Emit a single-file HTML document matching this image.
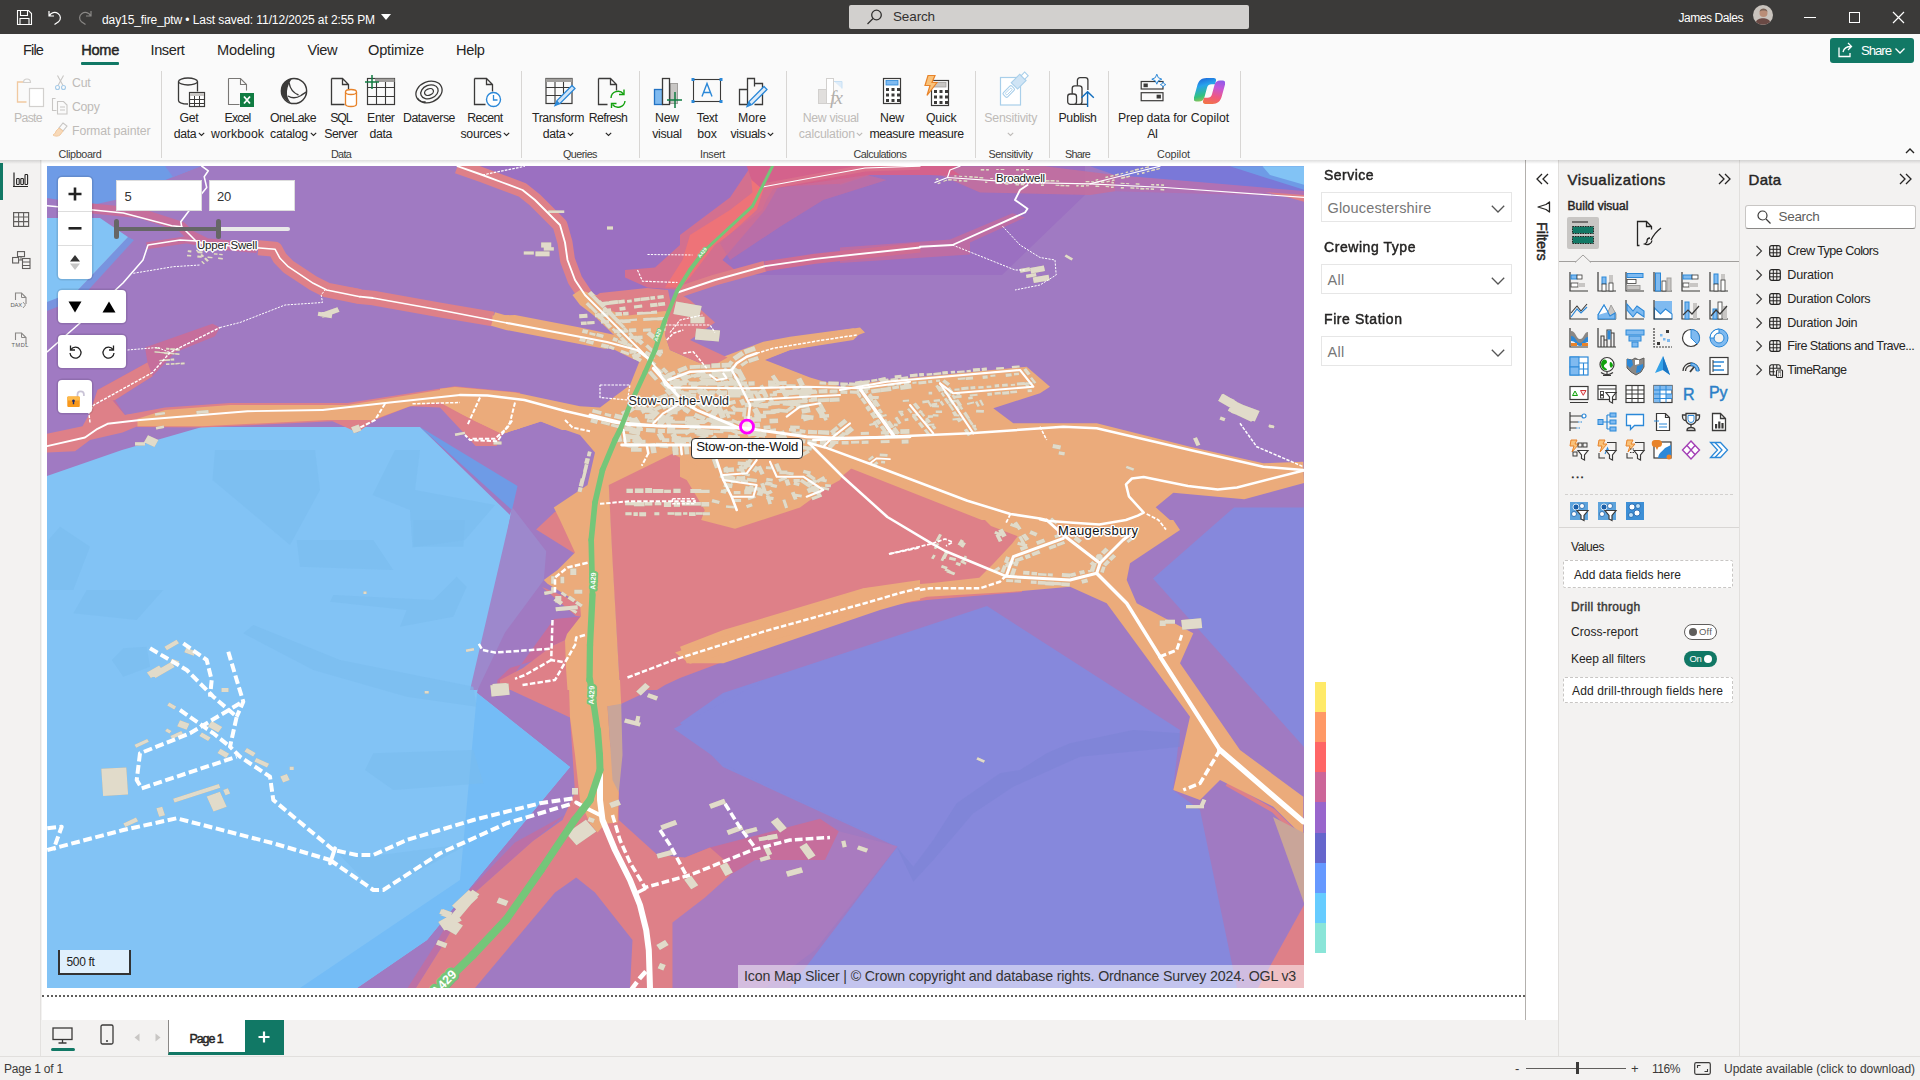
<!DOCTYPE html>
<html lang="en">
<head>
<meta charset="utf-8">
<title>day15_fire_ptw</title>
<style>
*{box-sizing:border-box;margin:0;padding:0}
html,body{width:1920px;height:1080px;overflow:hidden;background:#f3f2f1;font-family:"Liberation Sans",sans-serif;color:#252423}
.abs{position:absolute}
svg{overflow:visible}
.tx{position:absolute;white-space:nowrap}
#titlebar{position:absolute;left:0;top:0;width:1920px;height:34px;background:#3b3a39}
#ribbon{position:absolute;left:0;top:34px;width:1920px;height:126px;background:#fafafa;}
#leftnav{position:absolute;left:0;top:160px;width:41px;height:896px;background:#f3f2f1;border-right:1px solid #e3e1df}
#canvas{position:absolute;left:42px;top:160px;width:1483px;height:860px;background:#fff}
#map{position:absolute;left:47px;top:166px;width:1257px;height:822px;overflow:hidden;background:#a07ac2}
#filters{position:absolute;left:1525px;top:160px;width:33px;height:860px;background:#fff;border-left:1px solid #b3b0ad}
#viz{position:absolute;left:1558px;top:160px;width:182px;height:896px;background:#f3f2f1;border-left:1px solid #e1dfdd;border-right:1px solid #e1dfdd}
#data{position:absolute;left:1740px;top:160px;width:180px;height:896px;background:#f3f2f1}
#pagetabs{position:absolute;left:42px;top:1020px;width:1516px;height:36px;background:#f3f2f1}
#status{position:absolute;left:0;top:1056px;width:1920px;height:24px;background:#f3f2f1;border-top:1px solid #e1dfdd}
</style>
</head>
<body>
<div id="titlebar">
<svg class="abs" style="left:16px;top:9px" width="17" height="17" viewBox="0 0 17 17" ><path d="M1.5 1.5h11l3 3v11h-14z M4.5 1.5v5h7v-5 M4 15.5v-6h9v6" fill="none" stroke="#fff" stroke-width="1.1"/></svg>
<svg class="abs" style="left:47px;top:9px" width="15" height="16" viewBox="0 0 15 16" ><path d="M2 2v5h5 M2.3 7C4 3.5 8 2.5 11 4.5s3.2 6 .5 8.3L7.5 15.5" fill="none" stroke="#fff" stroke-width="1.2"/></svg>
<svg class="abs" style="left:78px;top:9px" width="15" height="16" viewBox="0 0 15 16" ><path d="M13 2v5h-5 M12.7 7C11 3.5 7 2.5 4 4.5s-3.2 6-.5 8.3L7.5 15.5" fill="none" stroke="#8a8886" stroke-width="1.2"/></svg>
<span class="tx" style="left:102px;top:12.3px;font-size:12px;line-height:16px;letter-spacing:-0.09px;color:#fff;">day15_fire_ptw • Last saved: 11/12/2025 at 2:55 PM</span>
<svg class="abs" style="left:381px;top:14px" width="10" height="6" viewBox="0 0 10 6" ><path d="M0 0h10l-5 6z" fill="#fff"/></svg>
<div class="abs" style="left:849px;top:5px;width:400px;height:24px;background:#d2d0ce;border-radius:2px"></div>
<svg class="abs" style="left:866px;top:9px" width="17" height="16" viewBox="0 0 17 16" ><circle cx="10.5" cy="6" r="4.8" fill="none" stroke="#323130" stroke-width="1.3"/><path d="M7 9.5L1.5 15" stroke="#323130" stroke-width="1.3"/></svg>
<span class="tx" style="left:893px;top:8px;font-size:13.5px;line-height:18px;letter-spacing:-0.13px;color:#323130;">Search</span>
<span class="tx" style="left:1678.5px;top:10px;font-size:12px;line-height:16px;letter-spacing:-0.44px;color:#fff;">James Dales</span>
<svg class="abs" style="left:1753px;top:5px" width="20" height="20" viewBox="0 0 20 20" ><circle cx="10" cy="10" r="10" fill="#c9c3bd"/><circle cx="10.5" cy="8" r="4" fill="#b98d77"/><path d="M3 17c1-5 13-5 14 0a10 10 0 0 1-14 0z" fill="#6a4a45"/><path d="M6.5 6.5c1-4 7-4 8 0-2-1.5-6-1.5-8 0z" fill="#7b6458"/></svg>
<div class="abs" style="left:1804px;top:17px;width:12px;height:1px;background:#fff"></div>
<div class="abs" style="left:1849px;top:12px;width:11px;height:11px;border:1px solid #fff"></div>
<svg class="abs" style="left:1892px;top:11px" width="13" height="13" viewBox="0 0 13 13" ><path d="M1 1l11 11M12 1L1 12" stroke="#fff" stroke-width="1.2"/></svg>
</div>
<div id="ribbon"></div>
<span class="tx" style="left:23px;top:40.5px;font-size:14.6px;line-height:19px;letter-spacing:-0.88px;">File</span>
<span class="tx" style="left:81.2px;top:40.5px;font-size:14.6px;line-height:19px;letter-spacing:-0.29px;-webkit-text-stroke:0.45px #252423;">Home</span>
<span class="tx" style="left:150.5px;top:40.5px;font-size:14.6px;line-height:19px;letter-spacing:-0.42px;">Insert</span>
<span class="tx" style="left:217px;top:40.5px;font-size:14.6px;line-height:19px;letter-spacing:-0.16px;">Modeling</span>
<span class="tx" style="left:307.5px;top:40.5px;font-size:14.6px;line-height:19px;letter-spacing:-0.47px;">View</span>
<span class="tx" style="left:368px;top:40.5px;font-size:14.6px;line-height:19px;letter-spacing:-0.2px;">Optimize</span>
<span class="tx" style="left:456px;top:40.5px;font-size:14.6px;line-height:19px;letter-spacing:-0.38px;">Help</span>
<div class="abs" style="left:81px;top:62px;width:38px;height:3px;background:#117865;border-radius:1px"></div>
<div class="abs" style="left:1830px;top:38px;width:84px;height:25px;background:#117865;border-radius:3px"></div>
<svg class="abs" style="left:1837px;top:42px" width="18" height="16" viewBox="0 0 18 16" ><path d="M2 5.5v9h11v-3.5 M6 10c1-4 4-5.5 8-5.5 M11 1l3.5 3.5L11 8" fill="none" stroke="#fff" stroke-width="1.3"/></svg>
<span class="tx" style="left:1861px;top:42px;font-size:13.2px;line-height:17px;letter-spacing:-1.04px;color:#fff;">Share</span>
<svg class="abs" style="left:1895px;top:48px" width="10" height="6" viewBox="0 0 10 6" ><path d="M0.5 0.5l4.5 4.5 4.5-4.5" fill="none" stroke="#fff" stroke-width="1.3"/></svg>
<svg class="abs" style="left:1905px;top:147px" width="10" height="7" viewBox="0 0 10 7" ><path d="M1 6l4-4 4 4" fill="none" stroke="#252423" stroke-width="1.4"/></svg>
<div class="abs" style="left:160.5px;top:71px;width:1px;height:87px;background:#d8d6d4"></div>
<div class="abs" style="left:521px;top:71px;width:1px;height:87px;background:#d8d6d4"></div>
<div class="abs" style="left:638.5px;top:71px;width:1px;height:87px;background:#d8d6d4"></div>
<div class="abs" style="left:786px;top:71px;width:1px;height:87px;background:#d8d6d4"></div>
<div class="abs" style="left:974.5px;top:71px;width:1px;height:87px;background:#d8d6d4"></div>
<div class="abs" style="left:1048.5px;top:71px;width:1px;height:87px;background:#d8d6d4"></div>
<div class="abs" style="left:1107.5px;top:71px;width:1px;height:87px;background:#d8d6d4"></div>
<div class="abs" style="left:1239.5px;top:71px;width:1px;height:87px;background:#d8d6d4"></div>
<span class="tx" style="left:58.5px;top:146.5px;font-size:10.8px;line-height:14px;letter-spacing:-0.36px;color:#3b3a39;">Clipboard</span>
<span class="tx" style="left:331px;top:146.5px;font-size:10.8px;line-height:14px;letter-spacing:-0.7px;color:#3b3a39;">Data</span>
<span class="tx" style="left:563px;top:146.5px;font-size:10.8px;line-height:14px;letter-spacing:-0.55px;color:#3b3a39;">Queries</span>
<span class="tx" style="left:700px;top:146.5px;font-size:10.8px;line-height:14px;letter-spacing:-0.34px;color:#3b3a39;">Insert</span>
<span class="tx" style="left:853.5px;top:146.5px;font-size:10.8px;line-height:14px;letter-spacing:-0.49px;color:#3b3a39;">Calculations</span>
<span class="tx" style="left:988.5px;top:146.5px;font-size:10.8px;line-height:14px;letter-spacing:-0.42px;color:#3b3a39;">Sensitivity</span>
<span class="tx" style="left:1065px;top:146.5px;font-size:10.8px;line-height:14px;letter-spacing:-0.76px;color:#3b3a39;">Share</span>
<span class="tx" style="left:1157px;top:146.5px;font-size:10.8px;line-height:14px;letter-spacing:-0.09px;color:#3b3a39;">Copilot</span>
<span class="tx" style="left:14px;top:109.5px;font-size:12.3px;line-height:16px;letter-spacing:-0.69px;color:#bebbb8;">Paste</span>
<span class="tx" style="left:72px;top:74.5px;font-size:12.3px;line-height:16px;letter-spacing:-0.21px;color:#bebbb8;">Cut</span>
<span class="tx" style="left:72px;top:99px;font-size:12.3px;line-height:16px;letter-spacing:-0.3px;color:#bebbb8;">Copy</span>
<span class="tx" style="left:72px;top:122.8px;font-size:12.3px;line-height:16px;letter-spacing:-0.11px;color:#bebbb8;">Format painter</span>
<span class="tx" style="left:179.5px;top:109.5px;font-size:12.3px;line-height:16px;letter-spacing:-0.27px;">Get</span>
<span class="tx" style="left:173.8px;top:125.8px;font-size:12.3px;line-height:16px;letter-spacing:-0.36px;">data</span>
<svg class="abs" style="left:197.8px;top:132px" width="7" height="5" viewBox="0 0 7 5" ><path d="M0.8 0.8l2.7 2.7 2.7-2.7" fill="none" stroke="#252423" stroke-width="1.1"/></svg>
<span class="tx" style="left:224.5px;top:109.5px;font-size:12.3px;line-height:16px;letter-spacing:-0.82px;">Excel</span>
<span class="tx" style="left:211px;top:125.8px;font-size:12.3px;line-height:16px;letter-spacing:0.05px;">workbook</span>
<span class="tx" style="left:270px;top:109.5px;font-size:12.3px;line-height:16px;letter-spacing:-0.56px;">OneLake</span>
<span class="tx" style="left:270px;top:125.8px;font-size:12.3px;line-height:16px;letter-spacing:-0.24px;">catalog</span>
<svg class="abs" style="left:309.5px;top:132px" width="7" height="5" viewBox="0 0 7 5" ><path d="M0.8 0.8l2.7 2.7 2.7-2.7" fill="none" stroke="#252423" stroke-width="1.1"/></svg>
<span class="tx" style="left:330.3px;top:109.5px;font-size:12.3px;line-height:16px;letter-spacing:-1.2px;">SQL</span>
<span class="tx" style="left:324.3px;top:125.8px;font-size:12.3px;line-height:16px;letter-spacing:-0.54px;">Server</span>
<span class="tx" style="left:367.1px;top:109.5px;font-size:12.3px;line-height:16px;letter-spacing:-0.38px;">Enter</span>
<span class="tx" style="left:369.6px;top:125.8px;font-size:12.3px;line-height:16px;letter-spacing:-0.36px;">data</span>
<span class="tx" style="left:403px;top:109.5px;font-size:12.3px;line-height:16px;letter-spacing:-0.45px;">Dataverse</span>
<span class="tx" style="left:467.2px;top:109.5px;font-size:12.3px;line-height:16px;letter-spacing:-0.58px;">Recent</span>
<span class="tx" style="left:460.5px;top:125.8px;font-size:12.3px;line-height:16px;letter-spacing:-0.3px;">sources</span>
<svg class="abs" style="left:503px;top:132px" width="7" height="5" viewBox="0 0 7 5" ><path d="M0.8 0.8l2.7 2.7 2.7-2.7" fill="none" stroke="#252423" stroke-width="1.1"/></svg>
<span class="tx" style="left:532px;top:109.5px;font-size:12.3px;line-height:16px;letter-spacing:-0.4px;">Transform</span>
<span class="tx" style="left:542.8px;top:125.8px;font-size:12.3px;line-height:16px;letter-spacing:-0.36px;">data</span>
<svg class="abs" style="left:566.8px;top:132px" width="7" height="5" viewBox="0 0 7 5" ><path d="M0.8 0.8l2.7 2.7 2.7-2.7" fill="none" stroke="#252423" stroke-width="1.1"/></svg>
<span class="tx" style="left:588.8px;top:109.5px;font-size:12.3px;line-height:16px;letter-spacing:-0.65px;">Refresh</span>
<svg class="abs" style="left:604.5px;top:132px" width="7" height="5" viewBox="0 0 7 5" ><path d="M0.8 0.8l2.7 2.7 2.7-2.7" fill="none" stroke="#252423" stroke-width="1.1"/></svg>
<span class="tx" style="left:655px;top:109.5px;font-size:12.3px;line-height:16px;letter-spacing:-0.2px;">New</span>
<span class="tx" style="left:652.2px;top:125.8px;font-size:12.3px;line-height:16px;letter-spacing:-0.32px;">visual</span>
<span class="tx" style="left:696.8px;top:109.5px;font-size:12.3px;line-height:16px;letter-spacing:-0.51px;">Text</span>
<span class="tx" style="left:697.2px;top:125.8px;font-size:12.3px;line-height:16px;letter-spacing:-0.11px;">box</span>
<span class="tx" style="left:738px;top:109.5px;font-size:12.3px;line-height:16px;letter-spacing:-0.01px;">More</span>
<span class="tx" style="left:730.5px;top:125.8px;font-size:12.3px;line-height:16px;letter-spacing:-0.37px;">visuals</span>
<svg class="abs" style="left:767px;top:132px" width="7" height="5" viewBox="0 0 7 5" ><path d="M0.8 0.8l2.7 2.7 2.7-2.7" fill="none" stroke="#252423" stroke-width="1.1"/></svg>
<span class="tx" style="left:802.8px;top:109.5px;font-size:12.3px;line-height:16px;letter-spacing:-0.35px;color:#bebbb8;">New visual</span>
<span class="tx" style="left:798.8px;top:125.8px;font-size:12.3px;line-height:16px;letter-spacing:-0.19px;color:#bebbb8;">calculation</span>
<svg class="abs" style="left:856.3px;top:132px" width="7" height="5" viewBox="0 0 7 5" ><path d="M0.8 0.8l2.7 2.7 2.7-2.7" fill="none" stroke="#bebbb8" stroke-width="1.1"/></svg>
<span class="tx" style="left:880px;top:109.5px;font-size:12.3px;line-height:16px;letter-spacing:-0.2px;">New</span>
<span class="tx" style="left:869.5px;top:125.8px;font-size:12.3px;line-height:16px;letter-spacing:-0.41px;">measure</span>
<span class="tx" style="left:926px;top:109.5px;font-size:12.3px;line-height:16px;letter-spacing:-0.19px;">Quick</span>
<span class="tx" style="left:918.7px;top:125.8px;font-size:12.3px;line-height:16px;letter-spacing:-0.41px;">measure</span>
<span class="tx" style="left:984.3px;top:109.5px;font-size:12.3px;line-height:16px;letter-spacing:-0.22px;color:#bebbb8;">Sensitivity</span>
<svg class="abs" style="left:1007.3px;top:132px" width="7" height="5" viewBox="0 0 7 5" ><path d="M0.8 0.8l2.7 2.7 2.7-2.7" fill="none" stroke="#bebbb8" stroke-width="1.1"/></svg>
<span class="tx" style="left:1058.5px;top:109.5px;font-size:12.3px;line-height:16px;letter-spacing:-0.33px;">Publish</span>
<span class="tx" style="left:1118px;top:109.5px;font-size:12.3px;line-height:16px;letter-spacing:-0.16px;">Prep data for</span>
<span class="tx" style="left:1147.2px;top:125.8px;font-size:12.3px;line-height:16px;letter-spacing:-0.56px;">AI</span>
<span class="tx" style="left:1190.8px;top:109.5px;font-size:12.3px;line-height:16px;letter-spacing:0.03px;">Copilot</span>
<svg class="abs" style="left:16px;top:77px" width="29" height="31" viewBox="0 0 29 31" ><path d="M7 5h-5.5v20h9" fill="none" stroke="#f1c9a0" stroke-width="1.3"/><path d="M7.5 5.5c0-2 1-3.5 3.5-3.5s3.5 1.5 3.5 3.5z" fill="none" stroke="#d2d0ce" stroke-width="1.2"/><rect x="13.5" y="11.5" width="14" height="18" fill="#fff" stroke="#d2d0ce" stroke-width="1.2"/></svg>
<svg class="abs" style="left:55px;top:75px" width="11" height="16" viewBox="0 0 11 16" ><path d="M2.5 0.5l5.5 10M8.5 0.5l-5.5 10" stroke="#c8c6c4" stroke-width="1.1"/><circle cx="2.5" cy="12.5" r="2" fill="none" stroke="#a6cbe8" stroke-width="1.1"/><circle cx="8.5" cy="12.5" r="2" fill="none" stroke="#a6cbe8" stroke-width="1.1"/></svg>
<svg class="abs" style="left:52px;top:98px" width="17" height="17" viewBox="0 0 17 17" ><path d="M3.5 0.5h-3v12h4M5.5 3.5h6l3.5 3.5v9h-9.5z M8 9h5M8 12h5" fill="none" stroke="#c8c6c4" stroke-width="1.1"/></svg>
<svg class="abs" style="left:52px;top:122px" width="17" height="15" viewBox="0 0 17 15" ><path d="M11 1l4 3-4 5-4-3z" fill="none" stroke="#c8c6c4" stroke-width="1.1"/><path d="M7 6l4 3-3 4c-2 1.5-5 1.5-7 0 2-1 3-3 3-4z" fill="#f8d9b8" stroke="#f1c9a0" stroke-width="1"/></svg>
<svg class="abs" style="left:177px;top:77px" width="29" height="31" viewBox="0 0 29 31" ><path d="M1.5 4.5v19c0 2 4 3.5 9.5 3.5M20.5 4.5v10" fill="none" stroke="#3b3a39" stroke-width="1.3"/><ellipse cx="11" cy="4.5" rx="9.5" ry="3.5" fill="none" stroke="#3b3a39" stroke-width="1.3"/><rect x="12.5" y="15.5" width="15" height="14" fill="#fff" stroke="#3b3a39" stroke-width="1.2"/><rect x="13" y="16" width="14" height="3" fill="#c8c6c4"/><path d="M17.5 19v10.5M22.5 19v10.5M12.5 22.5h15M12.5 26.5h15" stroke="#3b3a39" stroke-width="1"/></svg>
<svg class="abs" style="left:227px;top:77px" width="28" height="31" viewBox="0 0 28 31" ><path d="M1.5 1.5h12l6 6v6M19.5 7.5h-6v-6M1.5 1.5v26h11" fill="none" stroke="#797775" stroke-width="1.1"/><rect x="13" y="16" width="14" height="14" fill="#107c41"/><path d="M17 19.5l6 7M23 19.5l-6 7" stroke="#fff" stroke-width="1.8"/></svg>
<svg class="abs" style="left:280px;top:77px" width="28" height="28" viewBox="0 0 28 28" ><circle cx="14" cy="14" r="12.6" fill="none" stroke="#3b3a39" stroke-width="1.5"/><path d="M12 1.6c-6.5 1-11 6.5-10.5 13 .500 5.5 4 9.5 9 11-2.5-3-4-7-3.5-11.5.400-4.5 2.5-9 5-12.5z" fill="#3b3a39"/><path d="M10.5 1.8c3-1.5 7-1 9.5 1-3.5-.800-6.5-.500-9.5-1z" fill="#3b3a39"/><path d="M9 5.5c1 6 4.5 10.5 9.5 12.5M8 19c4 2.5 9 2 13-.500 2.5-1.7 4.3-3 5.5-3.5" fill="none" stroke="#3b3a39" stroke-width="1.4"/></svg>
<svg class="abs" style="left:330px;top:77px" width="28" height="31" viewBox="0 0 28 31" ><path d="M1.5 1.5h11l6 6v5M18.5 7.5h-6v-6M1.5 1.5v26h13" fill="none" stroke="#3b3a39" stroke-width="1.3"/><path d="M15.5 15v12c0 1.5 2.5 2.5 5.5 2.5s5.5-1 5.5-2.5v-12" fill="#fff" stroke="#e8832a" stroke-width="1.3"/><ellipse cx="21" cy="15" rx="5.5" ry="2.5" fill="#fff" stroke="#e8832a" stroke-width="1.3"/></svg>
<svg class="abs" style="left:365px;top:75px" width="31" height="31" viewBox="0 0 31 31" ><rect x="2.5" y="3.5" width="27" height="26" fill="none" stroke="#3b3a39" stroke-width="1.2"/><rect x="10" y="3.5" width="19.5" height="3.5" fill="#a19f9d"/><path d="M2.5 12.5h27M2.5 21.5h27M11.5 7v22.5M20.5 7v22.5" stroke="#3b3a39" stroke-width="1.1"/><path d="M7 0v14M0 7h14" stroke="#107c41" stroke-width="1.5"/></svg>
<svg class="abs" style="left:414px;top:79px" width="30" height="26" viewBox="0 0 30 26" ><g fill="none" stroke="#3b3a39" stroke-width="1.3" transform="rotate(-22 15 13)"><ellipse cx="15" cy="13" rx="13.5" ry="10.3"/><ellipse cx="15.5" cy="13" rx="9" ry="6.6"/><ellipse cx="15" cy="13" rx="4.6" ry="3.2"/></g><path d="M3.5 19c1.5 3 5 4.5 8 3.5" fill="none" stroke="#3b3a39" stroke-width="1.3"/></svg>
<svg class="abs" style="left:473px;top:77px" width="29" height="31" viewBox="0 0 29 31" ><path d="M1.5 1.5h12l6 6v7M19.5 7.5h-6v-6M1.5 1.5v26h11" fill="none" stroke="#3b3a39" stroke-width="1.3"/><circle cx="20.5" cy="22.5" r="7" fill="#fff" stroke="#2b88d8" stroke-width="1.4"/><path d="M20.5 18v5h4" fill="none" stroke="#2b88d8" stroke-width="1.3"/></svg>
<svg class="abs" style="left:545px;top:77px" width="31" height="31" viewBox="0 0 31 31" ><rect x="1" y="1.5" width="26" height="25" fill="none" stroke="#3b3a39" stroke-width="1.2"/><rect x="1" y="1.5" width="26" height="3.5" fill="#a19f9d"/><path d="M1 10.5h26M1 18.5h18M10 5v21.5M18.5 5v15" stroke="#3b3a39" stroke-width="1.1"/><path d="M27 8.5l3 3-15 15-5 2 2-5z" fill="#cfe4f7" stroke="#2b88d8" stroke-width="1.3"/><path d="M10 28.5l2-5 3 3z" fill="#2b88d8"/></svg>
<svg class="abs" style="left:597px;top:77px" width="30" height="31" viewBox="0 0 30 31" ><path d="M1.5 1.5h12l6 6v6M19.5 7.5h-6v-6M1.5 1.5v26h9" fill="none" stroke="#3b3a39" stroke-width="1.3"/><path d="M14 21a7 7 0 0 1 12.5-4M28 24a7 7 0 0 1-12.5 3.5" fill="none" stroke="#13a10e" stroke-width="1.4"/><path d="M27 12.5v5h-5M14.5 31v-4.5h5" fill="none" stroke="#13a10e" stroke-width="1.4"/></svg>
<svg class="abs" style="left:653px;top:77px" width="30" height="31" viewBox="0 0 30 31" ><rect x="17.5" y="6.5" width="7" height="20" fill="#c8c6c4" stroke="#a19f9d" stroke-width="1"/><rect x="1.5" y="12.5" width="8" height="15" fill="#7fbaf0" stroke="#2272c3" stroke-width="1.3"/><rect x="9.5" y="1.5" width="7" height="26" fill="#fafafa" stroke="#3b3a39" stroke-width="1.3"/><path d="M22 15v16M14 23h15" stroke="#107c41" stroke-width="1.5"/></svg>
<svg class="abs" style="left:691px;top:77px" width="32" height="28" viewBox="0 0 32 28" ><rect x="2.5" y="2.5" width="27" height="22" fill="none" stroke="#3b3a39" stroke-width="1.1"/><rect x="0.5" y="1" width="3" height="3" fill="#2b88d8"/><rect x="28.5" y="1" width="3" height="3" fill="#2b88d8"/><rect x="0.5" y="23" width="3" height="3" fill="#2b88d8"/><rect x="28.5" y="23" width="3" height="3" fill="#2b88d8"/><path d="M11 19.5l5-13 5 13M12.5 15.5h7" fill="none" stroke="#2b88d8" stroke-width="1.4"/></svg>
<svg class="abs" style="left:738px;top:77px" width="31" height="31" viewBox="0 0 31 31" ><path d="M1.5 27.5v-15h8v15zM9.5 12.5v-11h7v8M16.5 6.5h8v21h-8" fill="none" stroke="#3b3a39" stroke-width="1.3"/><path d="M26 9.5l3 3-15 15-5 2 2-5z" fill="#deecf9" stroke="#2b88d8" stroke-width="1.3"/><path d="M9 29.5l2-5 3 3z" fill="#2b88d8"/></svg>
<svg class="abs" style="left:817px;top:77px" width="30" height="30" viewBox="0 0 30 30" ><rect x="1.5" y="12.5" width="8" height="14" fill="#e1dfdd" stroke="#d2d0ce" stroke-width="1"/><rect x="9.5" y="1.5" width="7" height="25" fill="#fff" stroke="#d2d0ce" stroke-width="1"/><path d="M17 4.5h8v7" fill="#deecf9" stroke="#c7e0f4" stroke-width="1"/></svg>
<span class="tx" style="left:830px;top:84.5px;font-size:19.5px;line-height:25px;letter-spacing:-1.08px;color:#b3b0ad;font-family:'Liberation Serif',serif;font-style:italic;">fx</span>
<svg class="abs" style="left:882px;top:77px" width="20" height="28" viewBox="0 0 20 28" ><rect x="1.5" y="1.5" width="17" height="25" fill="#fff" stroke="#3b3a39" stroke-width="1.2"/><rect x="4" y="3.5" width="12" height="4.5" fill="#7fbaf0" stroke="#2b88d8" stroke-width="0.8"/><rect x="4" y="11" width="3" height="3" fill="#3b3a39"/><rect x="4" y="16.5" width="3" height="3" fill="#3b3a39"/><rect x="4" y="22" width="3" height="3" fill="#3b3a39"/><rect x="9.5" y="11" width="3" height="3" fill="#3b3a39"/><rect x="9.5" y="16.5" width="3" height="3" fill="#3b3a39"/><rect x="9.5" y="22" width="3" height="3" fill="#3b3a39"/><rect x="15" y="11" width="3" height="3" fill="#3b3a39"/><rect x="15" y="16.5" width="3" height="3" fill="#3b3a39"/><rect x="15" y="22" width="3" height="3" fill="#3b3a39"/></svg>
<svg class="abs" style="left:930px;top:79px" width="20" height="28" viewBox="0 0 20 28" ><rect x="1.5" y="1.5" width="17" height="25" fill="#fff" stroke="#3b3a39" stroke-width="1.2"/><rect x="4" y="3.5" width="12" height="4.5" fill="#c8c6c4" stroke="#a19f9d" stroke-width="0.8"/><rect x="4" y="11" width="3" height="3" fill="#3b3a39"/><rect x="4" y="16.5" width="3" height="3" fill="#3b3a39"/><rect x="4" y="22" width="3" height="3" fill="#3b3a39"/><rect x="9.5" y="11" width="3" height="3" fill="#3b3a39"/><rect x="9.5" y="16.5" width="3" height="3" fill="#3b3a39"/><rect x="9.5" y="22" width="3" height="3" fill="#3b3a39"/><rect x="15" y="11" width="3" height="3" fill="#3b3a39"/><rect x="15" y="16.5" width="3" height="3" fill="#3b3a39"/><rect x="15" y="22" width="3" height="3" fill="#3b3a39"/></svg>
<svg class="abs" style="left:924px;top:75px" width="14" height="21" viewBox="0 0 14 21" ><path d="M4 0.5h7l-3 7h5l-10 13 3-10h-5z" fill="#f9c27a" stroke="#e8832a" stroke-width="1.2"/></svg>
<svg class="abs" style="left:999px;top:75px" width="30" height="32" viewBox="0 0 30 32" ><rect x="1.5" y="2.5" width="20" height="27.5" fill="#fff" stroke="#a9cfea" stroke-width="1.2"/><g transform="rotate(45 14 13)"><rect x="9" y="-1.5" width="9" height="12" fill="#cfe4f5" stroke="#a9cfea" stroke-width="1.1"/><rect x="11" y="-6.5" width="5" height="5" fill="#fff" stroke="#a9cfea" stroke-width="1.1"/><rect x="10.5" y="12.5" width="6" height="12" rx="1.5" fill="#fff" stroke="#a9cfea" stroke-width="1.1"/><rect x="12.3" y="14.5" width="2.4" height="8" rx="1" fill="none" stroke="#a9cfea" stroke-width="0.9"/></g></svg>
<svg class="abs" style="left:1067px;top:77px" width="28" height="31" viewBox="0 0 28 31" ><rect x="10.4" y="0.7" width="10.5" height="26.6" rx="2.6" fill="#fafafa" stroke="#3b3a39" stroke-width="1.3"/><rect x="5.2" y="8.8" width="9.8" height="18.5" rx="2.6" fill="#fafafa" stroke="#3b3a39" stroke-width="1.3"/><rect x="0.7" y="17" width="8.8" height="10.3" rx="2.6" fill="#fafafa" stroke="#3b3a39" stroke-width="1.3"/><rect x="16" y="13" width="9" height="16" fill="#fafafa"/><path d="M16 27.3h4" stroke="#3b3a39" stroke-width="1.3"/><path d="M20.6 30v-15.5M14.4 20.8l6.2-6 6.2 6" fill="none" stroke="#0f6cbd" stroke-width="1.4"/></svg>
<svg class="abs" style="left:1140px;top:77px" width="28" height="26" viewBox="0 0 28 26" ><rect x="1.2" y="4.5" width="21.8" height="7.5" fill="none" stroke="#3b3a39" stroke-width="1.2"/><rect x="1.2" y="15.7" width="21.8" height="8" fill="none" stroke="#3b3a39" stroke-width="1.2"/><rect x="3.5" y="6.5" width="4.3" height="3.7" fill="#3b3a39"/><rect x="16.6" y="17.7" width="4.3" height="3.8" fill="#3b3a39"/><path d="M16.8 -2.8l1.5 3.5 3.5 1.5-3.5 1.5-1.5 3.5-1.5-3.5-3.5-1.5 3.5-1.5z" fill="#fafafa" stroke="#2b88d8" stroke-width="1" transform="translate(0 0)"/><path d="M23.1 4.8l.900 1.9 1.9.900-1.9.900-.900 1.9-.900-1.9-1.9-.900 1.9-.900z" fill="#fafafa" stroke="#2b88d8" stroke-width="0.9"/></svg>
<div class="abs" style="left:1194px;top:77px;width:31px;height:28px;background:linear-gradient(165deg,#1c5fd8 5%,#27a3ec 30%,#34c27c 58%,#f2c22f 88%);clip-path:path('M12.5 1h7c2 0 3 1.2 2.4 3.2l-.900 3h-3.5c-2.3 0-3.7 1-4.4 3.3l-2.6 9.5c-.800 3-2.7 4.5-5.6 4.5h-2.4c-2.2 0-3.2-1.5-2.6-3.8l3.3-12c1.3-5 4.3-7.7 9.3-7.7z')"></div>
<div class="abs" style="left:1194px;top:77px;width:31px;height:28px;background:linear-gradient(195deg,#7b5cf0 5%,#c556d6 35%,#f0587f 62%,#f27a3a 92%);clip-path:path('M18.5 27h-7c-2 0-3-1.2-2.4-3.2l.900-3h3.5c2.3 0 3.7-1 4.4-3.3l2.6-9.5c.800-3 2.7-4.5 5.6-4.5h2.4c2.2 0 3.2 1.5 2.6 3.8l-3.3 12c-1.3 5-4.3 7.7-9.3 7.7z')"></div>
<div id="leftnav"></div>
<div class="abs" style="left:0;top:163px;width:3px;height:37px;background:#117865"></div>
<svg class="abs" style="left:13px;top:172px" width="16" height="16" viewBox="0 0 16 16" ><path d="M1 0.5v13.5M0 14.5h15" fill="none" stroke="#252423" stroke-width="1.2"/><rect x="3.6" y="6.5" width="2.6" height="6" rx="0.8" fill="none" stroke="#252423" stroke-width="1.1"/><rect x="7.8" y="6.5" width="2.6" height="6" rx="0.8" fill="none" stroke="#252423" stroke-width="1.1"/><rect x="12" y="2.5" width="2.6" height="10" rx="0.8" fill="none" stroke="#252423" stroke-width="1.1"/></svg>
<svg class="abs" style="left:12px;top:212px" width="18" height="16" viewBox="0 0 18 16" ><rect x="1.6" y="0.6" width="15" height="13.8" fill="none" stroke="#605e5c" stroke-width="1.2"/><path d="M1.6 5h15M1.6 9.6h15M6.6 0.6v13.8M11.6 0.6v13.8" stroke="#605e5c" stroke-width="1.1"/></svg>
<svg class="abs" style="left:12px;top:251px" width="19" height="19" viewBox="0 0 19 19" ><rect x="5.5" y="0.6" width="7" height="5" fill="none" stroke="#605e5c" stroke-width="1.1"/><rect x="0.6" y="6.5" width="6" height="5.5" fill="#f3f2f1" stroke="#605e5c" stroke-width="1.1"/><rect x="10.5" y="7.5" width="7.5" height="10" fill="#f3f2f1" stroke="#605e5c" stroke-width="1.1"/><path d="M10.5 11h7.5M10.5 14.5h7.5M6.6 9h3.9M9 5.6v3.4" stroke="#605e5c" stroke-width="1"/></svg>
<svg class="abs" style="left:14px;top:292px" width="14" height="17" viewBox="0 0 14 17" ><path d="M1.5 8v-7h6l4.5 4.5v6.5" fill="none" stroke="#8a8886" stroke-width="1.1"/><path d="M7.5 1v4.5h4.5" fill="none" stroke="#8a8886" stroke-width="1"/></svg>
<span class="tx" style="left:10.5px;top:301px;font-size:5.8px;line-height:8px;letter-spacing:-0.14px;color:#605e5c;">DAX</span>
<svg class="abs" style="left:22px;top:301px" width="5" height="8" viewBox="0 0 5 8" ><path d="M1 1l2.5 3-2.5 3" fill="none" stroke="#8a8886" stroke-width="0.9"/></svg>
<svg class="abs" style="left:14px;top:332px" width="14" height="17" viewBox="0 0 14 17" ><path d="M1.5 8v-7h6l4.5 4.5v6.5" fill="none" stroke="#8a8886" stroke-width="1.1"/><path d="M7.5 1v4.5h4.5" fill="none" stroke="#8a8886" stroke-width="1"/></svg>
<span class="tx" style="left:11.5px;top:342px;font-size:5.6px;line-height:7px;letter-spacing:0.56px;color:#605e5c;">TMDL</span>
<div id="canvas"></div>
<div class="abs" style="left:42px;top:995px;width:1483px;height:0;border-top:2px dotted #605e5c"></div>
<div id="map"><svg width="1257" height="822" viewBox="47 166 1257 822" style="position:absolute;left:0;top:0">
<polygon fill="#6e9be6" points="47,166 201,166 173,177 115,200 92,205 47,198" />
<polygon fill="#8688dc" points="165,166 201,166 173,177" />
<polygon fill="#6e9be6" points="128,237 134,240 82,297 47,311 47,298 78,290" opacity="0.8"/>
<polygon fill="#82c3f5" points="47,218 100,218 128,237 78,290 47,302" />
<polygon fill="#82c3f5" points="47,476 122,450 202,427 420,427 510,515 512,508 477,693 570,767 487,867 427,940 357,988 47,988" />
<polygon fill="#6e9be6" points="420,427 517.5,486 512,510" />
<polygon fill="#9d88cc" points="512.5,507.5 546.2,551.2 543.8,580 505,632.5 477.5,690 470,690" />
<polygon fill="#74bcf6" points="477,693 570,767 487,867 427,940 357,988 300,988 460,880" />
<polygon fill="#79bcee" points="60,526.7 90,546.7 73.3,590 48.3,590 48.3,540" opacity="0.6"/>
<polygon fill="#79bcee" points="86.7,590 163.3,590 136.7,620 73.3,613.3" opacity="0.6"/>
<polygon fill="#79bcee" points="123.3,648.3 146.7,646.7 150,666.7 123.3,676.7 111.7,660" opacity="0.6"/>
<polygon fill="#79bcee" points="253.3,625 340,660 423.3,676.7 473.3,686.7 476.7,706.7 406.7,696.7 313.3,670 243.3,633.3" opacity="0.6"/>
<polygon fill="#79bcee" points="333.3,595 433.3,600 456.7,576.7 466.7,586.7 453.3,616.7 400,626.7 406.7,610 330,601.7" opacity="0.6"/>
<polygon fill="#79bcee" points="296.7,540 373.3,540 393.3,570 300,566.7" opacity="0.6"/>
<polygon fill="#79bcee" points="413.3,520 465,520 463.3,546.7 413.3,546.7" opacity="0.6"/>
<polygon fill="#79bcee" points="373.3,753.3 473.3,750 483.3,783.3 393.3,790 365,770" opacity="0.6"/>
<polygon fill="#79bcee" points="335,850 373.3,856 470,843.3 383.3,890 373.3,890" opacity="0.6"/>
<polygon fill="#79bcee" points="395,450 420,450 415,490 495,505 465,540 412.5,547.5 410,510 372.5,495" opacity="0.6"/>
<polygon fill="#79bcee" points="215,450 315,450 320,490 290,545 212.5,480" opacity="0.6"/>
<polygon fill="#8688dc" points="680,723 723,693 987,606 1180,730 1173,790 1200,810 1237,988 790,988 897,847 723,767" />
<polygon fill="#8688dc" points="765,680 673.8,728.8 727.5,766.2 897.5,846.2 920,870 920,680" />
<polygon fill="#8688dc" points="1234,507.4 1304,507.4 1304,747 1153,578.5" />
<polygon fill="#7e85d6" points="896.7,846.7 913.3,881.7 933.3,860 973.3,813.3 1013.3,786.7 1080,756.7 1180,746.7 1180,733.3 1133.3,730 1070,743.3 1046.7,753.3 1020,770 1000,773.3 956.7,803.3 933.3,840 913.3,866.7" opacity="0.7"/>
<polyline fill="none" stroke="#de8088" stroke-width="4" points="1226.7,784 1273.3,810.7 1303.3,840.7" stroke-linejoin="round" stroke-linecap="butt" />
<polygon fill="#9b70c1" points="460,166 1085,166 1085,195 1002,275 700,275 640,300 585,300 565,240 540,200" />
<polygon fill="#c66e9c" points="840,166.2 1045,166.2 1115,175 1115,191.2 1090,195 980,192.5 940,175 877.5,172.5 840,185" opacity="0.85"/>
<polygon fill="#b071b4" points="1115,175 1305,190 1305,201.2 1285,196.2 1115,191.2" />
<polygon fill="#de8088" points="1265,192 1305,195 1305,202 1285,196.5" />
<polygon fill="#d5628c" points="785,166.2 947.5,166.2 960,175 940,175.5 877.5,172.5 840,183.8 815,185 760,187.5" />
<polygon fill="#7a78d8" points="1090,166.2 1305,166.2 1305,191.2 1190,181.2 1115,175" />
<polygon fill="#6e9be6" points="1230,166.2 1305,166.2 1305,190 1265,177.5" />
<polygon fill="#82c3f5" points="1262.5,166.2 1305,166.2 1305,185 1270,175" />
<polygon fill="#bd6da4" points="840,247.5 950,239.5 1012.5,213.2 1025,217.5 970,242.5 970,254.5 840,263" />
<polygon fill="#d3708f" points="751,166.2 790,166.2 765,210 722.5,260 735,270 680,290 647.5,287.5 625,277.5 625,270 655,267.5 680,245 680,235 730,197.5" />
<polygon fill="#ee7378" points="750,166.2 787.5,166.2 766.2,200 762.5,210 715,245 690,277.5 680,287.5 665,287.5 682.5,260 690,235 730,210 752.5,192.5" />
<polygon fill="#d4628c" points="746.7,166 956.7,166 946.7,175 866.7,175 763.3,190 751.7,180" />
<polygon fill="#c66e9c" points="763.3,190 866.7,175 886.7,180 823.3,200 780,226.7 730,260 720,243.3 756.7,210" opacity="0.7"/>
<polyline fill="none" stroke="#d96f8c" stroke-width="7" points="762.5,187 865,168 920,166.2" stroke-linejoin="round" stroke-linecap="butt" />
<polyline fill="none" stroke="#de8088" stroke-width="11" points="677.5,292.5 715,280 765,266.2" stroke-linejoin="round" stroke-linecap="butt" />
<polyline fill="none" stroke="#cf6d92" stroke-width="10" points="765,266.2 815,258.8 920,247.5" stroke-linejoin="round" stroke-linecap="butt" />
<polyline fill="none" stroke="#de8088" stroke-width="15" points="457.5,166.2 482.5,175 502.5,182.5 522.5,190 535,200 547.5,212.5 560,225 565,242.5 567.5,260 575,280 585,295" stroke-linejoin="round" stroke-linecap="butt" />
<polyline fill="none" stroke="#c66e9c" stroke-width="10" points="90,208.3 140,213.3 181.7,226.7 190,235 206.7,243.3 256.7,248" stroke-linejoin="round" stroke-linecap="butt" />
<polyline fill="none" stroke="#c66e9c" stroke-width="7" points="146.7,245.8 186.7,239.7 196.7,241.7" stroke-linejoin="round" stroke-linecap="butt" />
<polyline fill="none" stroke="#de8088" stroke-width="15" points="258.3,247.8 275,249.2 280,258.3 288.3,266.7 313.3,283.3 326.7,290 360,296.7" stroke-linejoin="round" stroke-linecap="butt" />
<polyline fill="none" stroke="#de8088" stroke-width="14.5" points="350,294.5 360,296.7 373,298 440,310 493,319" stroke-linejoin="round" stroke-linecap="butt" />
<polyline fill="none" stroke="#ebab7b" stroke-width="14" points="493,319 507,323 560,333 607,342" stroke-linejoin="round" stroke-linecap="butt" />
<polygon fill="#ebab7b" points="492.5,315.5 515,315 580,327.5 615,335 635,350 650,360 635,360 615,350 590,340 522.5,330 492.5,322.5" />
<polygon fill="#ebab7b" points="572.5,295 580,290 602.5,297 620,320 650,350 640,357.5 600,320 580,305" />
<polygon fill="#de8088" points="47,433.8 82.5,426.2 88.8,415 92.5,405 112.5,400 125,415 165,410 137.5,418.8 137.5,426.2 122.5,432.5 90,440 75,451.2 47,452.5" />
<polygon fill="#c66e9c" points="92.5,405 97.5,390 147.5,362.5 145,347.5 212.5,323.8 220,327.5 215,336.2 175,352.5 152.5,376.2 115,400 125,415 112.5,400" />
<polygon fill="#de8088" points="97.5,390 147.5,362.5 152.5,376.2 115,400 92.5,405" />
<polygon fill="#de8088" points="125,415 165,407.5 230,403 347.5,403 455,386.2 520,392.5 520,428.2 502.2,434 496.2,446 475,445 440,407.5 410,406.2 375,420 357.5,432.5 332.5,421.2 202.5,427.5 137.5,427" />
<polygon fill="#ebab7b" points="137.5,418.8 165,410 230,405 347.5,405 455,387.5 520,395 520,428.2 502.2,434 468,417.8 440,402.5 410,406.2 372.5,420 337.5,420 327.5,420 202.5,426.2 137.5,426.2" />
<polygon fill="#de8088" points="608,470 700,440 1022,470 1022,592 927,600 880,607 720,663 680,678 665,685 657,690 620,690 612,560" />
<polygon fill="#de8088" points="555,511.8 536.2,529.5 574.2,553.2 590,545 590,510" />
<polygon fill="#de8088" points="542,587 580,603 590,605 590,617.5 576,616" />
<polygon fill="#c66e9c" points="554,619 576,617 590,617.5 590,640 567,635 565,640 552,646 536,660 510,668 497.5,680 496.2,690 502.5,690" />
<polygon fill="#de8088" points="565,640 590,637.5 590,690 500,690 500,680 523,668 552,646" />
<polygon fill="#de8088" points="440,404.4 475.6,446 496.3,446 502.2,434.1 468.1,417.8" />
<polygon fill="#a97bbf" points="730,855 838.8,831.2 897.5,846.2 815,950 765,988 672.5,988 672.5,922.5" />
<polygon fill="#c66e9c" points="685,857.5 710,847.5 820,818.8 838.8,831.2 825,860 755,860 730,875 730,865" />
<polygon fill="#c66e9c" points="533,841 565,815 515,842.5 462.5,897 435,945 407.5,988 416,988 443,945 470,897" opacity="0.75"/>
<polygon fill="#de8088" points="500,685 570,680 620,680 657.5,680 640,695 618.8,705 618.8,820 657.5,855 685,857.5 710,847.5 730,865 730,875 705,897.5 672.5,922.5 672.5,988 630,988 632.5,940 595,892.5 576.2,877.5 555,892.5 475,988 416,988 443,945 470,897 533,841 562.5,820 575,792.5 570,717.5" />
<polygon fill="#ebab7b" points="680,366.7 723.3,356.7 763.3,341.7 790,336.7 853.3,328.3 861.7,331.7 853.3,340 790,350 763.3,360 823.3,383.3 840,386.7 886.7,380 1026.7,366.7 1050,386.7 1040,393.3 993.3,408.3 1013.3,423.3 1096.7,423.3 1190,446.7 1263.3,463.3 1303.3,461.7 1304,483 1244.3,499.3 1173.3,492.7 1155.7,507.3 1170,520 981.7,520 846.7,466.7 840,480 780,513.3 706.7,513.3 686.7,480 680,476.7" />
<polygon fill="#ebab7b" points="572.5,295 590,300 605,297.5 647.5,290 665,292.5 670,310 665,335 670,350 710,367.5 740,357.5 777.5,340 860,327.5 865,332.5 845,340 790,350 765,360 810,377.5 840,386.2 920,377.5 920,430 562,430 540.8,421.5 514.8,430 505,430 447.5,402.5 440,401.2 440,388.8 455,387 515,392.5 580,406.2 600,407.5 630,385 640,360" />
<polygon fill="#ebab7b" points="440,420 920,420 920,491 852.5,467.5 837.5,480 800,507.5 735,528.8 701.2,520 711.2,492.5 686.2,478.8 697.5,466.2 672.5,453.8 608.8,485 612.5,560 620,690 567.5,690 566,668 565,640 567,634 581,616 580,603.8 547.5,583.8 543.8,580 557.5,570 575,552.5 560,520 553.8,507.5 580,490 587.5,485 595,452.5 580,435 540.8,421.5 502.2,434 472.8,420" />
<polygon fill="#de8088" points="594,297 600,293 647,288 668,290 673,314 665,311 628,315.6 606,309.6 597,300" />
<polygon fill="#de8088" points="677.5,292.5 690,300 715,322.5 690,340 727.5,357.5 710,367.5 670,350 665,335 670,310" />
<polygon fill="#ebab7b" points="568.8,680 620,680 621.2,705 607.5,706.2 610,742.5 618.8,792.5 617.5,822.5 605,823.8 597.5,832.5 590,823.8 580,800 575,755 570,717.5" />
<polygon fill="#c9a599" points="607.5,706.2 621.2,703.8 622.5,755 618.8,792.5 612.5,780 610,742.5" />
<polygon fill="#ebab7b" points="985,520 1173.3,520 1180,530 1130,563.3 1126.7,580 1136.7,603.3 1193.3,633.3 1180,663.3 1240,750 1303.3,796.7 1303.3,836.7 1273.3,806.7 1220,780 1200,800 1173.3,790 1190,716.7 1106.7,603.3 1070,586.7 1013.3,591.7 926.7,596.7 880,610 723.3,663.3 686.7,663.3 680,646.7 723.3,630 863.3,588.3 930,583.3 979.3,577.7 994,563 1012,543.7 1017.7,536.3 991,526" />
<polygon fill="#ebab7b" points="675,652.5 765,622.5 865,588 920,580 920,600 877.5,606.2 790,635 690,663.8" />
<polygon fill="#de8088" points="1304,905 1304,988 1258,988" />
<polygon fill="#c9a599" points="1273,817 1304,833 1304,903" />
<path fill="#e1dbca" style="filter:drop-shadow(0.7px 0.9px 0 #b4ac96)" d="M591.4 418.4 598.1 420 596.9 424 590.2 422.3ZM592.9 409.1 601.9 411.3 600.8 414.7 591.9 412.5ZM601.5 420.8 610.3 423 609.4 425.8 600.6 423.6ZM605.2 412.7 611.5 414.3 610.6 417.2 604.3 415.6ZM611.6 423.4 622.3 426 621.4 429 610.7 426.3ZM615.2 413.4 624.7 415.7 623.3 420.3 613.8 417.9ZM624.4 426.3 632.8 426.9 632.4 431.7 624 431ZM623.9 417.1 635 417.9 634.7 421.3 623.5 420.4ZM636.4 427.2 643.1 427.7 642.8 431.1 636.1 430.6ZM646.2 427.9 655.6 428.6 655.2 432.7 645.8 432ZM647 419.3 656.3 420 656 422.9 646.7 422.2ZM657.8 428.7 665 428.9 664.9 433.1 657.6 432.9ZM657.7 419 665.6 419.2 665.5 423.1 657.6 422.9ZM667 429 674.8 429.2 674.6 433.5 666.9 433.4ZM667.4 419.2 674.9 419.4 674.8 423.4 667.3 423.2ZM674.8 429.2 686 429.4 685.9 433.7 674.6 433.4ZM674.7 420.4 686.6 420.7 686.5 423.7 674.6 423.4ZM684.6 429.4 695.2 429.6 695.1 432.7 684.5 432.5ZM687.1 419.5 693.3 419.7 693.2 423.8 687 423.7ZM694.7 429.7 704.1 429.9 704 434.5 694.6 434.2ZM694.6 419.9 704.8 420.1 704.7 424.1 694.5 423.9ZM704.6 429.9 713.3 430.1 713.2 434.6 704.4 434.4ZM713.5 430.1 723.5 430.4 723.4 433.3 713.4 433ZM713.8 419.6 723.7 419.8 723.6 424.6 713.7 424.3ZM725.3 420.5 733.6 420.8 733.4 425 725.1 424.7ZM736.4 430.8 745.1 431.1 745 434.2 736.2 433.9ZM738 420.8 744.3 421 744.1 425.3 737.8 425.1ZM747.5 431.3 755 432.4 754.3 435.9 746.9 434.9ZM756.9 432.7 765.6 433.9 764.9 437.7 756.3 436.5ZM777 435.5 785.5 436.6 784.8 440.1 776.4 438.9ZM789.2 428 796.2 429 795.6 432.3 788.7 431.3ZM796.8 438.2 805.7 439.5 805 443.4 796.1 442.2ZM799.8 429.1 805.8 430 805.1 433.6 799.2 432.7ZM807.4 439.6 816.8 440.1 816.5 444.8 807.1 444.3ZM808.1 429.8 817.2 430.3 816.9 434.3 807.9 433.9ZM820 440.3 826.4 440.6 826.1 445.1 819.8 444.8ZM818.2 429.9 829.4 430.5 829.1 434.9 817.9 434.3ZM830.1 440.7 838.5 441.1 838.3 444.1 829.9 443.7ZM831.6 432.1 838 432.4 837.8 435.3 831.4 435ZM841.6 441.1 848.6 441 848.7 444.5 841.7 444.6ZM841.8 432.3 847.8 432.2 847.9 435.3 841.9 435.4ZM851 440.9 859.2 440.7 859.2 443.6 851.1 443.8ZM861.6 440.7 868.5 440.5 868.6 443.8 861.7 444ZM860.7 431.9 868.9 431.7 869 434.8 860.8 435ZM880.6 440.2 889.5 440 889.6 443 880.7 443.2ZM880.8 431.2 888.9 431 889 434.3 880.9 434.5ZM891.7 429.5 897.9 429.4 898 434.1 891.9 434.2ZM901.6 439.8 908.5 439.6 908.6 443.5 901.7 443.7ZM900.2 429.3 909.4 429 909.5 433.8 900.3 434ZM622.8 438.6 630.4 438.6 630.4 442.1 622.8 442.1ZM631 447.9 641.7 447.9 641.7 451.7 631 451.7ZM632.3 438.9 640.3 438.9 640.3 442.1 632.3 442.1ZM661.9 438.3 669.3 438.3 669.3 442.1 661.9 442.1ZM672.3 447.9 678.5 447.9 678.5 450.7 672.3 450.7ZM671.6 437.9 679.1 437.9 679.1 442.1 671.6 442.1ZM679.3 437.3 690.9 437.3 690.9 442.1 679.3 442.1ZM688 438.9 695.3 438.9 695.3 442.1 688 442.1ZM621 434.4 622.2 441.5 617.2 442.2 616 435ZM654.9 442.9 656.8 452.7 651.4 453.5 649.5 443.8ZM677.8 444.9 678.7 454.8 673 455.3 672 445.4ZM688.4 443.7 689.4 454.2 684.7 454.6 683.7 444.1ZM651 370.4 658.2 378.4 655 380.7 647.8 372.7ZM668.5 372.6 674.1 378.9 669.8 382 664.2 375.8ZM667.3 388.5 672 393.7 669.1 395.7 664.4 390.5ZM674.8 380 682.4 388.5 678.3 391.5 670.6 383ZM673.5 395.4 680.8 403.5 676.4 406.7 669 398.6ZM682.9 390 688.3 396 684.7 398.6 679.3 392.6ZM685.7 406.7 690.9 409.9 687.8 414 682.6 410.8ZM690.9 397 698.7 401.8 695.6 405.8 687.8 401ZM695.5 412.7 705.9 417.1 703.7 421.2 693.4 416.8ZM701.4 405 708.3 407.9 706.7 411 699.8 408.1ZM706.9 417.4 715.6 421.1 714 424.2 705.2 420.5ZM712.9 408.4 719.1 411 716.9 415.3 710.6 412.7ZM717.7 422 725.8 425.4 723.9 429.1 715.8 425.7ZM727.6 426.2 738.2 430.7 736.3 434.2 725.7 429.7ZM732.6 418.8 741 422.4 739.6 425 731.2 421.4ZM671.5 381.7 678.1 379.1 679.4 381.7 672.7 384.3ZM667.7 373.2 674.3 370.7 675.9 374.2 669.4 376.7ZM681.3 377.9 690 374.6 691.5 377.8 682.8 381.1ZM677.2 368.9 685.9 365.5 687.9 369.6 679.1 372.9ZM690.7 374.3 700 373.9 700.2 377.2 690.8 377.6ZM689.6 365.2 700.2 364.8 700.4 368.6 689.8 369ZM700.5 374 711 373.5 711.3 378.2 700.7 378.6ZM700.5 364.8 710.2 364.4 710.3 368.2 700.7 368.6ZM711.1 373.5 721.3 373.1 721.4 376.8 711.3 377.2ZM711.3 363.4 720.1 363.1 720.4 367.8 711.5 368.1ZM721 373.1 732.2 372.7 732.5 377.4 721.2 377.8ZM721.5 363 730.8 362.6 731 367.3 721.7 367.7ZM726.1 365.5 730.1 360.2 733.8 362.4 729.8 367.8ZM740.2 364.3 746.5 360.2 748.5 362.6 742.3 366.7ZM732.4 356.9 741.4 351 744.5 354.8 735.6 360.7ZM747.8 359.2 757.5 355.9 759.2 359.8 749.4 363.1ZM743.5 349.8 754.2 346.1 756.1 350.6 745.4 354.3ZM730.4 373.7 736.1 383.9 732.1 385.7 726.5 375.4ZM740.5 368.8 746.2 379.3 741.4 381.4 735.6 371ZM737.9 387.4 741.7 395 737.5 396.7 733.6 389.1ZM747.4 384.1 750.6 390.5 746.8 392 743.6 385.6ZM743.4 398.5 746.2 403.9 741.8 405.7 739.1 400.2ZM752.7 394.5 755.4 400 751.5 401.5 748.8 396.1ZM746.7 407.7 745.7 416.7 742 416.4 743 407.4ZM745.9 390.8 757.7 390.4 757.8 393.4 746 393.8ZM748.4 381.4 754.6 381.3 754.7 385.6 748.5 385.8ZM758.4 390.4 765.2 390.3 765.3 393.9 758.5 394.1ZM768 380.6 774.9 380.4 775.1 385.1 768.2 385.2ZM776.7 389.9 786.9 389.7 787 392.6 776.8 392.9ZM776.4 381.4 786.6 381.1 786.7 384.8 776.6 385.1ZM786 389.7 797.6 389.4 797.7 393.5 786.1 393.8ZM796.2 389.4 807.3 389.1 807.4 392 796.3 392.3ZM807.9 389.2 816 389.4 815.8 393.3 807.8 393.1ZM819.2 389.5 826 389.7 825.8 393.6 819.1 393.4ZM819.6 381.5 826.2 381.7 826.1 384.8 819.4 384.6ZM829.7 389.8 836.9 390.1 836.7 393.5 829.5 393.3ZM828.3 381.5 838.8 381.8 838.7 385.2 828.2 384.9ZM840.4 390.2 847.5 390.4 847.3 393.9 840.3 393.7ZM840.4 382.5 847.9 382.7 847.8 385.5 840.3 385.3ZM849.9 390.4 859.2 390.7 859.1 393.9 849.8 393.6ZM849.1 382.5 860.7 382.9 860.6 385.9 849 385.5ZM859.5 381.3 868.4 380.2 869.1 384.6 860.2 385.8ZM870.9 389.4 879.8 388.2 880.5 392.3 871.6 393.5ZM879.9 388.2 890.8 386.7 891.5 390.9 880.6 392.3ZM879.9 379.7 888.2 378.6 888.8 382 880.5 383.1ZM892 386.5 898.7 385.6 899.2 388.6 892.5 389.4ZM890.4 378.7 897.9 377.7 898.4 380.8 890.9 381.8ZM899.9 385.5 910.8 384.1 911.6 388.6 900.6 390ZM900.3 377.2 907.9 376.2 908.5 379.4 900.8 380.4ZM668.8 389.9 677.6 390 677.5 393.1 668.8 393.1ZM669.5 380.3 677.1 380.4 677 385.1 669.4 385ZM679.4 380.4 686.8 380.5 686.8 385.2 679.3 385.1ZM688.7 390.1 696.8 390.2 696.8 393 688.7 392.9ZM688.5 381.4 697.3 381.5 697.3 385.3 688.4 385.2ZM698.1 390.2 707.1 390.3 707.1 393.1 698 393ZM699.4 381.8 705.9 381.8 705.9 385.4 699.4 385.4ZM709.3 390.4 715.4 390.4 715.4 393.8 709.3 393.8ZM707.7 381.6 717.2 381.7 717.2 385.5 707.7 385.4ZM717.2 390.5 727.1 390.6 727.1 394.8 717.1 394.7ZM728 390.6 736 390.7 735.9 395.4 727.9 395.4ZM726.9 381.5 737.3 381.7 737.2 385.7 726.9 385.6ZM736.3 390.7 747.3 390.8 747.2 395.4 736.2 395.3ZM736.7 381.3 747.1 381.4 747 385.8 736.6 385.7ZM750.3 402.4 759.4 401.9 759.7 405.7 750.6 406.2ZM768.1 401.4 779.5 400.8 779.8 404.9 768.4 405.6ZM769.6 393.6 776.9 393.1 777.1 396 769.8 396.4ZM779.2 400.7 787.3 400.3 787.5 403.3 779.4 403.7ZM787.8 400.3 797.6 399.7 797.9 403.7 788.1 404.3ZM787.7 392.6 796.6 392 796.8 394.8 787.9 395.4ZM796.9 399.7 807.4 399.1 807.6 402.9 797.2 403.5ZM796.6 391.9 806.6 391.3 806.8 394.3 796.8 394.8ZM808.6 399 816.1 398.7 816.3 401.6 808.8 402ZM806.7 391 817.1 390.5 817.3 393.7 806.9 394.2ZM817.6 398.6 829.4 398 829.7 401.8 817.8 402.4ZM818.5 389.4 827.4 389 827.6 393.2 818.8 393.6ZM829.7 398 839.4 397.5 839.7 401.6 830 402.1ZM830.7 389.7 837.5 389.4 837.7 392.7 830.9 393ZM858.5 391.2 861.6 395.4 858.9 397 855.8 392.8ZM866 387.1 868.5 390.6 866.2 391.9 863.7 388.5ZM863.1 397.5 867.1 403 864.2 404.6 860.2 399.1ZM870.7 393.2 874.3 398.1 871.7 399.6 868.2 394.7ZM868.8 405.3 871.4 408.9 868.3 410.7 865.6 407.1ZM875.8 399 880.4 405.4 877.2 407.2 872.6 400.8ZM873.4 411.7 876.8 416.4 873.8 418.2 870.3 413.4ZM878.6 418.9 881.6 423 879.3 424.3 876.3 420.2ZM883.2 425.3 886.9 430.4 884.7 431.7 881 426.6ZM889.8 420.4 894.4 426.7 892.2 428 887.6 421.6ZM895.6 427 900 433.1 897.1 434.8 892.7 428.6ZM752.9 460.6 746.1 469.7 742.3 467.5 749.2 458.4ZM759.5 468 755.9 472.8 752.1 470.5 755.7 465.7ZM744.5 471 736.8 471.6 736.5 468.5 744.3 467.9ZM745.4 480.4 737.5 481 737.1 476.5 745 475.9ZM734.2 471.7 723.7 472.5 723.3 468 733.8 467.3ZM735.5 480.8 724 481.7 723.6 477.5 735.1 476.6ZM778.3 463 781.6 470.5 777.5 472 774.2 464.4ZM779.3 470.6 787.4 470.6 787.4 474.2 779.3 474.2ZM793.5 479.1 799.8 479.1 799.8 482.1 793.5 482.1ZM801.9 478.8 811.6 485.3 809.3 488 799.7 481.6ZM808.2 472.8 815.8 477.9 813.6 480.5 806 475.5ZM811.9 485.5 821.7 492 818.5 495.8 808.7 489.3ZM819.3 488.9 808.6 493.2 806.5 488.9 817.1 484.6ZM822.2 496.4 812.6 500.2 811.2 497.5 820.8 493.7ZM724.2 482.6 732.8 483.9 732 488.2 723.4 486.9ZM726 475 733.6 476.1 733.1 479 725.5 477.9ZM736.7 476 745.4 477.3 744.8 480.7 736 479.4ZM745.6 485.9 755.9 487.4 755 492.1 744.7 490.6ZM747.3 477.7 757.1 479.1 756.5 482.5 746.6 481ZM753.5 486.2 751.2 494.2 747.4 493.3 749.8 485.3ZM764.2 489.3 762.2 496.3 756.6 495 758.7 488.1ZM751.6 494.2 744.2 494.2 744.2 489.6 751.6 489.6ZM740.5 494.3 733.7 494.3 733.7 491.1 740.5 491.1ZM741.1 502.1 733.1 502.1 733.1 499.1 741.1 499.1ZM827.6 446.1 832.9 440.8 836.4 443.6 831.1 448.9ZM835.9 437.9 842.5 432.6 845.3 435.4 838.7 440.7ZM829.8 431.3 836.3 426.1 839 428.9 832.5 434ZM844.6 431 850.5 426.2 854.2 429.9 848.3 434.7ZM837.4 424.4 844.4 418.7 847.6 421.9 840.6 427.6ZM786.2 409.4 792.3 404.8 794.7 407.5 788.6 412ZM801.2 409 809.7 407.6 810.7 412.2 802.2 413.7ZM810.6 398.1 816.7 397 817.6 401.2 811.5 402.2ZM713.3 370.5 720.9 376.2 718.8 378.4 711.2 372.7ZM716.5 382.6 727.9 380.6 728.8 385 717.4 386.9ZM721.4 381.7 717.6 376.2 720.9 374.4 724.6 379.9ZM656.7 423.6 663.8 416.5 668 419.8 660.8 426.9ZM649 417 656 410 659.9 413.1 652.9 420ZM665.7 414.8 673.7 410.2 675.5 412.7 667.5 417.3ZM660.8 406.1 667.2 402.4 670.1 406.4 663.7 410.1ZM676.3 408.7 683.1 404.7 685 407.4 678.2 411.3ZM670 401.3 678.5 396.4 681.2 400 672.7 404.9ZM873.1 463.8 876.6 461.3 878.5 463.4 875.1 466ZM867.9 458.9 872.4 455.6 874.1 457.4 869.6 460.7ZM881.2 460.8 885.2 461.1 885 463.4 881 463.2ZM879.8 453.5 887.7 454 887.4 456.8 879.6 456.3ZM840.5 385.1 845.3 384.2 845.8 386.5 841 387.4ZM848.2 384 853.3 383.1 853.8 385.1 848.6 386ZM856.6 389.5 863.2 388.3 863.8 390.8 857.2 392ZM855 381.7 861.6 380.5 862.3 383.6 855.7 384.7ZM865.7 387.9 869.8 387.2 870.3 389.5 866.2 390.3ZM863 381.2 869.6 380 870.1 382.2 863.4 383.4ZM871.1 379.7 877 378.7 877.5 380.9 871.6 381.9ZM878.2 378.4 885.4 377.1 885.9 379.4 878.7 380.7ZM887.4 384.1 894.4 383.4 894.6 385.8 887.6 386.4ZM896.3 383.3 901.1 382.9 901.3 385.1 896.6 385.5ZM894.6 375.4 901.2 374.8 901.5 378 894.9 378.5ZM903.8 382.6 909.3 382.1 909.6 384.4 904 384.9ZM912.3 381.9 916.5 381.5 916.7 383.6 912.5 383.9ZM909.8 374.2 917.4 373.5 917.7 376.5 910.1 377.2ZM918.2 381.4 926.2 380.7 926.5 383.8 918.6 384.5ZM919 373.3 923.8 372.9 924.1 376 919.4 376.4ZM928 380.5 932.1 380.1 932.4 382.9 928.3 383.3ZM926.6 373.4 932.1 372.9 932.3 375.3 926.8 375.8ZM935.9 379.8 939.9 379.5 940.2 381.8 936.2 382.1ZM933.3 373 941.1 372.3 941.3 374.5 933.5 375.2ZM942.2 371.4 947.6 370.9 948 373.9 942.6 374.4ZM950.7 371.1 954.9 370.7 955.2 373.3 951 373.6ZM957.6 377.9 965.3 377.2 965.5 379.4 957.9 380.1ZM956.9 371.1 964.5 370.4 964.7 372.4 957.2 373.1ZM965.7 377.2 972.9 376.6 973.2 379.5 966 380.1ZM966.5 370.2 970.6 369.8 970.9 371.9 966.7 372.3ZM972.8 368.6 979.8 368 980.1 371.1 973.2 371.7ZM982.4 375.7 987.5 375.3 987.8 378.4 982.8 378.9ZM981.6 368.1 986.7 367.6 987 370.5 982 370.9ZM990.3 375 995.3 374.6 995.6 376.6 990.5 377ZM996.1 367.6 1003.8 367 1004 369 996.3 369.7ZM1005.5 373.7 1011.4 373.2 1011.8 376.3 1005.9 376.9ZM1013.8 373 1018.8 372.5 1019.1 375 1014.1 375.5ZM1011.8 366.1 1019.4 365.4 1019.7 367.6 1012 368.3ZM1026.1 368 1030.6 373.7 1027.7 375.5 1023.2 369.8ZM1026.2 382 1029.5 386.1 1027.1 387.6 1023.8 383.4ZM1032 376.9 1036.4 382.5 1034.3 383.8 1029.9 378.2ZM1032.6 384.3 1025.6 384.9 1025.3 382.6 1032.3 382.1ZM1031.9 391.9 1027.7 392.3 1027.5 389.6 1031.6 389.3ZM1025 384.9 1017.1 385.6 1016.8 382.5 1024.7 381.9ZM1015.2 385.8 1010.9 386.1 1010.7 384 1015 383.7ZM1017.2 393 1010.4 393.6 1010.1 391 1016.9 390.5ZM1007.9 386.4 1002.2 386.8 1002 384.1 1007.6 383.6ZM1009.3 394.2 1002.4 394.7 1002 391.7 1009 391.1ZM999.3 387.1 994.8 387.4 994.5 384.4 999 384.1ZM1000.9 394.3 994.7 394.8 994.4 392.3 1000.6 391.8ZM991.5 387.7 986.7 388.1 986.4 385.8 991.2 385.4ZM992.1 395.6 987.5 396 987.2 392.9 991.8 392.6ZM983.7 388.4 978.4 388.8 978.2 386.3 983.5 385.9ZM975.5 389 970.6 389.4 970.3 386.5 975.2 386.1ZM977.7 395.8 969.8 396.5 969.6 394.4 977.5 393.7ZM968.7 389.6 961.4 390.2 961.1 387.2 968.4 386.6ZM959.7 390.4 954.5 390.8 954.3 388.7 959.4 388.2ZM961.7 397.7 953.9 398.4 953.6 395.7 961.5 395.1ZM949.4 397 943.4 392.5 945.3 390.5 951.3 395ZM947.8 386 942.1 381.7 944.5 379.2 950.2 383.5ZM942.2 391.8 937.1 388 939.1 385.8 944.2 389.7ZM858.6 392.5 861.7 397 859.5 398.2 856.3 393.8ZM865.9 388.3 868.8 392.4 866.1 394 863.2 389.9ZM863.5 399.4 866.3 403.4 864.2 404.5 861.4 400.6ZM869.7 394.6 873.6 400.1 871.3 401.3 867.4 395.9ZM868.3 406.1 871.1 410 868 411.8 865.2 407.8ZM875.1 402.3 877.5 405.8 875.4 407 872.9 403.6ZM872.6 412.2 876.2 417.3 873.4 418.9 869.8 413.8ZM880.4 408.4 883.1 412.2 880.2 413.8 877.5 410ZM877.7 419.3 880.7 423.5 878.2 424.9 875.3 420.7ZM882.1 425.5 885.7 430.6 883.3 432.1 879.6 427ZM889.5 420.4 893.8 426.5 890.6 428.3 886.2 422.2ZM887.3 432.8 890.1 436.7 887.1 438.4 884.4 434.5ZM895.1 428.5 897.5 431.8 894.3 433.6 892 430.3ZM937.8 384.7 941.8 390.8 939.2 392.2 935.2 386.1ZM942.7 392.1 945.2 395.9 943.1 397.1 940.6 393.2ZM949.9 386.9 953.6 392.3 950.4 394.1 946.7 388.6ZM946.3 397.6 949.9 403 947.4 404.3 943.8 398.9ZM953.9 394.4 956.4 398.2 954 399.5 951.4 395.7ZM950.1 403.3 954.4 409.7 952.2 410.9 947.9 404.5ZM958.1 399.1 962.1 405.1 958.9 406.8 954.9 400.8ZM955.2 410.9 957.7 414.7 954.4 416.4 951.9 412.6ZM959.4 417.3 961.8 420.8 958.5 422.5 956.2 419ZM965.9 411.6 970.1 418 967.3 419.5 963.1 413.2ZM969.7 418.4 973.7 424.3 971.3 425.6 967.4 419.6ZM966.9 428.4 971 434.6 967.9 436.3 963.8 430.1ZM974.7 425.4 977.4 429.5 974.9 430.9 972.2 426.8ZM909 407.9 912.5 412.2 910.5 413.6 907 409.3ZM915.8 402.4 920.2 407.7 917.2 409.7 912.8 404.3ZM914.6 414.7 918.6 419.6 915.8 421.4 911.8 416.6ZM920.6 409.9 925.3 415.6 923.2 416.9 918.5 411.2ZM920.5 421.8 924.4 426.6 921.8 428.4 917.8 423.6ZM927.5 417.2 931.1 421.6 928.5 423.3 924.9 419ZM926.2 428.7 930.4 433.9 927.9 435.5 923.7 430.3ZM933.9 424.9 936.5 428.1 933.8 429.8 931.2 426.6ZM922.2 400.8 929.1 400 929.4 402.6 922.5 403.4ZM961.2 405.6 963.4 408.7 961.2 410 959 406.9ZM918.9 410.5 922.6 410.8 922.3 413.3 918.6 413ZM904.4 418.7 908.2 418.1 908.6 420.7 904.8 421.3ZM956.3 392.9 960.1 392.7 960.3 395.1 956.5 395.3ZM976.2 409.7 984 410 983.8 412.7 976 412.4ZM950.5 397.5 954.6 403.5 952.1 404.9 948 398.9ZM966.8 403.1 973.8 401.4 974.4 403.3 967.4 405ZM898.4 410.8 903.3 410.7 903.4 412.6 898.5 412.7ZM941.7 400.6 944.5 404.7 942.3 406 939.5 401.9ZM927.8 415.3 932.9 415 933 417.7 927.9 418ZM927.4 423.9 934.2 423.4 934.4 425.5 927.6 426ZM932.1 405.1 939 405.3 938.9 407.5 932 407.3ZM977.2 400.9 979.9 406.1 977.6 407.1 974.9 401.9ZM951.6 400.4 956.3 399.6 956.8 402 952.1 402.8ZM968.1 396.9 972.6 396.4 972.9 398.9 968.4 399.4ZM931.3 403.5 937.1 402.6 937.5 404.9 931.7 405.8ZM933.5 399.8 939.8 399.1 940.1 401.4 933.8 402.1ZM957.5 418.1 963 418.5 962.9 420.3 957.4 419.9ZM957.8 405.4 960.1 409.5 958.2 410.4 955.9 406.3ZM932.8 413.9 938.6 414.4 938.4 416.7 932.6 416.2ZM874.3 411.5 879.6 411.9 879.3 413.9 874 413.5ZM880.1 415.5 886.3 414 886.9 415.9 880.7 417.4ZM935.7 410.5 942.1 410.5 942.1 413.1 935.7 413.1ZM874.8 415.4 882.7 414.4 883.2 417 875.3 418ZM869 423.9 875.7 422.3 876.4 424.5 869.7 426.1ZM981.2 399.4 984.1 405.1 982 406 979.1 400.3ZM901.2 410.5 904.2 415.1 901.4 416.5 898.4 411.9ZM972.1 425 976 424.8 976.1 427.2 972.2 427.4ZM897.2 416.6 901.5 423 898.8 424.4 894.5 418ZM911.9 414.3 917.1 413.4 917.7 416.1 912.5 417ZM928.6 391.8 932.2 391.8 932.2 394.6 928.6 394.6ZM902.7 400.1 909 399.6 909.1 401.5 902.8 402ZM871.2 395.7 878.9 396 878.8 398.1 871.1 397.8ZM872.3 397 878.7 397.4 878.5 399.2 872.1 398.8ZM876.8 413.3 881.9 413.7 881.6 416.3 876.5 415.9ZM952.4 418.5 957.6 418.1 957.8 420.1 952.6 420.5ZM875.3 420.7 878.9 426.9 876.3 428.1 872.7 421.9ZM886.1 419 889.4 424.5 887.1 425.6 883.8 420.1ZM874.7 399.8 876.8 404.1 873.9 405.2 871.8 400.9ZM953.9 414.1 959.5 414.4 959.3 416.5 953.7 416.2ZM873.4 411 877.4 411.1 877.4 413.4 873.4 413.3ZM893.8 423.6 897.7 423.5 897.8 426.2 893.9 426.3ZM928.9 400.3 932.3 406.2 930.3 407.1 926.9 401.2ZM926.5 420 928.3 424 925.7 425 923.9 421ZM755.8 486.8 761.5 487.8 760.8 491.2 755.1 490.2ZM721.3 489.4 726.6 490.5 725.7 493.8 720.4 492.7ZM741.5 478.8 748.4 479.9 747.7 483.4 740.8 482.3ZM766.5 477.8 773 478.7 772.5 481.6 766 480.7ZM786.7 471.5 793.9 472.5 793.3 475.5 786.1 474.5ZM742.1 465.1 745.8 473.6 742.1 474.9 738.4 466.4ZM747.5 497.8 754.9 495.3 755.9 497.8 748.5 500.3ZM771.3 483.5 777.4 484.9 776.5 488.1 770.4 486.7ZM794.1 493.6 802 494.7 801.5 497.4 793.6 496.3ZM726.2 505.2 734.8 506.1 734.4 508.6 725.8 507.7ZM727.3 466.2 729.9 472.1 726.7 473.2 724.1 467.3ZM766 466.2 772 466.6 771.8 469.4 765.8 469ZM788.5 479.1 790.7 484.8 786.5 486.1 784.3 480.4ZM722.2 489.7 728.9 487.6 730.2 490.7 723.5 492.8ZM760.4 489.6 769.4 491.5 768.6 494.6 759.6 492.7ZM766.5 481 772.9 482.7 771.9 485.8 765.5 484.1ZM730.2 481.3 738.3 478.3 739.4 480.7 731.3 483.7ZM712.5 499.1 719.9 501 718.9 504.1 711.5 502.2ZM737.8 461.4 746.9 462.1 746.6 465.6 737.5 464.9ZM760.8 465.4 764.6 473.5 760.6 475 756.8 466.9ZM763.7 482.7 766.6 490.8 763.1 491.9 760.2 483.8ZM745.8 505.2 751.5 503.2 752.8 506.2 747.1 508.2ZM794.5 491.5 797.6 498.9 793.9 500.1 790.8 492.7ZM749 459.8 751.3 466.5 747.8 467.4 745.5 460.7ZM720.6 474 727.4 476 726.2 479.4 719.4 477.4ZM794.3 481.4 799.9 482.8 798.9 486.2 793.3 484.8ZM764.9 482.2 772.6 483.3 772.1 486 764.4 484.9ZM769.4 495 772 503.7 768.4 504.6 765.8 495.9ZM766.5 496 773.8 496.9 773.3 500.2 766 499.3ZM743.2 472.3 750.2 474 749.4 476.5 742.4 474.8ZM778.2 479.3 785.9 476.3 787.2 478.9 779.5 481.9ZM764.8 492.6 770.9 489.7 772.8 492.8 766.7 495.7ZM785.3 499.2 788.1 507.6 785.1 508.4 782.3 500ZM715.6 458.4 718.8 467.6 715 468.6 711.8 459.4ZM813.6 488.4 819.3 489.1 818.8 492 813.1 491.3ZM808.1 479.5 815.4 481.1 814.5 484.3 807.2 482.7ZM821.2 486.5 829.4 488 828.8 490.5 820.6 489ZM816.2 480.3 823.5 475.9 825.4 478.5 818.1 482.9ZM820.1 478.1 827.1 479.6 826.3 482.5 819.3 481ZM803.8 469.8 811 471.6 810 474.8 802.8 473ZM808.7 483.1 815.3 479.2 817.5 482.1 810.9 486ZM825.3 484 831 484.4 830.7 487.2 825 486.8ZM624.1 433.8 637 435 636.5 439.4 623.6 438.2ZM677.7 440.4 684 440.8 683.7 445 677.4 444.6ZM719.5 420.3 728.9 420.7 728.7 424.5 719.3 424.1ZM661.5 415.8 667.8 416.8 667.1 420.2 660.8 419.2ZM667.8 425.2 675.6 426.2 675 430 667.2 429ZM711.5 421.1 719 417.8 720.7 420.9 713.2 424.2ZM635.1 441.7 639.4 449.4 635.1 451.3 630.8 443.6ZM631 416.4 633.9 421.7 630.4 423.2 627.5 417.9ZM694.2 440.4 704.4 433.5 707.2 436.8 697 443.7ZM696.7 432.5 708.7 434 708.3 436.9 696.3 435.4ZM674.5 435.8 681.2 436.3 680.9 439.4 674.2 438.9ZM634 441.3 640 442.2 639.2 446.7 633.2 445.8ZM685.5 416.4 693.6 416.3 693.7 420 685.6 420.1ZM683.7 432.6 693.8 425.4 696.5 428.4 686.4 435.6ZM638.2 434 644 442.2 639.2 444.8 633.4 436.6ZM697 428.5 709.9 429.6 709.4 433.7 696.5 432.6ZM667.4 410 677.9 411.2 677.4 414.4 666.9 413.2ZM668.8 406.2 679.5 406.5 679.4 411.2 668.7 410.9ZM639.4 422 643 429 638.6 430.8 635 423.8ZM641.3 407.4 652.6 409 651.9 413.2 640.6 411.6ZM629.7 429.6 640.5 431.5 639.7 435.2 628.9 433.3ZM626.8 409.6 632.1 405.9 635.4 409.6 630.1 413.3ZM661.6 432.1 665 438.4 660 440.5 656.6 434.2ZM655.9 442.8 667 442.9 666.9 446.6 655.8 446.5ZM716.2 416.7 721.5 425.8 717.2 427.9 711.9 418.8ZM710.7 423.4 718.6 423.7 718.3 428 710.4 427.7ZM627.1 442.6 637.8 444.4 636.9 448.8 626.2 447ZM704 408.8 710.1 405.2 713 409 706.9 412.6ZM722.1 420 732.8 421.6 732.1 425.6 721.4 424ZM653.1 408.4 660.2 405.1 662.1 408.4 655 411.7ZM708.4 439.4 715 434.9 717.2 437.4 710.6 441.9ZM736.9 433.6 742.1 441.9 737.5 444.2 732.3 435.9ZM629.1 427.7 640.7 428.3 640.5 431.5 628.9 430.9ZM625.4 423.9 635.2 418.9 637.8 423.1 628 428.1ZM712.8 423.7 719.4 423.9 719.2 428.3 712.6 428.1ZM690.7 436.5 696.8 447 692.7 448.9 686.6 438.4ZM645 414.1 651.7 414.5 651.4 418.9 644.7 418.5ZM685.5 421.4 695 423.1 694.3 426.2 684.8 424.5ZM677.4 439.6 686 439.7 686 443.4 677.4 443.3ZM688.9 420.1 698.6 420.3 698.5 423.1 688.8 422.9ZM720.2 428 730.3 428.8 730 432 719.9 431.2ZM728.5 434.4 740.1 436.3 739.1 441 727.5 439.1ZM659.9 444.7 668.5 445.5 668.1 448.3 659.5 447.5ZM719.3 422.6 731.8 424.6 730.9 429.2 718.4 427.2ZM693.3 441.7 704.2 442.8 703.9 445.7 693 444.6ZM698.4 439.4 703 449 699 450.6 694.4 441ZM662.6 414.8 673.5 416.7 672.8 419.8 661.9 417.9ZM629.2 426.8 635.3 427.7 634.4 432.2 628.3 431.3ZM700.2 431.3 713.1 432 713 434.9 700.1 434.2ZM625.4 410.1 630.5 420.1 626 421.9 620.9 411.9ZM636.7 416.7 640.8 423.3 637.5 424.9 633.4 418.3ZM675.5 432.7 681.2 443.8 676.1 445.9 670.4 434.8ZM640.9 410.9 652.2 405.5 653.9 408.5 642.6 413.9ZM726.9 408.9 730.9 417.2 727.5 418.5 723.5 410.2ZM697.2 421 702 427.9 697.4 430.4 692.6 423.5ZM666.1 415.5 671.6 425.2 668.1 426.7 662.6 417ZM637.6 439.9 645.5 439.8 645.6 443.5 637.7 443.6ZM685 417.8 696.6 418.3 696.4 421.6 684.8 421.1ZM722.7 410.6 735.5 411.9 735.1 414.8 722.3 413.5ZM721.5 406.8 726.1 417.1 720.7 419 716.1 408.7ZM736.4 442.1 743.1 442.1 743.2 445.5 736.5 445.5ZM702.1 421.8 713 415 714.9 417.4 704 424.2ZM635.3 406.1 647.1 406.8 646.9 410.7 635.1 410ZM625.9 422.1 633.8 422.8 633.5 425.9 625.6 425.2ZM645.7 415.5 654.8 410.8 657.3 414.7 648.2 419.4ZM709.3 412.7 716.2 413.4 715.7 417.5 708.8 416.8ZM643 408.6 654 409.6 653.6 413.2 642.6 412.2ZM659.7 416.8 670.2 416.7 670.3 421.4 659.8 421.5ZM723.9 424.3 735.9 425.5 735.5 428.9 723.5 427.7ZM733.1 407.4 744 408 743.7 412 732.8 411.4ZM733.5 405.2 738.2 409.7 735.1 412.2 730.4 407.7ZM723.4 380.8 734.4 381.3 734.2 384.8 723.2 384.3ZM662.8 395.5 670.4 400.6 668.4 402.9 660.8 397.8ZM735.8 375.4 741.3 380.1 738.8 382.4 733.3 377.7ZM732.6 365.5 743 372.5 740 376.1 729.6 369.1ZM701.9 390.7 711.6 391.3 711.3 395.5 701.6 394.9ZM662.6 373.4 669.1 378 666.4 381 659.9 376.4ZM664 401.2 672 406.9 669.6 409.6 661.6 403.9ZM700.1 398.9 707 396.7 708.7 400.9 701.8 403.1ZM703.7 391.3 709.9 392.2 709.1 396.9 702.9 396ZM683.5 375.4 689.5 381.2 686.3 383.8 680.3 378ZM725.2 367.3 732.9 373.1 729.4 376.9 721.7 371.1ZM687.7 393.2 696.2 393.6 695.9 397.4 687.4 397ZM669.1 396.1 676.4 394 677.7 397.5 670.4 399.6ZM728.8 393.1 740.5 393 740.6 397.5 728.9 397.6ZM705 378.3 715.7 379.5 715.2 382.9 704.5 381.7ZM675.5 386.3 682.9 391.5 679.5 395.3 672.1 390.1ZM684.7 372.9 689.9 376.6 686.5 380.5 681.3 376.8ZM704.4 402.7 710.8 409.2 707.4 411.9 701 405.4ZM702.7 375.6 710.7 383.3 706.9 386.4 698.9 378.7ZM704.7 388.2 712.8 394.9 710.3 397.4 702.2 390.7ZM700 390.3 707.3 396 704.6 398.7 697.3 393ZM668.5 386.6 678.9 394.1 676.3 397 665.9 389.5ZM734 379.2 740.6 384.2 738 386.8 731.4 381.8ZM717 375.1 723.2 373.1 725 377.5 718.8 379.5ZM698.7 398.9 704.6 404.9 700.7 407.9 694.8 401.9ZM711.5 402.9 718.1 408.9 714.7 411.9 708.1 405.9ZM701.7 404.5 712.5 400 714.3 403.5 703.5 408ZM703.7 393.6 714.6 393.4 714.7 397 703.8 397.2ZM718.7 388.6 726 394.5 722.3 398.2 715 392.3ZM716.4 404.8 726.2 401.6 727.6 405 717.8 408.2ZM675.9 383.6 684 380.9 685.5 384.6 677.4 387.3ZM653.3 394.5 663.7 402.2 661.1 405.1 650.7 397.4ZM677.4 373.1 687.3 374.6 686.6 378.5 676.7 377ZM681.3 404.4 689.5 410.5 687.1 413.2 678.9 407.1ZM688.7 406.2 694.3 403.9 695.7 406.6 690.1 408.9ZM695.7 382.7 705.4 378.9 707.1 382.3 697.4 386.1ZM682.6 391.1 691 391.9 690.4 396.5 682 395.7ZM663.5 380.5 669.8 386.7 666.3 389.5 660 383.3ZM735.3 384.9 742.1 391.1 738.7 394.1 731.9 387.9ZM715 371.3 723.5 372.6 722.8 376.1 714.3 374.8ZM692.8 374.4 704.4 370.5 706 374.4 694.4 378.3ZM695.7 402 702.6 399 704.9 403.2 698 406.2ZM705.4 391.2 713.8 392.3 713 397 704.6 395.9ZM654.9 365.1 663.4 372 660.3 375.1 651.8 368.2ZM664.1 367.3 668.5 371.6 665.7 373.9 661.3 369.6ZM727.8 389 734.8 389 734.8 392.2 727.8 392.2ZM696.4 389.8 702.4 388.1 703.4 391 697.4 392.7ZM706.2 399.3 711.4 403 709.4 405.3 704.2 401.6ZM673.5 378.8 679.8 379.1 679.5 383.2 673.2 382.9ZM691.2 382.9 697.6 383.4 697.2 387.9 690.8 387.4ZM707.6 376.2 712.6 380.1 709 383.8 704 379.9ZM727 401.7 734.9 399.7 736.2 403.5 728.3 405.5ZM656.4 397.3 666.3 393.2 668.2 396.9 658.3 401ZM726.1 384.7 735.5 391.5 733.1 394.1 723.7 387.3ZM774.4 374.4 781.3 384.4 777.6 386.4 770.7 376.4ZM784.2 400.5 793 400.4 793 403.3 784.2 403.4ZM819.2 406.7 823.9 414 820 416.1 815.3 408.8ZM743.6 416.4 751.9 415.7 752.2 418.8 743.9 419.5ZM763.4 425.7 770.3 425.2 770.6 428.9 763.7 429.4ZM769.4 418.7 778 418.4 778.2 423.1 769.6 423.4ZM783.3 385.3 789.1 395.9 784.5 397.9 778.7 387.3ZM776 434.7 785.7 433.9 786 437.5 776.3 438.3ZM802.3 417.1 808.7 415.3 810.3 419.7 803.9 421.5ZM800.8 385.9 806.9 386.3 806.6 390.5 800.5 390.1ZM762.8 384.6 768.3 395.5 765 396.8 759.5 385.9ZM805.3 385.5 811.6 394.6 808.5 396.3 802.2 387.2ZM799.4 393.3 808.2 394.1 807.6 398.7 798.8 397.9ZM753.1 400.4 764.3 397.2 765.7 401.2 754.5 404.4ZM795.9 404.8 808.8 404 809.1 407.6 796.2 408.4ZM748.8 429.7 759.9 429.5 760 433.7 748.9 433.9ZM789.1 402.8 800.4 402.9 800.3 406 789 405.9ZM791.2 432.4 801.1 431.1 801.6 434.4 791.7 435.7ZM760.2 403.3 771 402.4 771.4 405.9 760.6 406.8ZM801.6 414.2 813.8 415.4 813.2 420 801 418.8ZM801.2 377.4 804.9 384.8 800 386.8 796.3 379.4ZM747.5 417.5 756.3 417.1 756.5 421.3 747.7 421.7ZM747.4 432.1 756.2 430.5 757.2 435.1 748.4 436.7ZM794.9 389.5 805.6 389.4 805.7 393.9 795 394ZM754.6 432 766.4 432.1 766.4 436 754.6 435.9ZM819.2 414.8 828.9 414.1 829.2 417.4 819.5 418.1ZM768 384.4 778.3 383 778.8 386 768.5 387.4ZM764.2 388.6 768.7 397.1 764.6 398.8 760.1 390.3ZM750.9 418.4 761 418.5 760.9 421.8 750.8 421.7ZM801.5 388.2 812.1 387.1 812.7 391 802.1 392.1ZM772.5 391.6 783.1 389.1 783.9 391.8 773.3 394.3ZM746 394.1 753.4 393.5 753.8 397.7 746.4 398.3ZM753 404 763 403 763.4 406.4 753.4 407.4ZM783.8 430.3 787.7 438.9 782.8 440.7 778.9 432.1ZM786.4 384.1 795.8 384.6 795.6 388.3 786.2 387.8ZM771.6 396.7 774.7 402.5 771 404.1 767.9 398.3ZM748.2 420.7 754.4 420.5 754.6 424.1 748.4 424.3ZM754 414.4 765.9 413.4 766.4 418 754.5 419ZM802.8 392.3 808.3 401 804.6 402.9 799.1 394.2ZM770.6 409.4 779.1 408.6 779.6 413 771.1 413.8ZM747.3 423.7 759.7 422.6 760.3 427.3 747.9 428.4ZM821.6 403.1 826.2 411.4 822.8 412.9 818.2 404.6ZM792 387.5 799.4 385.5 800.4 388.5 793 390.5ZM744.4 403.1 751.7 402.4 752.2 406.7 744.9 407.4ZM790.2 425.5 799.8 425.8 799.6 428.9 790 428.6ZM783 401.7 791.4 402.4 791 406.1 782.6 405.4ZM758.3 391.9 762.8 399.8 758.5 401.7 754 393.8ZM778.7 408.5 788.3 409.5 787.9 413.1 778.3 412.1ZM822.3 409.3 827.9 419.5 824.7 420.9 819.1 410.7ZM762.9 410.8 775.5 410.3 775.7 414 763.1 414.5ZM769.7 429 775.8 428.2 776.3 431.4 770.2 432.2ZM757.1 407.3 762 415.9 756.9 418.3 752 409.7ZM787.7 400.9 794.5 401 794.5 404.1 787.7 404ZM754.1 424.8 757.7 431.7 754.3 433 750.7 426.1ZM758.8 403.5 768.6 404.3 768.2 408.5 758.4 407.7ZM647.2 355.9 654 355 654.6 358.7 647.8 359.6ZM649.8 331 659.8 339.3 656.4 342.6 646.4 334.3ZM647.8 344.2 657.1 352.9 654.4 355.2 645.1 346.5ZM634 353.4 639.3 357.1 637 359.8 631.7 356.1ZM649.2 357.9 656.4 363.7 654 366.1 646.8 360.3ZM650.5 350.6 662.6 349.5 663.1 353.4 651 354.5ZM631.6 354.8 639.7 352.5 641.2 356.6 633.1 358.9ZM637 335.8 644.1 342.3 640.8 345.2 633.7 338.7ZM629 350.4 635.5 348.7 636.8 352.4 630.3 354.1ZM655.8 350.1 662.2 354.5 660 357.1 653.6 352.7ZM800.7 445.2 812.2 446.9 811.5 450.6 800 448.9ZM766.5 445.8 770 453 765.3 454.8 761.8 447.6ZM780.2 440.5 793 442.8 792 447.1 779.2 444.8ZM754.3 443.4 761.2 444.4 760.5 448.2 753.6 447.2ZM758.2 436.1 763.3 446.7 758.6 448.5 753.5 437.9ZM800 454.2 808 449.6 810 452.4 802 457ZM770.3 450.9 776.9 446.2 779.1 448.7 772.5 453.4ZM765.5 441.2 769.4 449.6 764.9 451.2 761 442.8ZM580.1 337.8 585.9 339.2 585 342.3 579.1 340.9ZM582.9 329 588.4 330.3 587.2 334 581.8 332.7ZM587 339.5 594.1 341.3 593 344.7 585.9 343ZM589.7 332.1 595.8 333.6 595 336 589 334.5ZM597.1 333 603.9 334.7 602.9 338 596 336.3ZM601.8 343.2 609.2 345.1 608.1 348.8 600.6 347ZM609.8 345.3 614.8 347.2 613.5 350.1 608.4 348.2ZM613.7 337 618.3 338.7 616.7 342.1 612.1 340.4ZM618.4 339.9 626 342.7 624.8 345.2 617.3 342.4ZM621.5 349.7 629.7 352.8 628.5 355.5 620.2 352.4ZM625 342.2 632.8 345.1 631.6 347.7 623.8 344.8ZM635.2 355.7 642.1 359.1 640.1 362.2 633.3 358.8ZM646.3 350.7 653.9 354.6 651.8 357.9 644.2 354ZM591.1 291 594.9 294.8 591.5 297.5 587.7 293.7ZM588.1 302.1 592.6 306.6 589.9 308.8 585.5 304.3ZM594.5 295.2 600.6 301.3 597.7 303.7 591.6 297.6ZM592.6 306.6 598.1 312.1 595.6 314.1 590.2 308.6ZM600.5 300.2 605.7 305.5 602.3 308.2 597 303ZM598.5 312.5 602.3 316.3 598.8 319 595.1 315.2ZM605.2 306.5 609.3 310.6 606.7 312.7 602.5 308.6ZM602.2 316.2 608.5 322.5 605.4 325 599.1 318.7ZM609.9 309.9 616 316 612.7 318.7 606.6 312.6ZM608.5 322.5 612.2 326.3 608.9 329 605.1 325.2ZM614.8 315.4 620.4 321 617.4 323.4 611.8 317.8ZM613.8 327.7 617 331 614.8 332.7 611.6 329.5ZM619.1 320.6 625.2 326.6 622.6 328.6 616.6 322.6ZM618.6 332.6 622.1 336.1 619.7 338.1 616.2 334.6ZM625 327.1 628.6 330.7 626.4 332.4 622.8 328.8ZM622.5 336.5 628.3 342.3 625.3 344.6 619.6 338.8ZM630.5 332 633.7 335.2 631.2 337.2 628 334ZM628.8 342.8 632 346 629.4 348 626.2 344.8ZM635.9 335.8 640.1 340 636.7 342.7 632.5 338.5ZM633 347 637.7 351.7 634.8 354.1 630 349.4ZM602.5 309.3 610.8 308.3 611.4 312 603 313ZM602 302 609.2 301.2 609.8 304.8 602.6 305.7ZM609.1 301 617.7 300 618.3 303.8 609.6 304.8ZM619.3 307.3 625.2 306.6 625.7 310 619.8 310.7ZM618.1 300.2 624.4 299.5 625 303 618.6 303.7ZM626.9 300 631.5 299.5 631.9 302.2 627.3 302.7ZM633.8 305.6 642 304.6 642.4 307.5 634.2 308.5ZM633.9 298.4 639.9 297.7 640.4 301.1 634.4 301.8ZM640.3 297.8 649.2 296.7 649.7 300 640.8 301.1ZM649.9 303.6 657.1 302.8 657.7 306.5 650.5 307.3ZM650.2 296.5 654.8 295.9 655.3 299.3 650.7 299.9ZM657.9 302.7 664.8 301.9 665.3 305.4 658.4 306.2ZM657.3 295.8 663.4 295.1 663.9 298.3 657.8 299ZM580.8 321.8 586.5 321.4 586.7 324.7 581.1 325ZM579.1 314.3 587.2 313.8 587.5 317.7 579.4 318.2ZM587.1 321.4 594.4 321 594.6 324 587.3 324.4ZM594.8 314 599.9 313.7 600.1 317 595.1 317.3ZM600.9 320.6 608.9 320.1 609.1 322.9 601.1 323.4ZM600.5 313.1 608.3 312.7 608.6 316.5 600.8 317ZM615.6 319.7 622.5 319.3 622.7 322.3 615.9 322.7ZM615.3 312.3 621.8 311.9 622.1 315.7 615.6 316.1ZM621.9 319.4 630.5 318.9 630.7 322.7 622.1 323.2ZM622.9 312 628.4 311.7 628.6 315.3 623.2 315.6ZM629.5 318.9 637 318.4 637.1 320.8 629.7 321.3ZM636.9 312.1 642.9 311.7 643.1 314.5 637.1 314.9ZM643.1 318.1 651.7 317.6 651.9 320.6 643.3 321.1ZM642.8 312.1 651.2 311.6 651.4 314 643 314.5ZM650.7 317.6 658.3 317.2 658.5 320 650.9 320.4ZM651.1 310.9 657 310.6 657.2 313.7 651.3 314ZM657.4 317.3 665.8 316.8 666 319.9 657.6 320.4ZM613.9 329.6 622.6 329.2 622.8 332.8 614.1 333.2ZM622.5 330.3 628.4 330 628.5 332.5 622.7 332.8ZM628.8 336.1 637.2 335.7 637.3 338.5 628.9 338.9ZM628.9 328.5 636.1 328.2 636.4 332.1 629.1 332.5ZM637.7 335.7 642.5 335.4 642.7 339.1 638 339.3ZM642.9 328.7 650.8 328.3 651 331.4 643.1 331.8ZM651.8 335 656.9 334.7 657.2 338.6 652.1 338.9ZM656.9 328.5 665.5 328.1 665.6 330.7 657 331.1ZM1006.3 579 1013.3 579.4 1013.1 582.3 1006.1 581.9ZM1014.5 579.4 1021.1 579.8 1020.9 582.9 1014.3 582.5ZM1023.3 570.8 1029.6 571.1 1029.3 575 1023 574.6ZM1030.9 580.4 1036.7 580.7 1036.5 584.1 1030.7 583.8ZM1031.6 571.8 1037.2 572.1 1036.9 575.4 1031.4 575.1ZM1037.9 580.8 1045.7 581.3 1045.5 584.8 1037.7 584.4ZM1038.1 573 1046.6 573.5 1046.5 576 1037.9 575.5ZM1045.4 581.3 1054.2 581.8 1053.9 585.7 1045.1 585.2ZM1047.9 573.3 1052.9 573.6 1052.7 576.4 1047.7 576.1ZM1054.1 581.7 1061.6 582.2 1061.4 585.4 1053.8 585ZM1061.7 582.2 1070 582.7 1069.7 586.6 1061.4 586.1ZM1062 573.1 1070.9 573.6 1070.6 577.4 1061.7 576.8ZM1070.1 573.5 1075.2 572.2 1076.3 575.7 1071.2 576.9ZM1081.1 580 1087 578.5 1088.2 582.3 1082.3 583.8ZM1079 571.1 1084 569.9 1085.1 573.4 1080.1 574.7ZM1087.7 570.2 1093.8 568.7 1094.6 571.1 1088.5 572.6ZM1100.2 572 1102.2 566.2 1105.6 567.1 1103.7 573ZM1089.8 570.6 1092.6 562.1 1096.9 563.2 1094.1 571.7ZM1100.8 560.4 1095.5 556.3 1098 553.7 1103.3 557.8ZM1094 567.2 1089.5 563.7 1092.3 560.9 1096.7 564.3ZM1078.9 543.5 1073.4 539.2 1076.4 536.1 1082 540.4ZM1055.6 524.3 1050.1 519.3 1052.1 517.5 1057.7 522.5ZM1009.9 574.7 1012.4 567.9 1016.5 569.1 1014.1 575.9ZM1000.5 572.1 1003.2 564.9 1006.8 565.9 1004.2 573.1ZM1013.3 565.4 1015.6 558.9 1019.7 560.1 1017.3 566.6ZM1003.9 562.3 1006.1 556.3 1009.9 557.4 1007.7 563.4ZM1014.6 559.1 1022.4 556.2 1024 559.7 1016.2 562.5ZM1024.4 555.5 1029.3 553.7 1031 557.4 1026.1 559.2ZM1019.6 547.4 1026.7 544.8 1028.3 548.3 1021.2 550.9ZM1031.3 552.9 1039 550.1 1040.5 553.4 1032.8 556.2ZM1035.9 541.4 1043.7 538.5 1045.4 542 1037.5 544.9ZM1048.4 546.7 1055.3 544.1 1056.7 547.2 1049.8 549.8ZM1056.4 543.7 1063.9 540.9 1065.2 543.7 1057.7 546.5ZM1054.1 535.5 1059.5 533.6 1060.8 536.4 1055.4 538.3ZM1134.4 538.4 1128.4 543 1126.3 540.9 1132.4 536.2ZM1108.8 550.2 1104.2 554.8 1100.9 552.1 1105.4 547.5ZM1116.2 556.4 1111.5 561.1 1108.4 558.6 1113.1 553.9ZM1103 556 1098.5 560.5 1095.4 558.1 1100 553.5ZM1110.2 562.3 1105.9 566.6 1102.8 564.2 1107.2 559.8ZM933.8 548.3 936.9 542.9 939.2 543.9 936.1 549.3ZM956.7 562 961.1 563.6 959.9 566.2 955.5 564.6ZM949.7 556.7 956.2 558.3 955.3 561.1 948.8 559.5ZM931.1 558.2 933.3 554.5 935.7 555.6 933.5 559.3ZM960.5 546.4 963.3 541.9 965.9 543.2 963.1 547.7ZM957.6 544.4 960.9 539.3 964 541 960.7 546.1ZM961.3 560.3 966.6 562.8 965.5 564.7 960.2 562.2ZM940.6 560.2 942.9 555.4 945.4 556.4 943.1 561.2ZM947.6 569.7 955.3 572.8 954 575.3 946.3 572.2ZM935.5 540.5 939.2 533.7 941.9 534.9 938.2 541.7ZM960.9 562.5 964.8 555.6 967.1 556.7 963.2 563.6ZM942 565 947.7 567 946.6 569.4 940.9 567.4ZM942.1 557.6 945.7 550.3 948.9 551.6 945.3 558.9ZM945.7 568.3 950.7 570.5 949.5 572.7 944.5 570.5ZM1000.1 530.9 1005.1 532.8 1003.5 536.3 998.5 534.4ZM1030.9 530.3 1037.6 533.1 1035.9 536.5 1029.2 533.7ZM1016.8 521.5 1021.6 528.5 1018.4 530.3 1013.6 523.3ZM1011.1 522.9 1018.7 525.7 1017.5 528.5 1009.9 525.7ZM993.3 570 998.7 566.6 1000.5 569 995.1 572.4ZM1025.3 533.4 1029.4 539 1025.5 541.2 1021.4 535.6ZM1004.8 564.6 1012.4 559.8 1015 563 1007.4 567.8ZM1002.4 528.5 1006.6 535.6 1002.4 537.5 998.2 530.4ZM1021.3 535.8 1025.7 543.7 1022.7 545 1018.3 537.1ZM998.9 533.9 1002.3 540.8 998.9 542.1 995.5 535.2ZM995.6 530.9 1002.2 533.8 1000.8 536.3 994.2 533.4ZM1018.1 541.8 1027.5 544.2 1026.5 547.2 1017.1 544.8ZM625.1 501.9 634.3 501.9 634.3 505.2 625.1 505.2ZM626.5 488.7 632.9 488.7 632.9 493.1 626.5 493.1ZM633.9 501.9 644.5 501.9 644.5 506.2 633.9 506.2ZM634.9 488.6 643.4 488.6 643.4 493.1 634.9 493.1ZM644.9 501.9 652.3 501.9 652.3 505.5 644.9 505.5ZM645.2 488.1 652 488.1 652 493.1 645.2 493.1ZM654.8 501.9 661.3 501.9 661.3 505.2 654.8 505.2ZM652.7 489.1 663.4 489.1 663.4 493.1 652.7 493.1ZM663.9 501.9 671.1 501.9 671.1 506.9 663.9 506.9ZM664.1 489.8 670.9 489.8 670.9 493.1 664.1 493.1ZM673.8 501.9 680 501.9 680 506.8 673.8 506.8ZM673.4 488.7 680.5 488.7 680.5 493.1 673.4 493.1ZM682 501.9 690.8 501.9 690.8 505.4 682 505.4ZM690.7 501.9 700.9 501.9 700.9 505.4 690.7 505.4ZM690.4 489.1 701.3 489.1 701.3 493.1 690.4 493.1ZM701.3 501.9 709.2 501.9 709.2 506.4 701.3 506.4ZM700.9 489.8 709.6 489.8 709.6 493.1 700.9 493.1ZM625.4 512.2 631.6 512.2 631.6 515.3 625.4 515.3ZM633.5 512.2 637.8 512.2 637.8 516 633.5 516ZM639.3 512.2 646.1 512.2 646.1 516.2 639.3 516.2ZM654.4 512.2 659.3 512.2 659.3 515.2 654.4 515.2ZM667.6 512.2 674.4 512.2 674.4 514.8 667.6 514.8ZM674.8 512.2 681.4 512.2 681.4 515.6 674.8 515.6ZM683.1 512.2 687.3 512.2 687.3 514.8 683.1 514.8ZM689 512.2 695.6 512.2 695.6 516 689 516ZM696 512.2 702.8 512.2 702.8 514.7 696 514.7ZM703 512.2 709.9 512.2 709.9 515.2 703 515.2ZM591.6 452.1 590.4 456.6 586.9 455.9 588 451.3ZM589.9 458.8 588.5 464.2 584.2 463.3 585.6 457.9ZM588.4 464.7 586.5 472.5 583 471.8 584.9 464ZM586.5 472.4 584.8 479.2 581.7 478.6 583.4 471.8ZM584.8 479 582.9 486.8 578.8 486 580.8 478.2ZM582.7 487.8 581.5 492.3 577.6 491.5 578.7 487ZM554.5 576.2 554.5 583.8 551.2 583.8 551.2 576.2ZM564.2 576.8 564.2 583.2 560.5 583.2 560.5 576.8ZM554.5 587.2 554.5 592.8 551.2 592.8 551.2 587.2ZM556.1 597.4 563.1 602 560.4 605.2 553.5 600.6ZM562.4 591.6 567 594.7 565.2 596.9 560.6 593.8ZM569.8 595.6 575.6 599.5 573.3 602.2 567.5 598.4ZM571.7 607.8 577.4 611.6 575.6 613.8 569.9 610ZM577.1 600.9 582.9 604.8 580.8 607.2 575 603.4ZM937.5 183.2 940.1 182.1 940.6 183.2 938 184.2ZM935.6 178.9 937.9 178 938.6 179.4 936.3 180.3ZM943.3 180.9 946.8 179.5 947.2 180.4 943.7 181.8ZM948.2 179.1 951.8 179.3 951.6 180.6 948.1 180.4ZM953.4 179.4 956.9 179.7 956.8 180.7 953.3 180.5ZM954.5 175.2 956.5 175.4 956.4 176.6 954.4 176.4ZM959 179.8 961.6 180 961.5 181.5 958.9 181.4ZM959.1 175.7 962.2 175.9 962.1 177 959 176.8ZM963.7 180.2 967.3 180.4 967.2 181.8 963.6 181.6ZM964.6 175.8 967.1 176 967 177.3 964.5 177.1ZM969.4 176.1 972.7 176.3 972.5 177.7 969.3 177.5ZM974.4 176.6 978 176.8 977.9 178.1 974.3 177.8ZM979.5 176.9 983.3 177.2 983.2 178.4 979.3 178.2ZM985.1 181.6 987.3 181.8 987.2 182.9 985 182.7ZM990.4 177.9 993.1 178.1 993 179.1 990.3 178.9ZM995.4 182.3 997.8 182.5 997.7 183.7 995.3 183.5ZM1005.4 183 1008.4 183.2 1008.3 184.7 1005.3 184.5ZM1015.7 183.7 1018.9 184 1018.8 185.5 1015.5 185.2ZM1020.8 184 1024.2 184.1 1024.2 185.3 1020.7 185.2ZM1020.6 179.6 1024.5 179.7 1024.5 181.1 1020.6 181ZM1025.7 179.5 1029.4 179.6 1029.4 181.1 1025.7 181.1ZM1041 184.4 1043.9 184.5 1043.9 186 1041 185.9ZM1045.6 180.1 1049.5 180.2 1049.5 181.5 1045.6 181.4ZM1050.6 180.1 1054.5 180.1 1054.5 181.6 1050.6 181.5ZM1055.6 184.7 1059.3 184.8 1059.3 185.9 1055.6 185.8ZM1056.1 180.5 1059 180.6 1059 181.7 1056.1 181.6ZM1060.6 184.8 1064.4 184.9 1064.3 186.3 1060.5 186.2ZM1065.7 184.9 1069.3 184.9 1069.2 186.4 1065.6 186.3ZM1076.4 185.1 1078.6 185.1 1078.5 186.5 1076.3 186.5ZM1080.9 185.2 1084.1 185.2 1084 186.7 1080.8 186.7ZM1086 185.2 1089 185.3 1088.9 186.3 1086 186.2ZM1085.7 181 1089.4 181 1089.3 182.3 1085.7 182.2ZM1091.3 181.2 1094 181.4 1093.9 182.5 1091.3 182.3ZM1095.6 185.6 1099.3 185.8 1099.2 187.1 1095.5 187ZM1096.6 181.5 1098.7 181.6 1098.7 182.7 1096.5 182.6ZM1101 181.3 1104.3 181.5 1104.2 183 1100.9 182.8ZM1105.7 186.1 1109.1 186.3 1109 187.2 1105.7 187.1ZM1111.1 186.4 1113.7 186.5 1113.6 188.1 1111 188ZM1111.5 181.8 1113.9 181.9 1113.8 183.4 1111.4 183.3ZM1120.9 186.9 1123.9 187 1123.8 188.6 1120.8 188.4ZM1120.7 182.7 1124.6 182.9 1124.6 184 1120.6 183.8ZM1126.1 183.1 1129.2 183.3 1129.1 184.2 1126.1 184.1ZM1130.5 187.3 1134.4 187.5 1134.3 188.8 1130.4 188.6ZM1136.1 187.6 1138.8 187.7 1138.7 188.8 1136 188.6ZM1135.8 183.2 1139.5 183.4 1139.4 184.7 1135.7 184.5ZM1140.5 187.8 1144.3 188 1144.2 189.5 1140.4 189.4ZM1145.8 188.1 1149 188.2 1149 189.5 1145.7 189.3ZM1150.8 188.3 1154.1 188.5 1154 189.9 1150.7 189.7ZM1151.2 183.9 1154.2 184 1154.1 185.4 1151.1 185.3ZM1156.3 183.9 1159 184.1 1158.9 185.7 1156.2 185.5ZM1160.6 188.8 1164.2 189 1164.2 190.4 1160.5 190.2ZM1161.2 184.3 1164.1 184.5 1164 185.9 1161.1 185.8ZM1095.5 179.7 1098 179.1 1098.4 180.1 1095.8 180.8ZM1106.4 181.3 1109.5 180.5 1109.9 181.8 1106.8 182.5ZM1105.3 176.8 1108 176.2 1108.4 177.6 1105.7 178.2ZM1111.7 179.9 1114.2 179.3 1114.6 180.7 1112.1 181.3ZM1110.2 175.8 1113.2 175.1 1113.6 176.3 1110.6 177ZM1114.9 174.5 1118.4 173.6 1118.8 174.9 1115.3 175.8ZM1121 177.6 1124.8 176.6 1125.3 178 1121.5 179ZM1120.5 173.4 1123 172.8 1123.3 173.8 1120.8 174.5ZM1126.2 176.3 1129.7 175.4 1130.1 176.8 1126.6 177.7ZM1125.6 171.9 1127.8 171.4 1128.2 172.6 1126 173.2ZM1130.1 171 1133.4 170.2 1133.8 171.2 1130.4 172.1ZM1136.9 173.6 1138.9 173.1 1139.3 174.2 1137.3 174.7ZM1134.7 169.3 1138.5 168.4 1139 169.9 1135.2 170.8ZM1141.7 172.4 1144.2 171.8 1144.7 173.3 1142.1 173.9ZM1140.4 168.2 1143 167.6 1143.4 168.8 1140.8 169.4ZM1146.7 171.1 1149.1 170.5 1149.5 171.7 1147.1 172.3ZM1144.8 167.2 1148.6 166.3 1149 167.4 1145.2 168.3ZM1151.1 170 1154.8 169.1 1155.2 170.3 1151.5 171.2ZM1156.2 168.7 1159.7 167.9 1160 169 1156.6 169.9ZM1155 164.6 1158.4 163.7 1158.8 164.9 1155.4 165.8ZM980.8 169 984.2 169 984.2 170.5 980.8 170.5ZM981.1 164.4 983.9 164.4 983.9 166 981.1 166ZM986.2 169 988.8 169 988.8 170.4 986.2 170.4ZM985.7 165 989.3 165 989.3 166 985.7 166ZM991.1 164.4 993.9 164.4 993.9 166 991.1 166ZM996.3 169 998.7 169 998.7 170 996.3 170ZM995.7 164.6 999.3 164.6 999.3 166 995.7 166ZM1000.7 169 1004.3 169 1004.3 170.1 1000.7 170.1ZM1000.9 164.4 1004.1 164.4 1004.1 166 1000.9 166ZM1010.6 164.5 1014.4 164.5 1014.4 166 1010.6 166ZM1016.1 169 1018.9 169 1018.9 170.5 1016.1 170.5ZM1016.3 164.4 1018.7 164.4 1018.7 166 1016.3 166ZM1021 169 1024 169 1024 170.4 1021 170.4ZM1026.2 169 1028.8 169 1028.8 170 1026.2 170ZM1026 164.5 1029 164.5 1029 166 1026 166ZM187.1 254.7 191.2 255.1 191.1 256.6 186.9 256.2ZM187.9 250.2 191.4 250.5 191.2 252.4 187.7 252.1ZM197.5 255.6 201.8 256 201.6 257.8 197.3 257.4ZM197.7 251.1 202.5 251.5 202.3 253.4 197.5 253ZM207.7 256.6 212.5 257 212.3 258.3 207.6 257.9ZM214 253.3 217.5 253.6 217.4 254.8 213.8 254.5ZM218.2 257.6 222.9 258 222.7 259.4 218.1 259ZM219.3 253.7 222.7 254 222.5 255.3 219.1 255ZM196.9 249.6 200 252.7 198.9 253.5 195.8 250.4ZM201.9 253.9 204.1 256 202.6 257.2 200.4 255.1ZM202.3 260.9 204.8 263.4 203.7 264.3 201.2 261.8ZM205.8 257.5 208.8 260.4 207.1 261.7 204.2 258.8ZM154.6 351.3 160.1 351.7 160 353 154.5 352.6ZM155.3 347.2 160.2 347.6 160.1 349.1 155.2 348.7ZM160 351.7 164.7 352.1 164.6 353.5 159.9 353.1ZM164.6 352.1 170.1 352.6 169.9 354.4 164.4 354ZM166.3 347.8 169.4 348 169.2 349.8 166.1 349.6ZM170.1 352.6 174.6 353 174.5 354.5 170 354.1ZM170.4 348.2 175.2 348.6 175.1 350.3 170.2 349.9ZM175.3 353 179.5 353.4 179.3 355 175.1 354.6ZM176 348.5 179.7 348.8 179.5 350.7 175.8 350.4ZM159.4 360 165.3 359.6 165.4 360.9 159.4 361.2ZM165.9 363.5 169.3 363.3 169.4 364.9 166 365.1ZM164.8 359.4 169.9 359.1 170 360.7 164.9 360.9ZM170.8 363.3 174.4 363.1 174.5 364.6 170.9 364.8ZM170.5 358.8 174.1 358.6 174.2 360.4 170.6 360.6ZM175.4 363 179.7 362.8 179.8 364.1 175.5 364.4ZM180.7 362.8 184.5 362.6 184.6 364.2 180.8 364.4ZM320.5 313.3 337.4 307.2 339.5 311.7 322.6 317.8ZM318.5 311.8 332.3 314.2 331.5 318.2 317.7 315.8ZM196.3 410.9 208.3 409.9 208.7 413.1 196.7 414.1ZM154.8 413.3 164.7 411.9 165.2 414.3 155.3 415.7ZM144 442.3 148 435.3 158.4 440.1 154.4 447.1ZM135 442.2 145 442.2 145 445.4 135 445.4ZM155.8 427 163.7 425.6 164.2 428 156.3 429.4ZM351.1 427.2 358.6 424.4 361.3 430.4 353.8 433.2ZM454.8 433.5 464.7 431.7 465.2 434.1 455.3 435.9ZM493.5 441.4 501.5 441.4 501.5 444.6 493.5 444.6ZM1019.6 268.9 1029.5 267.2 1030.4 271.1 1020.5 272.8ZM1030 268 1043.8 265.5 1045 271 1031.2 273.5ZM1025.9 274.8 1035.8 273.1 1036.5 276.2 1026.6 277.9ZM1032.7 277.4 1048.5 274.7 1049.7 280.2 1033.9 282.9ZM1066.1 254.5 1073 258.5 1071.5 260.5 1064.6 256.5ZM1223.1 393.7 1236.9 401.7 1231.9 408.7 1218.1 400.7ZM1233.7 400.6 1257.2 411.6 1251.3 421.8 1227.8 410.8ZM1220.8 416.4 1225.5 418.2 1224.2 421.2 1219.5 419.4ZM1269 424.6 1273.9 425.5 1273.4 427.8 1268.5 426.9ZM541.2 242.6 551.2 242.6 551.2 247.4 541.2 247.4ZM535.5 251.4 549.5 251.4 549.5 256.2 535.5 256.2ZM523.8 251.4 533.8 251.4 533.8 254.6 523.8 254.6ZM543.8 247.2 553.8 247.2 553.8 250.4 543.8 250.4ZM607 226.4 613 226.4 613 229.6 607 229.6ZM548.2 210.6 564.2 210.6 564.2 213 548.2 213ZM676.1 301.4 701.7 306 698.9 318.6 673.3 314ZM696.2 328.4 720.1 330.5 718.8 341.6 694.9 339.5ZM690.5 316.8 704.5 316.8 704.5 323.2 690.5 323.2ZM1222 394.1 1234.7 400.1 1231.4 405.9 1218.7 399.9ZM1235.2 402 1259.6 410.9 1254.8 421.4 1230.4 412.5ZM1053.2 444 1061.1 445.4 1060.2 449.4 1052.3 448ZM1059.1 451.2 1065 452.2 1064.3 455.4 1058.4 454.4ZM1126.8 465.8 1134.3 468.5 1133.2 470.8 1125.7 468.1ZM1193.1 438.6 1196.9 437.3 1200.3 444.8 1196.5 446.1ZM1269.5 425.1 1274.4 426 1273.9 428.3 1269 427.4ZM1181.2 620.1 1201.1 618.3 1202.2 627.9 1182.3 629.7ZM1165 619.7 1175 619.7 1175 623.7 1165 623.7ZM1159.7 620.5 1165.7 620.5 1165.7 626.1 1159.7 626.1ZM1186 805.1 1204 805.1 1204 808.3 1186 808.3ZM1202.5 798.9 1206.3 800.2 1202.9 807.7 1199.1 806.4ZM977.7 757.2 985 760.6 983.7 762.8 976.4 759.4ZM101.3 768.8 126.3 767.5 128.1 794.6 103.1 795.9ZM173.1 798.8 218.8 784 220.3 787.8 174.6 802.6ZM206.7 796.6 219.9 791.8 226.7 806.8 213.5 811.6ZM146.9 672.4 159.1 665.4 163.1 671 150.9 678ZM152 673.1 171.1 662.1 174.6 666.9 155.5 677.9ZM164.4 646.8 176.5 639.8 179 643.2 166.9 650.2ZM186.3 647.7 195.7 651.2 193.7 655.7 184.3 652.2ZM171.9 658.8 179.4 661.6 178.1 664.6 170.6 661.8ZM211.8 720.9 222.2 726.9 218.2 732.5 207.8 726.5ZM180 720.3 189.4 723.7 186.6 729.7 177.2 726.3ZM221.5 688 228.5 688 228.5 692 221.5 692ZM201.9 732.5 210.6 737.5 208.1 740.9 199.4 735.9ZM220.5 748.7 229.1 753.7 226.1 757.9 217.5 752.9ZM246.9 748.1 255.6 753.1 253.1 756.5 244.4 751.5ZM256.4 757.9 269.1 763.8 267 767.5 254.3 761.6ZM280.3 776.5 286.9 774.1 289.7 780.1 283.1 782.5ZM156.4 808.2 162.2 806.7 165 815.2 159.2 816.7ZM123.3 823.4 136 817.5 138.1 821.2 125.4 827.1ZM134.5 744.8 147.2 738.9 148.9 741.8 136.2 747.7ZM169.2 702.6 176.2 706.6 174.2 709.4 167.2 705.4ZM170.4 736.1 181.3 731 183 733.9 172.1 739ZM167.1 728.4 171.5 730.9 169.5 733.6 165.1 731.1ZM223.2 789.9 227.9 788.2 230.2 793.5 225.5 795.2ZM289.7 766.7 293.7 766.7 293.7 769.9 289.7 769.9ZM492.5 684.1 506.5 682.9 507.5 692.5 493.5 693.7ZM555.3 596.1 561.3 596.1 561.3 602.5 555.3 602.5ZM555.5 607.3 577.4 605.3 577.9 609.3 556 611.3ZM570.3 568.5 576.3 568.5 576.3 574.9 570.3 574.9ZM544 591.8 551.9 590.4 552.6 593.6 544.7 595ZM574.3 589.7 582.3 589.7 582.3 593.7 574.3 593.7ZM465.8 649.5 473.7 648.1 474.2 650.5 466.3 651.9ZM424.7 691.1 428.7 691.1 428.7 693.5 424.7 693.5ZM363.5 591.5 366.5 591.5 366.5 593.9 363.5 593.9ZM490.4 685.2 508.4 683.6 509.6 694.8 491.6 696.4ZM566.2 833.5 585.9 819.7 596.2 831.5 576.5 845.3ZM450.6 915.7 472.5 889.7 479.4 894.3 457.5 920.3ZM438.3 922 455.7 912 461.7 920.4 444.3 930.4ZM499 897.5 508.4 900.9 506 906.1 496.6 902.7ZM442.9 909.1 452.3 912.5 449.5 918.5 440.1 915.1ZM609.1 802.9 618.5 799.5 620.9 804.7 611.5 808.1ZM572 788 578 788 578 794.4 572 794.4ZM589.2 817.1 594.9 819.1 593.2 822.9 587.5 820.9ZM660.3 825.5 675.3 820 677.3 824.5 662.3 830ZM709 804.3 724 798.8 726 803.3 711 808.8ZM726.5 830.5 741.5 825 743.5 829.5 728.5 835ZM744.8 830.1 756.3 827 757.6 830.9 746.1 834ZM770.9 822.1 777.5 817.5 786.7 827.9 780.1 832.5ZM767.1 835.5 776.9 833.8 777.9 838.5 768.1 840.2ZM758.4 837.4 768.3 835.7 769.2 839.6 759.3 841.3ZM656.5 854 672 849.8 673.5 854.4 658 858.6ZM684.2 879.7 691.2 875.7 698.2 885.3 691.2 889.3ZM719.6 865.8 726.9 862.4 732.8 872.6 725.5 876ZM799.5 847 806.5 843 815.5 855.4 808.5 859.4ZM785.9 871.4 801.3 867.2 803.1 872.6 787.7 876.8ZM759.5 857.9 769.2 855.3 770.5 859.1 760.8 861.7ZM763.9 848.3 768.6 846.6 772.1 854.1 767.4 855.8ZM841.3 841.2 845.3 840.5 846.7 846.8 842.7 847.5ZM858.7 845.4 868.1 848.8 866.3 852.6 856.9 849.2ZM625.4 718.5 640.9 722.6 639.6 726.5 624.1 722.4ZM636.4 715.7 640.3 716.4 638.6 724.3 634.7 723.6ZM645.2 683 649.8 686.8 640.8 695.4 636.2 691.6ZM648.7 693.2 658.1 696.6 656.3 700.4 646.9 697ZM656.4 945.1 665.1 940.1 668.6 944.9 659.9 949.9ZM468.8 889.9 478 897.6 461.2 913.5 452 905.8ZM450.7 918.4 462.9 925.4 455.9 935 443.7 928ZM441.3 909.3 450.7 912.8 448.7 917.3 439.3 913.8ZM438 940 447.4 943.5 445.4 948 436 944.5ZM499.8 898.5 507.3 901.2 505.6 904.9 498.1 902.2ZM660.1 963 665.7 965.1 663.3 970.4 657.7 968.3ZM658.1 944.5 665.6 941.8 667.3 945.5 659.8 948.2ZM660.9 825.5 674 820.7 675.7 824.5 662.6 829.3ZM657.6 853.9 671.1 850.3 672.4 854.1 658.9 857.7Z"/>
<polyline fill="none" stroke="#ffffff" stroke-width="1.86" points="457.5,166.2 482.5,175 502.5,182.5 522.5,190 535,200 547.5,212.5 560,225 565,242.5 567.5,260 575,280 585,295 600,310 620,330 640,350 650,360 660,372.5 665,385 675,390" stroke-linejoin="round" stroke-linecap="round" />
<polyline fill="none" stroke="#ffffff" stroke-width="1.2" points="482.5,175 525,166.2" stroke-linejoin="round" stroke-linecap="butt" stroke-dasharray="2.6 1.2"/>
<polyline fill="none" stroke="#ffffff" stroke-width="1.55" points="47,205.8 93.3,210 123.3,213 171.7,225.8 181.7,226.7 190,235 196.7,241.7 206.7,244.2 256.7,247.8 275,249.2 280,258.3 288.3,266.7 313.3,283.3 326.7,290 360,296.7" stroke-linejoin="round" stroke-linecap="round" />
<polyline fill="none" stroke="#ffffff" stroke-width="1.55" points="201.7,166 208.3,170.8 204.2,176.7 206.7,187.5 200,195.8 188.3,211.7 180.8,221.7 181.7,226.7" stroke-linejoin="round" stroke-linecap="round" />
<polyline fill="none" stroke="#ffffff" stroke-width="1.55" points="47.3,351.7 80,323 123,283 143,260 148,245 180,240 197,241" stroke-linejoin="round" stroke-linecap="round" />
<polyline fill="none" stroke="#ffffff" stroke-width="1.76" points="360,296.7 373,298 440,310 507,323" stroke-linejoin="round" stroke-linecap="round" />
<polyline fill="none" stroke="#ffffff" stroke-width="2.24" points="507,323 560,333 607,342 637,350 650,360" stroke-linejoin="round" stroke-linecap="round" />
<polyline fill="none" stroke="#ffffff" stroke-width="1" points="133.3,273.3 173.3,266.7 200,265" stroke-linejoin="round" stroke-linecap="butt" stroke-dasharray="2.2 1.2"/>
<polyline fill="none" stroke="#ffffff" stroke-width="1.87" points="47,446.2 85,437.5 97.5,428.8 107.5,423.8 140,420 247.5,411.2 322.5,410" stroke-linejoin="round" stroke-linecap="round" />
<polyline fill="none" stroke="#ffffff" stroke-width="2.21" points="322.5,410 390,402.5 460,395" stroke-linejoin="round" stroke-linecap="round" />
<polyline fill="none" stroke="#ffffff" stroke-width="2.55" points="460,395 487.4,395.6 524.4,400 565,411" stroke-linejoin="round" stroke-linecap="round" />
<polyline fill="none" stroke="#ffffff" stroke-width="2.55" points="565,411 615,422.5 630,425 665,426.2" stroke-linejoin="round" stroke-linecap="round" />
<polyline fill="none" stroke="#ffffff" stroke-width="1.4" points="90,422.5 88.8,412.5 93.8,405 152.5,372.5 170,352.5 220,327.5" stroke-linejoin="round" stroke-linecap="butt" stroke-dasharray="3.1 1.3"/>
<polyline fill="none" stroke="#ffffff" stroke-width="1" points="220,327.5 240,322.5 285,305 322.5,302.5 321.2,295 325,290" stroke-linejoin="round" stroke-linecap="butt" stroke-dasharray="2.2 1.2"/>
<polyline fill="none" stroke="#ffffff" stroke-width="1" points="127.5,350 157.5,347.5 170,352.5" stroke-linejoin="round" stroke-linecap="butt" stroke-dasharray="2.2 1.2"/>
<polyline fill="none" stroke="#ffffff" stroke-width="2" points="385,403.8 375,420 360,427.5" stroke-linejoin="round" stroke-linecap="butt" stroke-dasharray="4.4 1.8"/>
<polyline fill="none" stroke="#ffffff" stroke-width="2" points="480,397.5 467.5,425" stroke-linejoin="round" stroke-linecap="butt" stroke-dasharray="4.4 1.8"/>
<polyline fill="none" stroke="#ffffff" stroke-width="2" points="515,402.5 510,422.5 497.5,441.2 470,440 465,435" stroke-linejoin="round" stroke-linecap="butt" stroke-dasharray="4.4 1.8"/>
<polyline fill="none" stroke="#ffffff" stroke-width="1.5" points="412.5,403.8 460,402.5" stroke-linejoin="round" stroke-linecap="butt" stroke-dasharray="3.3 1.4"/>
<polyline fill="none" stroke="#ffffff" stroke-width="1.86" points="677.5,292.5 715,280 765,266.2 815,258.8 920,247.5" stroke-linejoin="round" stroke-linecap="round" />
<polyline fill="none" stroke="#ffffff" stroke-width="1.86" points="920,246.8 952.5,245 1025,212.5 1027.5,208.8 1015,200 1020,190 1027.5,185" stroke-linejoin="round" stroke-linecap="round" />
<polyline fill="none" stroke="#ffffff" stroke-width="1.24" points="935,182.5 947.5,177.5 1020,182.5 1090,183.8 1165,187.5 1305,197.5" stroke-linejoin="round" stroke-linecap="round" />
<polyline fill="none" stroke="#ffffff" stroke-width="1.24" points="947.5,177.5 950,170 960,166.2" stroke-linejoin="round" stroke-linecap="round" />
<polyline fill="none" stroke="#ffffff" stroke-width="1.24" points="1090,183.8 1115,177.5 1160,166.2" stroke-linejoin="round" stroke-linecap="round" />
<polyline fill="none" stroke="#ffffff" stroke-width="1" points="952.5,245 1015,270 1025,270" stroke-linejoin="round" stroke-linecap="butt" stroke-dasharray="2.2 1.2"/>
<polyline fill="none" stroke="#ffffff" stroke-width="1" points="1002.5,226.2 1020,245 1040,257.5 1055,260 1056.2,275 1040,285 1015,290" stroke-linejoin="round" stroke-linecap="butt" stroke-dasharray="2.2 1.2"/>
<polyline fill="none" stroke="#ffffff" stroke-width="1.24" points="762.5,187 865,168 920,166.2" stroke-linejoin="round" stroke-linecap="round" />
<polyline fill="none" stroke="#ffffff" stroke-width="1" points="647.5,254.5 692.5,255" stroke-linejoin="round" stroke-linecap="butt" stroke-dasharray="2.2 1.2"/>
<polyline fill="none" stroke="#ffffff" stroke-width="1.2" points="637.5,270 642.5,281.2 677.5,282.5" stroke-linejoin="round" stroke-linecap="butt" stroke-dasharray="2.6 1.2"/>
<polyline fill="none" stroke="#ffffff" stroke-width="1.2" points="600,385 630,385 627.5,400 600,397.5 600,385" stroke-linejoin="round" stroke-linecap="butt" stroke-dasharray="2.6 1.2"/>
<polyline fill="none" stroke="#ffffff" stroke-width="1.2" points="670,332.5 680,320 702.5,315" stroke-linejoin="round" stroke-linecap="butt" stroke-dasharray="2.6 1.2"/>
<polyline fill="none" stroke="#ffffff" stroke-width="1.2" points="665,325 710,325 715,332.5" stroke-linejoin="round" stroke-linecap="butt" stroke-dasharray="2.6 1.2"/>
<polyline fill="none" stroke="#ffffff" stroke-width="2.98" points="590,415 623.3,423.3 656.7,425.8 723.3,427.5 746.7,428.3 806.7,436.7 840,438.3 910,436.7" stroke-linejoin="round" stroke-linecap="round" />
<polyline fill="none" stroke="#ffffff" stroke-width="2.98" points="621.7,445 690,445 693.3,445" stroke-linejoin="round" stroke-linecap="round" />
<polyline fill="none" stroke="#ffffff" stroke-width="2.55" points="623.3,430 625.8,445" stroke-linejoin="round" stroke-linecap="round" />
<polyline fill="none" stroke="#ffffff" stroke-width="2.55" points="646.7,445 648.3,453.3" stroke-linejoin="round" stroke-linecap="round" />
<polyline fill="none" stroke="#ffffff" stroke-width="2.55" points="680.8,445 681.7,454.2" stroke-linejoin="round" stroke-linecap="round" />
<polyline fill="none" stroke="#ffffff" stroke-width="2" points="648.3,453.3 641.7,465.8" stroke-linejoin="round" stroke-linecap="butt" stroke-dasharray="4.4 1.8"/>
<polyline fill="none" stroke="#ffffff" stroke-width="2.98" points="653.3,368.3 668.3,385 683.3,401.7 696.7,410 728.3,423.3 740,428.3" stroke-linejoin="round" stroke-linecap="round" />
<polyline fill="none" stroke="#ffffff" stroke-width="2.55" points="668.3,380 690,371.7 731.7,370 736.7,363.3 746.7,356.7 756.7,353.3" stroke-linejoin="round" stroke-linecap="round" />
<polyline fill="none" stroke="#ffffff" stroke-width="1.5" points="756.7,353.3 773.3,348.3 823.3,340 856.7,335" stroke-linejoin="round" stroke-linecap="butt" stroke-dasharray="3.3 1.4"/>
<polyline fill="none" stroke="#ffffff" stroke-width="2.55" points="731.7,370 740,385 750,405 748.3,420" stroke-linejoin="round" stroke-linecap="round" />
<polyline fill="none" stroke="#ffffff" stroke-width="2.12" points="746.7,388.3 806.7,386.7 860,388.3 910,381.7" stroke-linejoin="round" stroke-linecap="round" />
<polyline fill="none" stroke="#ffffff" stroke-width="2.12" points="668.3,387.5 746.7,388.3" stroke-linejoin="round" stroke-linecap="round" />
<polyline fill="none" stroke="#ffffff" stroke-width="2.12" points="750,400 806.7,396.7 840,395" stroke-linejoin="round" stroke-linecap="round" />
<polyline fill="none" stroke="#ffffff" stroke-width="2.55" points="860,388.3 895,436.7" stroke-linejoin="round" stroke-linecap="round" />
<polyline fill="none" stroke="#ffffff" stroke-width="2.55" points="716.7,460 723.3,480 731.7,496.7 736.7,510" stroke-linejoin="round" stroke-linecap="round" />
<polyline fill="none" stroke="#ffffff" stroke-width="2.12" points="756.7,460 746.7,473.3 723.3,475" stroke-linejoin="round" stroke-linecap="round" />
<polyline fill="none" stroke="#ffffff" stroke-width="2.12" points="770,461.7 776.7,476.7 803.3,476.7 823.3,490 806.7,496.7" stroke-linejoin="round" stroke-linecap="round" />
<polyline fill="none" stroke="#ffffff" stroke-width="2.12" points="723.3,480 756.7,485 753.3,496.7 731.7,496.7" stroke-linejoin="round" stroke-linecap="round" />
<polyline fill="none" stroke="#ffffff" stroke-width="2.12" points="823.3,446.7 833.3,436.7 850,423.3" stroke-linejoin="round" stroke-linecap="round" />
<polyline fill="none" stroke="#ffffff" stroke-width="2.12" points="786.7,416.7 800,406.7 820,403.3" stroke-linejoin="round" stroke-linecap="round" />
<polyline fill="none" stroke="#ffffff" stroke-width="2.12" points="710,375 716.7,380 726.7,378.3 723.3,373.3" stroke-linejoin="round" stroke-linecap="round" />
<polyline fill="none" stroke="#ffffff" stroke-width="2.12" points="653.3,423.3 663.3,413.3 683.3,401.7" stroke-linejoin="round" stroke-linecap="round" />
<polyline fill="none" stroke="#ffffff" stroke-width="1.7" points="870,463.3 876.7,458.3 890,459.2" stroke-linejoin="round" stroke-linecap="round" />
<polyline fill="none" stroke="#ffffff" stroke-width="1.5" points="666.7,340 673.3,333.3 683.3,330" stroke-linejoin="round" stroke-linecap="butt" stroke-dasharray="3.3 1.4"/>
<polyline fill="none" stroke="#ffffff" stroke-width="1.5" points="683.3,353.3 693.3,351.7 706.7,368.3" stroke-linejoin="round" stroke-linecap="butt" stroke-dasharray="3.3 1.4"/>
<polyline fill="none" stroke="#ffffff" stroke-width="2.55" points="813.3,440 970,433.3 1063.3,426.7 1096.7,428.3 1190,450 1263.3,466.7 1303.3,470" stroke-linejoin="round" stroke-linecap="round" />
<polyline fill="none" stroke="#ffffff" stroke-width="2.55" points="1303.7,470.4 1237,487.4 1217.8,489.6 1188,486 1143.7,477 1131.9,478.5 1126,484.4 1128.9,496.3 1143.7,512.6 1137.8,515.6 1125.9,520 1099.3,524.4 1069.6,522.5 1046,520.7 1040,519.3" stroke-linejoin="round" stroke-linecap="round" />
<polyline fill="none" stroke="#ffffff" stroke-width="1.8" points="1146.7,514 1158.5,520 1166,529.6" stroke-linejoin="round" stroke-linecap="butt" stroke-dasharray="4 1.6"/>
<polyline fill="none" stroke="#ffffff" stroke-width="1.5" points="1240,423.3 1256.7,446.7 1303.3,466.7" stroke-linejoin="round" stroke-linecap="butt" stroke-dasharray="3.3 1.4"/>
<polyline fill="none" stroke="#ffffff" stroke-width="1.5" points="1040,426.7 1046.7,440" stroke-linejoin="round" stroke-linecap="butt" stroke-dasharray="3.3 1.4"/>
<polyline fill="none" stroke="#ffffff" stroke-width="2.12" points="840,390 886.7,381.7 1020,370 1033.3,386.7 953.3,393.3 940,383.3" stroke-linejoin="round" stroke-linecap="round" />
<polyline fill="none" stroke="#ffffff" stroke-width="2.12" points="860,390 893.3,436.7" stroke-linejoin="round" stroke-linecap="round" />
<polyline fill="none" stroke="#ffffff" stroke-width="2.12" points="940,383.3 973.3,433.3" stroke-linejoin="round" stroke-linecap="round" />
<polyline fill="none" stroke="#ffffff" stroke-width="2.12" points="910,405 933.3,433.3" stroke-linejoin="round" stroke-linecap="round" />
<polyline fill="none" stroke="#ffffff" stroke-width="2.55" points="808.9,443 843,477 887.4,517 931.9,543.7 945.2,551 1006,576.3" stroke-linejoin="round" stroke-linecap="round" />
<polyline fill="none" stroke="#ffffff" stroke-width="2.55" points="808.9,443 825.2,447.4 869.6,463.7 967.4,500.7 1010.4,514 1040,518.5 1046.7,520" stroke-linejoin="round" stroke-linecap="round" />
<polyline fill="none" stroke="#ffffff" stroke-width="3" points="1006,576.3 1070,580 1096.7,573.3 1100,563.3 1063.3,535 1046.7,520" stroke-linejoin="round" stroke-linecap="round" />
<polyline fill="none" stroke="#ffffff" stroke-width="3" points="1006.7,575 1013.3,556.7 1063.3,538.3" stroke-linejoin="round" stroke-linecap="round" />
<polyline fill="none" stroke="#ffffff" stroke-width="3" points="1132,533 1123,540 1100,563" stroke-linejoin="round" stroke-linecap="round" />
<polyline fill="none" stroke="#ffffff" stroke-width="3.5" points="1096.7,573.3 1126.7,603.3 1160,656.7" stroke-linejoin="round" stroke-linecap="round" />
<polyline fill="none" stroke="#ffffff" stroke-width="4.2" points="1160,656.7 1220,750" stroke-linejoin="round" stroke-linecap="round" />
<polyline fill="none" stroke="#ffffff" stroke-width="5.5" points="1220,750 1303.3,821.7" stroke-linejoin="round" stroke-linecap="round" />
<polyline fill="none" stroke="#ffffff" stroke-width="3" points="1160,656.7 1176.7,650 1181.7,635" stroke-linejoin="round" stroke-linecap="butt" stroke-dasharray="6.6 2.7"/>
<polyline fill="none" stroke="#ffffff" stroke-width="3.5" points="1220,750 1200,783.3 1183.3,790" stroke-linejoin="round" stroke-linecap="butt" stroke-dasharray="7.7 3.1"/>
<polyline fill="none" stroke="#ffffff" stroke-width="2.5" points="920,590 930,588.3 980,588.3 1000,581.7 1006.7,575" stroke-linejoin="round" stroke-linecap="butt" stroke-dasharray="5.5 2.2"/>
<polyline fill="none" stroke="#ffffff" stroke-width="1.8" points="888.9,554 931.9,543.7 945,539 952.6,542 946,546" stroke-linejoin="round" stroke-linecap="butt" stroke-dasharray="4 1.6"/>
<polyline fill="none" stroke="#ffffff" stroke-width="1.8" points="1010.4,514 1006,523" stroke-linejoin="round" stroke-linecap="butt" stroke-dasharray="4 1.6"/>
<polyline fill="none" stroke="#ffffff" stroke-width="2" points="600,503.8 630,501.2 695,501.2" stroke-linejoin="round" stroke-linecap="butt" stroke-dasharray="4.4 1.8"/>
<polyline fill="none" stroke="#ffffff" stroke-width="1.5" points="672.5,498.8 695,498.8 695,503.8 672.5,503.8 672.5,498.8" stroke-linejoin="round" stroke-linecap="butt" stroke-dasharray="3.3 1.4"/>
<polyline fill="none" stroke="#ffffff" stroke-width="2" points="472.5,438.8 495,438.8 507.5,427.5 512.5,420" stroke-linejoin="round" stroke-linecap="butt" stroke-dasharray="4.4 1.8"/>
<polyline fill="none" stroke="#ffffff" stroke-width="2" points="565,420 572.5,427.5 590,431.2" stroke-linejoin="round" stroke-linecap="butt" stroke-dasharray="4.4 1.8"/>
<polyline fill="none" stroke="#ffffff" stroke-width="2.5" points="555,592.5 555,577.5 567.5,567.5 588.8,562.5" stroke-linejoin="round" stroke-linecap="butt" stroke-dasharray="5.5 2.2"/>
<polyline fill="none" stroke="#ffffff" stroke-width="2.5" points="478.8,643.8 482.5,650 495,652.5 550,648.8" stroke-linejoin="round" stroke-linecap="butt" stroke-dasharray="5.5 2.2"/>
<polyline fill="none" stroke="#ffffff" stroke-width="2.5" points="552.5,620 551.2,660 565,662.5" stroke-linejoin="round" stroke-linecap="butt" stroke-dasharray="5.5 2.2"/>
<polyline fill="none" stroke="#ffffff" stroke-width="2.5" points="551.2,660 525,675 515,678.8" stroke-linejoin="round" stroke-linecap="butt" stroke-dasharray="5.5 2.2"/>
<polyline fill="none" stroke="#ffffff" stroke-width="2.5" points="585,635 576.2,637.5 575,645 565,662.5 555,680 522.5,685" stroke-linejoin="round" stroke-linecap="butt" stroke-dasharray="5.5 2.2"/>
<polyline fill="none" stroke="#ffffff" stroke-width="2.5" points="627.5,677.5 675,659.5 765,631.2 865,603.2 900,593 920,588" stroke-linejoin="round" stroke-linecap="butt" stroke-dasharray="5.5 2.2"/>
<polyline fill="none" stroke="#ffffff" stroke-width="2" points="890,553.8 920,547.5" stroke-linejoin="round" stroke-linecap="butt" stroke-dasharray="4.4 1.8"/>
<polyline fill="none" stroke="#ffffff" stroke-width="6" points="600,775 600,800 602.5,820 615,850 630,880 640,905 646.2,930 648.8,950 650,988" stroke-linejoin="round" stroke-linecap="round" />
<polyline fill="none" stroke="#ffffff" stroke-width="4" points="576.2,802.5 590,810 600,815" stroke-linejoin="round" stroke-linecap="round" />
<polyline fill="none" stroke="#ffffff" stroke-width="3.5" points="612.5,815 620,840 630,862.5 645,887.5 690,875 752.5,850 790,840 830,837.5" stroke-linejoin="round" stroke-linecap="butt" stroke-dasharray="7.7 3.1"/>
<polyline fill="none" stroke="#ffffff" stroke-width="3.5" points="660,830 670,845 687.5,877.5" stroke-linejoin="round" stroke-linecap="butt" stroke-dasharray="7.7 3.1"/>
<polyline fill="none" stroke="#ffffff" stroke-width="3.5" points="725,803.8 740,827.5 755,847.5" stroke-linejoin="round" stroke-linecap="butt" stroke-dasharray="7.7 3.1"/>
<polyline fill="none" stroke="#ffffff" stroke-width="3.5" points="637.5,892.5 645,888.8" stroke-linejoin="round" stroke-linecap="round" />
<polyline fill="none" stroke="#ffffff" stroke-width="4.5" points="631,990 640,978 648,969" stroke-linejoin="round" stroke-linecap="butt" stroke-dasharray="9.9 4"/>
<polyline fill="none" stroke="#ffffff" stroke-width="4" points="150,648.3 186.7,670 213.3,696.7 236.7,716.7 230,746.7 240,756.7 270,776.7 273.3,800 333.3,850 356.7,855 373.3,855 406.7,840 473.3,820 540,803.3 573.3,798.3" stroke-linejoin="round" stroke-linecap="butt" stroke-dasharray="8.8 3.6"/>
<polyline fill="none" stroke="#ffffff" stroke-width="4" points="183.3,643.3 206.7,660 211.7,680 210,696.7" stroke-linejoin="round" stroke-linecap="butt" stroke-dasharray="8.8 3.6"/>
<polyline fill="none" stroke="#ffffff" stroke-width="4" points="228.3,651.7 236.7,680 243.3,701.7 236.7,716.7" stroke-linejoin="round" stroke-linecap="butt" stroke-dasharray="8.8 3.6"/>
<polyline fill="none" stroke="#ffffff" stroke-width="4" points="180,710 213.3,733.3 230,746.7" stroke-linejoin="round" stroke-linecap="butt" stroke-dasharray="8.8 3.6"/>
<polyline fill="none" stroke="#ffffff" stroke-width="4" points="240,703.3 190,733.3 140,753.3 136.7,780 141.7,788.3 236.7,756.7" stroke-linejoin="round" stroke-linecap="butt" stroke-dasharray="8.8 3.6"/>
<polyline fill="none" stroke="#ffffff" stroke-width="4" points="47.3,850 123.3,830 176.7,818.3 273.3,843.3 330,860" stroke-linejoin="round" stroke-linecap="butt" stroke-dasharray="8.8 3.6"/>
<polyline fill="none" stroke="#ffffff" stroke-width="4" points="47.3,828.3 61.7,826.7 53.3,850" stroke-linejoin="round" stroke-linecap="butt" stroke-dasharray="8.8 3.6"/>
<polyline fill="none" stroke="#ffffff" stroke-width="4" points="330,860 373.3,890 383.3,890 440,853.3 506.7,823.3 573.3,803.3" stroke-linejoin="round" stroke-linecap="butt" stroke-dasharray="8.8 3.6"/>
<polyline fill="none" stroke="#ffffff" stroke-width="4" points="335,848.3 330,863.3" stroke-linejoin="round" stroke-linecap="round" />
<polyline fill="none" stroke="#74c679" stroke-width="3" points="772.5,166.2 752.5,206.2" stroke-linejoin="round" stroke-linecap="round" />
<polyline fill="none" stroke="#74c679" stroke-width="3" points="752.5,206.2 705,250" stroke-linejoin="round" stroke-linecap="round" />
<polyline fill="none" stroke="#74c679" stroke-width="4" points="705,250 690,270" stroke-linejoin="round" stroke-linecap="round" />
<polyline fill="none" stroke="#74c679" stroke-width="4" points="690,270 677.5,290" stroke-linejoin="round" stroke-linecap="round" />
<polyline fill="none" stroke="#74c679" stroke-width="4" points="677.5,290 665,320" stroke-linejoin="round" stroke-linecap="round" />
<polyline fill="none" stroke="#74c679" stroke-width="4.8" points="665,320 655,350" stroke-linejoin="round" stroke-linecap="round" />
<polyline fill="none" stroke="#74c679" stroke-width="4.8" points="655,350 645,372.5" stroke-linejoin="round" stroke-linecap="round" />
<polyline fill="none" stroke="#74c679" stroke-width="4.8" points="645,372.5 630,405" stroke-linejoin="round" stroke-linecap="round" />
<polyline fill="none" stroke="#74c679" stroke-width="4.8" points="630,405 620,430" stroke-linejoin="round" stroke-linecap="round" />
<polyline fill="none" stroke="#74c679" stroke-width="5.6" points="620,430 615,440" stroke-linejoin="round" stroke-linecap="round" />
<polyline fill="none" stroke="#74c679" stroke-width="5.6" points="615,440 602.5,470" stroke-linejoin="round" stroke-linecap="round" />
<polyline fill="none" stroke="#74c679" stroke-width="5.6" points="602.5,470 595,502.5" stroke-linejoin="round" stroke-linecap="round" />
<polyline fill="none" stroke="#74c679" stroke-width="5.6" points="595,502.5 591.2,540" stroke-linejoin="round" stroke-linecap="round" />
<polyline fill="none" stroke="#74c679" stroke-width="5.6" points="591.2,540 592.5,595" stroke-linejoin="round" stroke-linecap="round" />
<polyline fill="none" stroke="#74c679" stroke-width="6.3" points="592.5,595 590,645" stroke-linejoin="round" stroke-linecap="round" />
<polyline fill="none" stroke="#74c679" stroke-width="6.3" points="590,645 589.5,680" stroke-linejoin="round" stroke-linecap="round" />
<polyline fill="none" stroke="#74c679" stroke-width="6.3" points="589.5,680 590,680" stroke-linejoin="round" stroke-linecap="round" />
<polyline fill="none" stroke="#74c679" stroke-width="6.3" points="590,680 593.8,705" stroke-linejoin="round" stroke-linecap="round" />
<polyline fill="none" stroke="#74c679" stroke-width="6.3" points="593.8,705 597.5,730" stroke-linejoin="round" stroke-linecap="round" />
<polyline fill="none" stroke="#74c679" stroke-width="7" points="597.5,730 599.5,755" stroke-linejoin="round" stroke-linecap="round" />
<polyline fill="none" stroke="#74c679" stroke-width="7" points="599.5,755 600,770" stroke-linejoin="round" stroke-linecap="round" />
<polyline fill="none" stroke="#74c679" stroke-width="7" points="600,770 590,800" stroke-linejoin="round" stroke-linecap="round" />
<polyline fill="none" stroke="#74c679" stroke-width="7.6" points="590,800 582.5,810" stroke-linejoin="round" stroke-linecap="round" />
<polyline fill="none" stroke="#74c679" stroke-width="7.6" points="582.5,810 574.6,820" stroke-linejoin="round" stroke-linecap="round" />
<polyline fill="none" stroke="#74c679" stroke-width="7.6" points="574.6,820 541,870" stroke-linejoin="round" stroke-linecap="round" />
<polyline fill="none" stroke="#74c679" stroke-width="7.6" points="541,870 505.8,920" stroke-linejoin="round" stroke-linecap="round" />
<polyline fill="none" stroke="#74c679" stroke-width="8.2" points="505.8,920 472.5,955.4" stroke-linejoin="round" stroke-linecap="round" />
<polyline fill="none" stroke="#74c679" stroke-width="8.2" points="472.5,955.4 436,991" stroke-linejoin="round" stroke-linecap="round" />
<text x="593" y="581" transform="rotate(-88 593 581)" text-anchor="middle" dominant-baseline="central" font-family="Liberation Sans, sans-serif" font-weight="700" font-size="7" fill="#fff" stroke="#74c679" stroke-width="4" stroke-linejoin="round" paint-order="stroke" letter-spacing="0.2">A429</text>
<text x="591.7" y="695" transform="rotate(-88 591.7 695)" text-anchor="middle" dominant-baseline="central" font-family="Liberation Sans, sans-serif" font-weight="700" font-size="7.5" fill="#fff" stroke="#74c679" stroke-width="4.5" stroke-linejoin="round" paint-order="stroke" letter-spacing="0.2">A429</text>
<text x="444" y="983" transform="rotate(-46 444 983)" text-anchor="middle" dominant-baseline="central" font-family="Liberation Sans, sans-serif" font-weight="700" font-size="12.5" fill="#fff" stroke="#74c679" stroke-width="6" stroke-linejoin="round" paint-order="stroke" letter-spacing="0.2">A429</text>
<text x="702.5" y="252.5" transform="rotate(-50 702.5 252.5)" text-anchor="middle" dominant-baseline="central" font-family="Liberation Sans, sans-serif" font-weight="700" font-size="4.5" fill="#fff" stroke="#74c679" stroke-width="2" stroke-linejoin="round" paint-order="stroke" letter-spacing="0.2">A429</text>
<text x="657.5" y="335" transform="rotate(-70 657.5 335)" text-anchor="middle" dominant-baseline="central" font-family="Liberation Sans, sans-serif" font-weight="700" font-size="5" fill="#fff" stroke="#74c679" stroke-width="2.5" stroke-linejoin="round" paint-order="stroke" letter-spacing="0.2">A429</text>
</svg></div>
<div class="abs" style="left:58px;top:177px;width:34px;height:102px;background:#fff;border-radius:4px;box-shadow:0 0 0 1.5px rgba(0,0,0,.1)"></div>
<div class="abs" style="left:58px;top:211px;width:34px;height:1px;background:#ddd"></div><div class="abs" style="left:58px;top:245px;width:34px;height:1px;background:#ddd"></div>
<svg class="abs" style="left:68px;top:187px" width="14" height="14" viewBox="0 0 14 14" ><path d="M7 0.5v13M0.5 7h13" stroke="#222" stroke-width="2.6"/></svg>
<svg class="abs" style="left:68px;top:227px" width="14" height="3" viewBox="0 0 14 3" ><rect x="0.5" y="0" width="13" height="2.6" fill="#222"/></svg>
<svg class="abs" style="left:69px;top:254px" width="12" height="17" viewBox="0 0 12 17" ><path d="M6 1l5 6.5h-10z" fill="#333"/><path d="M6 16l5-6.5h-10z" fill="#c6c6c6"/></svg>
<div class="abs" style="left:58px;top:290px;width:68px;height:33px;background:#fff;border-radius:4px;box-shadow:0 0 0 1.5px rgba(0,0,0,.1)"></div>
<svg class="abs" style="left:68px;top:301px" width="14" height="12" viewBox="0 0 14 12" ><path d="M0.5 0.5h13l-6.5 11z" fill="#000"/></svg>
<svg class="abs" style="left:102px;top:301px" width="14" height="12" viewBox="0 0 14 12" ><path d="M0.5 11.5h13l-6.5-11z" fill="#000"/></svg>
<div class="abs" style="left:58px;top:335px;width:68px;height:33px;background:#fff;border-radius:4px;box-shadow:0 0 0 1.5px rgba(0,0,0,.1)"></div>
<svg class="abs" style="left:68px;top:344px" width="15" height="15" viewBox="0 0 15 15" ><path d="M3 5.5A5.5 5.5 0 1 1 2 9" fill="none" stroke="#222" stroke-width="1.3"/><path d="M2.5 1.5v4.5h4.5" fill="none" stroke="#222" stroke-width="1.3"/></svg>
<svg class="abs" style="left:101px;top:344px" width="15" height="15" viewBox="0 0 15 15" ><path d="M12 5.5A5.5 5.5 0 1 0 13 9" fill="none" stroke="#222" stroke-width="1.3"/><path d="M12.5 1.5v4.5h-4.5" fill="none" stroke="#222" stroke-width="1.3"/></svg>
<div class="abs" style="left:58px;top:380px;width:34px;height:33px;background:#fff;border-radius:4px;box-shadow:0 0 0 1.5px rgba(0,0,0,.1)"></div>
<svg class="abs" style="left:66px;top:389px" width="20" height="20" viewBox="0 0 20 20" ><path d="M11.5 8v-2.5a3.2 3.2 0 0 1 6.4 0v1.5" fill="none" stroke="#c9c3d6" stroke-width="1.7"/><rect x="1.3" y="7.5" width="12.5" height="10.5" rx="1" fill="#f8981d"/><rect x="1.3" y="7.5" width="12.5" height="4" rx="1" fill="#fdb94a"/><path d="M7.5 10.5a1.4 1.4 0 0 1 .700 2.6v2.2h-1.4v-2.2a1.4 1.4 0 0 1 .700-2.6z" fill="#1f2a6b"/></svg>
<div class="abs" style="left:116px;top:180px;width:86px;height:31px;background:#fff;border:1px solid #ddd"></div>
<div class="abs" style="left:209px;top:180px;width:86px;height:31px;background:#fff;border:1px solid #ddd"></div>
<span class="tx" style="left:124.5px;top:187.5px;font-size:13px;line-height:17px;color:#333;">5</span>
<span class="tx" style="left:217px;top:187.5px;font-size:13px;line-height:17px;letter-spacing:-0.23px;color:#333;">20</span>
<div class="abs" style="left:118px;top:227px;width:172px;height:4px;background:#e9e9e9;border-radius:2px"></div>
<div class="abs" style="left:116px;top:227px;width:102px;height:4px;background:#666"></div>
<div class="abs" style="left:114px;top:219px;width:5px;height:20px;background:#666;border-radius:2.5px"></div>
<div class="abs" style="left:216px;top:219px;width:5px;height:20px;background:#666;border-radius:2.5px"></div>
<div class="abs" style="left:58px;top:950px;width:73px;height:25px;background:rgba(255,255,255,.75);border:2px solid #333;border-top:none"></div>
<span class="tx" style="left:66.5px;top:953.5px;font-size:12px;line-height:16px;letter-spacing:-0.34px;color:#222;">500 ft</span>
<div class="abs" style="left:738px;top:965px;width:566px;height:23px;background:rgba(255,255,255,.5)"></div>
<span class="tx" style="left:744px;top:967px;font-size:14.2px;line-height:18px;letter-spacing:-0.15px;color:#333;">Icon Map Slicer | © Crown copyright and database rights. Ordnance Survey 2024. OGL v3</span>
<span class="tx" style="left:197px;top:237.5px;font-size:11.5px;line-height:15px;letter-spacing:-0.18px;color:#222;text-shadow:-1px -1px 0 #fff,1px -1px 0 #fff,-1px 1px 0 #fff,1px 1px 0 #fff,0 1.5px 0 #fff,0 -1.5px 0 #fff,1.5px 0 0 #fff,-1.5px 0 0 #fff;">Upper Swell</span>
<span class="tx" style="left:996px;top:171px;font-size:11.5px;line-height:15px;letter-spacing:-0.17px;color:#222;text-shadow:-1px -1px 0 #fff,1px -1px 0 #fff,-1px 1px 0 #fff,1px 1px 0 #fff,0 1.5px 0 #fff,0 -1.5px 0 #fff,1.5px 0 0 #fff,-1.5px 0 0 #fff;">Broadwell</span>
<span class="tx" style="left:628.5px;top:392.8px;font-size:12.5px;line-height:16px;letter-spacing:0.04px;color:#222;text-shadow:-1px -1px 0 #fff,1px -1px 0 #fff,-1px 1px 0 #fff,1px 1px 0 #fff,0 1.5px 0 #fff,0 -1.5px 0 #fff,1.5px 0 0 #fff,-1.5px 0 0 #fff;">Stow-on-the-Wold</span>
<span class="tx" style="left:1058px;top:521.5px;font-size:13px;line-height:17px;letter-spacing:0.42px;color:#111;text-shadow:-1px -1px 0 #fff,1px -1px 0 #fff,-1px 1px 0 #fff,1px 1px 0 #fff,0 1.5px 0 #fff,0 -1.5px 0 #fff,1.5px 0 0 #fff,-1.5px 0 0 #fff;">Maugersbury</span>
<svg class="abs" style="left:737px;top:417px" width="20" height="20" viewBox="0 0 20 20" ><circle cx="10" cy="9.7" r="6.5" fill="rgba(255,255,255,.75)" stroke="#ff00ff" stroke-width="2.8"/></svg>
<div class="abs" style="left:691px;top:437.5px;width:112px;height:21px;background:#fff;border:1.3px solid #333;border-radius:4px"></div>
<span class="tx" style="left:696.2px;top:437.7px;font-size:13.2px;line-height:17px;letter-spacing:-0.21px;color:#111;">Stow-on-the-Wold</span>
<span class="tx" style="left:1324px;top:165.8px;font-size:14px;line-height:18px;letter-spacing:0.47px;-webkit-text-stroke:0.45px #252423;transform:scaleY(1.05);">Service</span>
<div class="abs" style="left:1321px;top:191.5px;width:191px;height:30px;background:#fff;border:1px solid #e6e6e6"></div>
<span class="tx" style="left:1327.5px;top:198.8px;font-size:14.5px;line-height:19px;letter-spacing:0.16px;color:#777;">Gloucestershire</span>
<svg class="abs" style="left:1491px;top:204.8px" width="14" height="8" viewBox="0 0 14 8" ><path d="M0.8 0.8l6.2 6.2 6.2-6.2" fill="none" stroke="#555" stroke-width="1.3"/></svg>
<span class="tx" style="left:1324px;top:237.8px;font-size:14px;line-height:18px;letter-spacing:0.56px;-webkit-text-stroke:0.45px #252423;transform:scaleY(1.05);">Crewing Type</span>
<div class="abs" style="left:1321px;top:263.5px;width:191px;height:30px;background:#fff;border:1px solid #e6e6e6"></div>
<span class="tx" style="left:1327.5px;top:270.8px;font-size:14.5px;line-height:19px;letter-spacing:0.29px;color:#777;">All</span>
<svg class="abs" style="left:1491px;top:276.8px" width="14" height="8" viewBox="0 0 14 8" ><path d="M0.8 0.8l6.2 6.2 6.2-6.2" fill="none" stroke="#555" stroke-width="1.3"/></svg>
<span class="tx" style="left:1324px;top:309.8px;font-size:14px;line-height:18px;letter-spacing:0.58px;-webkit-text-stroke:0.45px #252423;transform:scaleY(1.05);">Fire Station</span>
<div class="abs" style="left:1321px;top:335.5px;width:191px;height:30px;background:#fff;border:1px solid #e6e6e6"></div>
<span class="tx" style="left:1327.5px;top:342.8px;font-size:14.5px;line-height:19px;letter-spacing:0.29px;color:#777;">All</span>
<svg class="abs" style="left:1491px;top:348.8px" width="14" height="8" viewBox="0 0 14 8" ><path d="M0.8 0.8l6.2 6.2 6.2-6.2" fill="none" stroke="#555" stroke-width="1.3"/></svg>
<div class="abs" style="left:1315px;top:682px;width:11.3px;height:30.3px;background:#ffea68"></div>
<div class="abs" style="left:1315px;top:712.1px;width:11.3px;height:30.3px;background:#ff9966"></div>
<div class="abs" style="left:1315px;top:742.2px;width:11.3px;height:30.3px;background:#ff6666"></div>
<div class="abs" style="left:1315px;top:772.3px;width:11.3px;height:30.3px;background:#cc6699"></div>
<div class="abs" style="left:1315px;top:802.4px;width:11.3px;height:30.3px;background:#9966cc"></div>
<div class="abs" style="left:1315px;top:832.5px;width:11.3px;height:30.3px;background:#6666cc"></div>
<div class="abs" style="left:1315px;top:862.6px;width:11.3px;height:30.3px;background:#6699ff"></div>
<div class="abs" style="left:1315px;top:892.7px;width:11.3px;height:30.3px;background:#66ccff"></div>
<div class="abs" style="left:1315px;top:922.8px;width:11.3px;height:30.3px;background:#8ae5d8"></div>
<div id="filters"></div>
<svg class="abs" style="left:1536px;top:173px" width="13" height="12" viewBox="0 0 13 12" ><path d="M6 1l-5 5 5 5M12 1l-5 5 5 5" fill="none" stroke="#252423" stroke-width="1.3"/></svg>
<svg class="abs" style="left:1537px;top:201px" width="14" height="13" viewBox="0 0 14 13" ><path d="M12.5 1v10l-3.5-2.5-8-2.5 8-2.5z" fill="none" stroke="#252423" stroke-width="1.3" stroke-linejoin="round"/></svg>
<span class="tx" style="left:1551px;top:222px;font-size:14.5px;line-height:18px;-webkit-text-stroke:.45px #252423;color:#252423;transform:rotate(90deg);transform-origin:0 0;letter-spacing:-.1px">Filters</span>
<div id="viz"></div>
<span class="tx" style="left:1567.5px;top:169.5px;font-size:15px;line-height:20px;letter-spacing:0.49px;-webkit-text-stroke:0.45px #252423;">Visualizations</span>
<svg class="abs" style="left:1718px;top:173px" width="13" height="12" viewBox="0 0 13 12" ><path d="M1 1l5 5-5 5M7 1l5 5-5 5" fill="none" stroke="#252423" stroke-width="1.3"/></svg>
<span class="tx" style="left:1567.5px;top:198px;font-size:12px;line-height:16px;letter-spacing:0.02px;-webkit-text-stroke:0.45px #252423;">Build visual</span>
<div class="abs" style="left:1567px;top:217px;width:32px;height:32px;background:#c8c6c4;border-radius:2px"></div>
<svg class="abs" style="left:1570px;top:220px" width="26" height="26" viewBox="0 0 26 26" ><path d="M2 2h16" stroke="#3b3a39" stroke-width="1.2"/><rect x="2.5" y="6.5" width="21" height="7" fill="#117865" stroke="#252423" stroke-width="1" stroke-dasharray="1.5 1"/><rect x="2.5" y="16.5" width="21" height="7" fill="#117865" stroke="#252423" stroke-width="1" stroke-dasharray="1.5 1"/></svg>
<svg class="abs" style="left:1636px;top:220px" width="27" height="27" viewBox="0 0 27 27" ><path d="M3.5 25.5h-2v-24h9l5 5v3M10.5 1.5v5h5" fill="none" stroke="#252423" stroke-width="1.3"/><path d="M25 8c-4 3-8 8-10 12M14 18c-2 0-3 1.5-3 3.5 0 1.5-1 2-2.5 2.5 3 1.5 7 0 7.5-3.5" fill="none" stroke="#252423" stroke-width="1.3"/></svg>
<div class="abs" style="left:1559px;top:261px;width:180px;height:1px;background:#a19f9d"></div>
<svg class="abs" style="left:1574px;top:254px" width="18" height="9" viewBox="0 0 18 9" ><path d="M1 8.5l8-7.5 8 7.5" fill="#f3f2f1" stroke="#a19f9d" stroke-width="1"/></svg>
<svg class="abs" style="left:1569px;top:272px" width="20" height="20" viewBox="0 0 20 20" ><path d="M1 0v19h18" fill="none" stroke="#3b3a39" stroke-width="1.2"/><rect x="2" y="3" width="6" height="4" fill="#7fbaf0" stroke="#2b88d8"/><rect x="8" y="3" width="5" height="4" fill="#fff" stroke="#3b3a39" stroke-width="0.8"/><rect x="2" y="11" width="7" height="4" fill="#fff" stroke="#3b3a39" stroke-width="0.8"/><rect x="9" y="11" width="7" height="4" fill="#c8c6c4"/></svg>
<svg class="abs" style="left:1597px;top:272px" width="20" height="20" viewBox="0 0 20 20" ><path d="M1 0v19h18" fill="none" stroke="#3b3a39" stroke-width="1.2"/><rect x="5" y="5" width="4" height="7" fill="#7fbaf0" stroke="#2b88d8"/><rect x="5" y="12" width="4" height="7" fill="#fff" stroke="#3b3a39" stroke-width="0.8"/><rect x="12" y="3" width="4" height="8" fill="#c8c6c4"/><rect x="12" y="11" width="4" height="8" fill="#fff" stroke="#3b3a39" stroke-width="0.8"/></svg>
<svg class="abs" style="left:1625px;top:272px" width="20" height="20" viewBox="0 0 20 20" ><path d="M1 0v19h18" fill="none" stroke="#3b3a39" stroke-width="1.2"/><rect x="2" y="1.5" width="16" height="4" fill="#7fbaf0" stroke="#2b88d8"/><rect x="2" y="7.5" width="9" height="4" fill="#fff" stroke="#3b3a39" stroke-width="0.8"/><rect x="2" y="13.5" width="13" height="4" fill="#c8c6c4" stroke="#a19f9d"/></svg>
<svg class="abs" style="left:1652.9px;top:272px" width="20" height="20" viewBox="0 0 20 20" ><path d="M1 0v19h18" fill="none" stroke="#3b3a39" stroke-width="1.2"/><rect x="2.5" y="1" width="5" height="18" fill="#7fbaf0" stroke="#2b88d8"/><rect x="9" y="9" width="4" height="10" fill="#fff" stroke="#3b3a39" stroke-width="0.8"/><rect x="14" y="6" width="4" height="13" fill="#c8c6c4" stroke="#a19f9d"/></svg>
<svg class="abs" style="left:1680.9px;top:272px" width="20" height="20" viewBox="0 0 20 20" ><path d="M1 0v19h18" fill="none" stroke="#3b3a39" stroke-width="1.2"/><rect x="2" y="3" width="9" height="4" fill="#7fbaf0" stroke="#2b88d8"/><rect x="11" y="3" width="6" height="4" fill="#fff" stroke="#3b3a39" stroke-width="0.8"/><rect x="2" y="11" width="6" height="4" fill="#fff" stroke="#3b3a39" stroke-width="0.8"/><rect x="8" y="11" width="9" height="4" fill="#c8c6c4"/></svg>
<svg class="abs" style="left:1708.9px;top:272px" width="20" height="20" viewBox="0 0 20 20" ><path d="M1 0v19h18" fill="none" stroke="#3b3a39" stroke-width="1.2"/><rect x="5" y="2" width="4" height="10" fill="#7fbaf0" stroke="#2b88d8"/><rect x="5" y="12" width="4" height="7" fill="#fff" stroke="#3b3a39" stroke-width="0.8"/><rect x="12" y="2" width="4" height="6" fill="#c8c6c4"/><rect x="12" y="8" width="4" height="11" fill="#fff" stroke="#3b3a39" stroke-width="0.8"/></svg>
<svg class="abs" style="left:1569px;top:300.1px" width="20" height="20" viewBox="0 0 20 20" ><path d="M1 0v19h18" fill="none" stroke="#3b3a39" stroke-width="1.2"/><path d="M2 13l6-7 4 5 6-7" fill="none" stroke="#3b3a39" stroke-width="1.1"/><path d="M2 17l6-8 4 4 6-6" fill="none" stroke="#2b88d8" stroke-width="1.2"/></svg>
<svg class="abs" style="left:1597px;top:300.1px" width="20" height="20" viewBox="0 0 20 20" ><path d="M1 19h18" stroke="#3b3a39" stroke-width="1.2"/><path d="M8 19l6-14 5 9v5z" fill="#c8c6c4" stroke="#a19f9d"/><path d="M1 19v-4l6-10 6 11 5-3v6z" fill="#7fbaf0" stroke="#2b88d8" stroke-width="1.1"/><path d="M1 15l6-10 4 7" fill="#fff" stroke="#2b88d8" stroke-width="1.1"/></svg>
<svg class="abs" style="left:1625px;top:300.1px" width="20" height="20" viewBox="0 0 20 20" ><path d="M1 0v19h18" fill="none" stroke="#3b3a39" stroke-width="1.2"/><path d="M2 4l6 7 4-5 7 5v6l-7-5-4 5-6-7z" fill="#7fbaf0" stroke="#2b88d8" stroke-width="1.1"/></svg>
<svg class="abs" style="left:1652.9px;top:300.1px" width="20" height="20" viewBox="0 0 20 20" ><rect x="1.5" y="1" width="17.5" height="18" fill="#7fbaf0"/><path d="M1.5 8l6 6 5-5 6.5 5v5h-17.5z" fill="#fff" stroke="#2b88d8" stroke-width="1.1"/><path d="M1 0v19h18" fill="none" stroke="#3b3a39" stroke-width="1.2"/></svg>
<svg class="abs" style="left:1680.9px;top:300.1px" width="20" height="20" viewBox="0 0 20 20" ><path d="M1 0v19h18" fill="none" stroke="#3b3a39" stroke-width="1.2"/><rect x="4" y="2" width="4" height="17" fill="#7fbaf0" stroke="#2b88d8"/><rect x="12" y="3" width="4" height="16" fill="#c8c6c4"/><path d="M2 15l5-5 4 4 7-8" fill="none" stroke="#3b3a39" stroke-width="1.2"/></svg>
<svg class="abs" style="left:1708.9px;top:300.1px" width="20" height="20" viewBox="0 0 20 20" ><path d="M1 0v19h18" fill="none" stroke="#3b3a39" stroke-width="1.2"/><rect x="4" y="9" width="4" height="10" fill="#7fbaf0" stroke="#2b88d8"/><rect x="9" y="2" width="4" height="17" fill="#fff" stroke="#3b3a39" stroke-width="0.8"/><rect x="14" y="6" width="4" height="13" fill="#c8c6c4"/><path d="M2 16l5-6 4 4 7-8" fill="none" stroke="#3b3a39" stroke-width="1.2"/></svg>
<svg class="abs" style="left:1569px;top:328.1px" width="20" height="20" viewBox="0 0 20 20" ><path d="M1 0v19h18" fill="none" stroke="#3b3a39" stroke-width="1.2"/><path d="M2 3c5 0 5 8 9 8s4-7 8-7v7c-4 0-4 5-8 5s-4-6-9-6z" fill="#8a8886"/><path d="M2 8c5 0 5 7 9 7s4-6 8-6v5c-4 0-4 4-8 4s-4-5-9-5z" fill="#2b88d8"/><path d="M2 15h6v3h-6zM13 15h6v3h-6z" fill="#e8832a"/></svg>
<svg class="abs" style="left:1597px;top:328.1px" width="20" height="20" viewBox="0 0 20 20" ><path d="M1 0v19h18" fill="none" stroke="#3b3a39" stroke-width="1.2"/><path d="M4 19v-11h3v11M7 12h3v7M10 12v-10h4v17M14 5h3v14" fill="none" stroke="#3b3a39" stroke-width="1.1"/><rect x="10.5" y="2.5" width="3" height="9" fill="#2b88d8"/></svg>
<svg class="abs" style="left:1625px;top:328.1px" width="20" height="20" viewBox="0 0 20 20" ><rect x="1" y="2" width="18" height="5" fill="#7fbaf0" stroke="#2b88d8"/><rect x="4" y="8" width="12" height="5" fill="#7fbaf0" stroke="#2b88d8"/><rect x="7" y="14" width="6" height="5" fill="#7fbaf0" stroke="#2b88d8"/></svg>
<svg class="abs" style="left:1652.9px;top:328.1px" width="20" height="20" viewBox="0 0 20 20" ><path d="M1 0v19h18" fill="none" stroke="#3b3a39" stroke-width="1.2" stroke-dasharray="2 1"/><rect x="13" y="2" width="3" height="3" fill="#3b3a39"/><rect x="7" y="6" width="2.5" height="2.5" fill="#7fbaf0"/><rect x="10" y="10" width="2.5" height="2.5" fill="#7fbaf0"/><rect x="14" y="11" width="3" height="3" fill="#7fbaf0"/><rect x="4" y="14" width="3" height="3" fill="#3b3a39"/></svg>
<svg class="abs" style="left:1680.9px;top:328.1px" width="20" height="20" viewBox="0 0 20 20" ><circle cx="10" cy="10" r="8.5" fill="#fff" stroke="#3b3a39" stroke-width="1.2"/><path d="M10 1.5a8.5 8.5 0 0 1 6 14.5l-6-6z" fill="#7fbaf0" stroke="#2b88d8"/></svg>
<svg class="abs" style="left:1708.9px;top:328.1px" width="20" height="20" viewBox="0 0 20 20" ><circle cx="10" cy="10" r="7" fill="none" stroke="#7fbaf0" stroke-width="4"/><circle cx="10" cy="10" r="9" fill="none" stroke="#2b88d8" stroke-width="1"/><circle cx="10" cy="10" r="5" fill="none" stroke="#2b88d8" stroke-width="1"/><path d="M1 10a9 9 0 0 1 9-9v4a5 5 0 0 0-5 5z" fill="#fff" stroke="#2b88d8"/></svg>
<svg class="abs" style="left:1569px;top:356.1px" width="20" height="20" viewBox="0 0 20 20" ><rect x="1" y="1" width="18" height="18" fill="#fff" stroke="#2b88d8" stroke-width="1.2"/><rect x="1" y="1" width="9" height="10" fill="#7fbaf0" stroke="#2b88d8"/><rect x="1" y="11" width="9" height="8" fill="#7fbaf0" stroke="#2b88d8"/><path d="M10 7h9M14.5 7v12M10 13h9" stroke="#2b88d8" stroke-width="1.1"/></svg>
<svg class="abs" style="left:1597px;top:356.1px" width="20" height="20" viewBox="0 0 20 20" ><circle cx="10" cy="8.5" r="7" fill="#fff" stroke="#3b3a39" stroke-width="1.2"/><path d="M6 4c2-1 4 0 4 2s-3 2-3 4 3 2 3 4c-3 1-6-2-6-6 0-2 1-3 2-4zM13 6c2 0 3 2 3 4l-2 2c-1-1-2-3-1-6z" fill="#13a10e"/><path d="M4 16.5c4 3 8 3 12 0M10 16v3M6 19.5h8" fill="none" stroke="#3b3a39" stroke-width="1.2"/></svg>
<svg class="abs" style="left:1625px;top:356.1px" width="20" height="20" viewBox="0 0 20 20" ><path d="M2 3l5 1 3-2 4 2 5-2v9l-3 5-5 3-5-3-4-4z" fill="#8a8886" stroke="#605e5c"/><path d="M2 3l5 1 1 5-3 3-3-3zM12 10l6-2v3l-3 5-4 1z" fill="#2b88d8"/><path d="M10 4l4 0 0 4-4 1z" fill="#fff"/></svg>
<svg class="abs" style="left:1652.9px;top:356.1px" width="20" height="20" viewBox="0 0 20 20" ><path d="M10 0l7 19-7-5-8 3z" fill="#35a2e8"/><path d="M10 0l7 19-7-5z" fill="#1b76c4"/></svg>
<svg class="abs" style="left:1680.9px;top:356.1px" width="20" height="20" viewBox="0 0 20 20" ><path d="M2 15a8 8 0 0 1 16 0" fill="none" stroke="#3b3a39" stroke-width="1.3"/><path d="M4.5 15a5.5 5.5 0 0 1 11 0" fill="none" stroke="#3b3a39" stroke-width="1.3"/><path d="M10 7a8 8 0 0 1 8 8h-2.5a5.5 5.5 0 0 0-5.5-5.5z" fill="#7fbaf0" stroke="#2b88d8"/><path d="M9 16l4-5" stroke="#3b3a39" stroke-width="1.8"/></svg>
<svg class="abs" style="left:1708.9px;top:356.1px" width="20" height="20" viewBox="0 0 20 20" ><rect x="1" y="1.5" width="18" height="17" fill="#fff" stroke="#3b3a39" stroke-width="1.2"/><path d="M4 6h11M4 10h8M4 14h11" stroke="#2b88d8" stroke-width="1.5"/><path d="M4 4v12" stroke="#3b3a39" stroke-width="1"/></svg>
<svg class="abs" style="left:1569px;top:384.2px" width="20" height="20" viewBox="0 0 20 20" ><rect x="1" y="2.5" width="18" height="13" fill="#fff" stroke="#3b3a39" stroke-width="1.2"/><path d="M3.5 11.5l2.5-4.5 2.5 4.5z" fill="#dff6dd" stroke="#13a10e" stroke-width="1"/><path d="M11.5 6.5h5.5l-2.75 4.8z" fill="#fde7e9" stroke="#d13438" stroke-width="1"/><path d="M1 18.5h18" stroke="#3b3a39" stroke-width="1"/></svg>
<svg class="abs" style="left:1597px;top:384.2px" width="20" height="20" viewBox="0 0 20 20" ><rect x="1" y="1.5" width="18" height="14" fill="#fff" stroke="#3b3a39" stroke-width="1.2"/><path d="M1 5h18" stroke="#3b3a39" stroke-width="1"/><rect x="3.5" y="7.5" width="3" height="3" fill="none" stroke="#3b3a39" stroke-width="0.9"/><rect x="3.5" y="11.5" width="3" height="2.5" fill="none" stroke="#3b3a39" stroke-width="0.9"/><path d="M9 8.5h10l-3.5 4.5v6l-3-1.5v-4.5z" fill="#fff" stroke="#3b3a39" stroke-width="1.2"/></svg>
<svg class="abs" style="left:1625px;top:384.2px" width="20" height="20" viewBox="0 0 20 20" ><rect x="1" y="1.5" width="18" height="17" fill="#fff" stroke="#3b3a39" stroke-width="1.2"/><path d="M1 6h18M1 10h18M1 14.5h18M7 1.5v17M13 1.5v17" stroke="#3b3a39" stroke-width="1"/></svg>
<svg class="abs" style="left:1652.9px;top:384.2px" width="20" height="20" viewBox="0 0 20 20" ><rect x="1" y="1.5" width="18" height="17" fill="#fff" stroke="#3b3a39" stroke-width="1.2"/><rect x="1" y="1.5" width="18" height="4.5" fill="#7fbaf0"/><rect x="1" y="6" width="6" height="12.5" fill="#7fbaf0"/><rect x="13" y="10" width="6" height="4.5" fill="#7fbaf0"/><path d="M1 6h18M1 10h18M1 14.5h18M7 1.5v17M13 1.5v17" stroke="#2b88d8" stroke-width="1"/></svg>
<svg class="abs" style="left:1569px;top:412.2px" width="20" height="20" viewBox="0 0 20 20" ><path d="M1 0v19" stroke="#3b3a39" stroke-width="1.2"/><path d="M1 4h12M1 10h8M1 16h6" stroke="#3b3a39" stroke-width="1"/><circle cx="15" cy="4" r="2" fill="#fff" stroke="#2b88d8" stroke-width="1.2"/><path d="M9 10h5M7 16h4" stroke="#2b88d8" stroke-width="1" stroke-dasharray="1.5 1"/></svg>
<svg class="abs" style="left:1597px;top:412.2px" width="20" height="20" viewBox="0 0 20 20" ><rect x="1" y="7.5" width="5" height="5" fill="#7fbaf0" stroke="#2b88d8"/><path d="M6 10h4M10 3v14M10 3h3M10 10h3M10 17h3" fill="none" stroke="#2b88d8" stroke-width="1.2"/><rect x="13" y="1" width="6" height="4" fill="#7fbaf0" stroke="#2b88d8"/><rect x="13" y="8" width="6" height="4" fill="#7fbaf0" stroke="#2b88d8"/><rect x="13" y="15" width="6" height="4" fill="#7fbaf0" stroke="#2b88d8"/></svg>
<svg class="abs" style="left:1625px;top:412.2px" width="20" height="20" viewBox="0 0 20 20" ><path d="M1.5 2.5h17v11h-9l-4 4v-4h-4z" fill="#fff" stroke="#2b88d8" stroke-width="1.3"/></svg>
<svg class="abs" style="left:1652.9px;top:412.2px" width="20" height="20" viewBox="0 0 20 20" ><path d="M3.5 1.5h9l4 4v13h-13z M12.5 1.5v4h4" fill="#fff" stroke="#3b3a39" stroke-width="1.2"/><path d="M1 9h5M6 12h8M6 15h8" stroke="#2b88d8" stroke-width="1.2"/></svg>
<svg class="abs" style="left:1680.9px;top:412.2px" width="20" height="20" viewBox="0 0 20 20" ><path d="M5 1.5h10v6a5 5 0 0 1-10 0z" fill="#fff" stroke="#3b3a39" stroke-width="1.3"/><path d="M5 3h-3.5v2a3.5 3.5 0 0 0 3.5 3.5M15 3h3.5v2a3.5 3.5 0 0 1-3.5 3.5M10 12.5v3M6 18.5c0-2 1.5-3 4-3s4 1 4 3z" fill="none" stroke="#3b3a39" stroke-width="1.3"/><path d="M7 3.5h6v4a3 3 0 0 1-6 0z" fill="none" stroke="#2b88d8" stroke-width="1"/></svg>
<svg class="abs" style="left:1708.9px;top:412.2px" width="20" height="20" viewBox="0 0 20 20" ><path d="M3.5 1.5h8l5 5v12h-13z M11.5 1.5v5h5" fill="#fff" stroke="#3b3a39" stroke-width="1.3"/><rect x="6" y="12" width="2.2" height="4.5" fill="#3b3a39"/><rect x="9.2" y="9.5" width="2.2" height="7" fill="#3b3a39"/><rect x="12.4" y="11" width="2.2" height="5.5" fill="#3b3a39"/></svg>
<svg class="abs" style="left:1569px;top:440.3px" width="20" height="20" viewBox="0 0 20 20" ><path d="M2 0h6l-2 4h4l-7 8 2-6h-4z" fill="#f9c27a" stroke="#e8832a" stroke-width="1"/><rect x="9" y="3" width="4" height="4" fill="none" stroke="#3b3a39"/><rect x="14" y="3" width="4" height="4" fill="none" stroke="#3b3a39"/><rect x="4" y="12" width="4" height="4" fill="none" stroke="#3b3a39"/><path d="M9 10.5h10l-3.5 4.5v5l-3-1.5v-3.5z" fill="#fff" stroke="#3b3a39" stroke-width="1.2"/></svg>
<svg class="abs" style="left:1597px;top:440.3px" width="20" height="20" viewBox="0 0 20 20" ><path d="M2 0h6l-2 4h4l-7 8 2-6h-4z" fill="#f9c27a" stroke="#e8832a" stroke-width="1"/><path d="M10 2.5h9v8M2 13v5h6" fill="none" stroke="#3b3a39" stroke-width="1.1"/><path d="M8 14l2.5-6 2 5" fill="none" stroke="#2b88d8" stroke-width="1.1"/><path d="M9 10.5h10l-3.5 4.5v5l-3-1.5v-3.5z" fill="#fff" stroke="#3b3a39" stroke-width="1.2"/></svg>
<svg class="abs" style="left:1625px;top:440.3px" width="20" height="20" viewBox="0 0 20 20" ><path d="M2 0h6l-2 4h4l-7 8 2-6h-4z" fill="#f9c27a" stroke="#e8832a" stroke-width="1"/><path d="M10 2.5h9v8M2 13v5h6" fill="none" stroke="#3b3a39" stroke-width="1.1"/><path d="M5 9h5M5 12.5h4" stroke="#3b3a39" stroke-width="1" stroke-dasharray="1.5 1"/><path d="M9 10.5h10l-3.5 4.5v5l-3-1.5v-3.5z" fill="#fff" stroke="#3b3a39" stroke-width="1.2"/></svg>
<svg class="abs" style="left:1652.9px;top:440.3px" width="20" height="20" viewBox="0 0 20 20" ><rect x="1" y="2" width="17" height="16" fill="#fff" stroke="#3b3a39" stroke-width="1.2"/><path d="M5 18c1-6 5-7 7-10l6-3v13z" fill="#2b88d8"/><path d="M2 0h3.5a2.5 2.5 0 0 1 0 7l-1.5 3-1.5-3a2.5 2.5 0 0 1-.500-7z" fill="#e8832a"/><circle cx="16" cy="17" r="2.5" fill="#e8832a"/></svg>
<svg class="abs" style="left:1680.9px;top:440.3px" width="20" height="20" viewBox="0 0 20 20" ><path d="M10 1l8.5 9-8.5 9-8.5-9z" fill="#fff" stroke="#a33fb5" stroke-width="1.4"/><path d="M6 5.5l8 9M14 5.5l-8 9" stroke="#a33fb5" stroke-width="1.4"/></svg>
<svg class="abs" style="left:1708.9px;top:440.3px" width="20" height="20" viewBox="0 0 20 20" ><path d="M1.5 2.5h10l7 7.5-7 7.5h-10l7-7.5z" fill="#fff" stroke="#2b88d8" stroke-width="1.3"/><path d="M6 2.5l7 7.5-7 7.5" fill="none" stroke="#2b88d8" stroke-width="1.3"/></svg>
<span class="tx" style="left:1683px;top:383.5px;font-size:16px;line-height:21px;-webkit-text-stroke:0.45px #2b7fc7;color:#2b7fc7;">R</span>
<span class="tx" style="left:1709px;top:382px;font-size:16px;line-height:21px;letter-spacing:-0.09px;-webkit-text-stroke:0.45px #2b7fc7;color:#2b7fc7;">Py</span>
<span class="tx" style="left:1571px;top:464.5px;font-size:13px;line-height:17px;letter-spacing:1.05px;-webkit-text-stroke:0.45px #252423;">...</span>
<div class="abs" style="left:1565px;top:494px;width:168px;height:0;border-top:1px dashed #d2d0ce"></div>
<svg class="abs" style="left:1569px;top:501px" width="20" height="20" viewBox="0 0 20 20" ><rect x="1" y="1" width="18" height="18" fill="#5da3dc"/><circle cx="7" cy="6" r="3" fill="#1b5fa8" stroke="#fff" stroke-width="0.8"/><circle cx="13" cy="5" r="2.5" fill="#fff" stroke="#1b5fa8" stroke-width="0.8"/><circle cx="5" cy="13" r="2.5" fill="#fff" stroke="#1b5fa8" stroke-width="0.8"/><path d="M8 9.5h11l-4 5v5l-3-1.5v-3.5z" fill="#fff" stroke="#3b3a39" stroke-width="1.2"/></svg>
<svg class="abs" style="left:1597px;top:501px" width="20" height="20" viewBox="0 0 20 20" ><rect x="1" y="1" width="18" height="18" fill="#5da3dc"/><circle cx="7" cy="6" r="3" fill="#1b5fa8" stroke="#fff" stroke-width="0.8"/><circle cx="13" cy="5" r="2.5" fill="#fff" stroke="#1b5fa8" stroke-width="0.8"/><circle cx="5" cy="13" r="2.5" fill="#fff" stroke="#1b5fa8" stroke-width="0.8"/><path d="M8 9.5h11l-4 5v5l-3-1.5v-3.5z" fill="#fff" stroke="#3b3a39" stroke-width="1.2"/></svg>
<svg class="abs" style="left:1625px;top:501px" width="20" height="20" viewBox="0 0 20 20" ><rect x="1" y="1" width="18" height="18" fill="#3d8fd6"/><circle cx="7" cy="6" r="3" fill="#fff" stroke="#1b5fa8" stroke-width="0.8"/><circle cx="13" cy="5" r="2.5" fill="#bfe0f7" stroke="#1b5fa8" stroke-width="0.8"/><circle cx="12" cy="12" r="3" fill="#fff" stroke="#1b5fa8" stroke-width="0.8"/><circle cx="6" cy="14" r="2.5" fill="#bfe0f7" stroke="#1b5fa8" stroke-width="0.8"/></svg>
<div class="abs" style="left:1559px;top:527px;width:180px;height:1px;background:#d8d6d4"></div>
<span class="tx" style="left:1571px;top:539px;font-size:12px;line-height:16px;letter-spacing:-0.47px;">Values</span>
<div class="abs" style="left:1563px;top:560px;width:170px;height:28px;background:#fff;border:1px dashed #c8c6c4;border-radius:2px"></div>
<span class="tx" style="left:1574px;top:566.5px;font-size:12px;line-height:16px;letter-spacing:0.01px;">Add data fields here</span>
<span class="tx" style="left:1571px;top:599px;font-size:12px;line-height:16px;letter-spacing:0.37px;-webkit-text-stroke:0.45px #3b3a39;color:#3b3a39;">Drill through</span>
<span class="tx" style="left:1571px;top:624px;font-size:12px;line-height:16px;letter-spacing:0.03px;">Cross-report</span>
<span class="tx" style="left:1571px;top:651px;font-size:12px;line-height:16px;letter-spacing:-0.06px;">Keep all filters</span>
<div class="abs" style="left:1684px;top:624px;width:33px;height:16px;border:1.2px solid #605e5c;border-radius:8px;background:#fff"></div><div class="abs" style="left:1689px;top:628px;width:8px;height:8px;border-radius:4px;background:#605e5c"></div>
<span class="tx" style="left:1699px;top:626.3px;font-size:9.5px;line-height:12px;letter-spacing:0.17px;color:#605e5c;">Off</span>
<div class="abs" style="left:1684px;top:651px;width:33px;height:16px;border-radius:8px;background:#117865"></div><div class="abs" style="left:1704px;top:655px;width:8px;height:8px;border-radius:4px;background:#fff"></div>
<span class="tx" style="left:1689.5px;top:653.3px;font-size:9.5px;line-height:12px;letter-spacing:-0.34px;color:#fff;">On</span>
<div class="abs" style="left:1563px;top:677px;width:170px;height:26px;background:#fff;border:1px dashed #c8c6c4;border-radius:2px"></div>
<span class="tx" style="left:1572px;top:682.5px;font-size:12px;line-height:16px;letter-spacing:0.15px;">Add drill-through fields here</span>
<div id="data"></div>
<span class="tx" style="left:1748.5px;top:169.5px;font-size:15px;line-height:20px;letter-spacing:0.33px;-webkit-text-stroke:0.45px #252423;">Data</span>
<svg class="abs" style="left:1899px;top:173px" width="13" height="12" viewBox="0 0 13 12" ><path d="M1 1l5 5-5 5M7 1l5 5-5 5" fill="none" stroke="#252423" stroke-width="1.3"/></svg>
<div class="abs" style="left:1745px;top:205px;width:171px;height:24px;background:#fff;border:1px solid #c8c6c4;border-bottom:1.5px solid #8a8886;border-radius:3px"></div>
<svg class="abs" style="left:1757px;top:210px" width="14" height="14" viewBox="0 0 14 14" ><circle cx="5.5" cy="5.5" r="4.5" fill="none" stroke="#3b3a39" stroke-width="1.2"/><path d="M9 9l4.5 4.5" stroke="#3b3a39" stroke-width="1.2"/></svg>
<span class="tx" style="left:1778.5px;top:208px;font-size:13.5px;line-height:18px;letter-spacing:-0.3px;color:#605e5c;">Search</span>
<svg class="abs" style="left:1755px;top:244.6px" width="8" height="12" viewBox="0 0 8 12" ><path d="M1.5 1l5 5-5 5" fill="none" stroke="#3b3a39" stroke-width="1.1"/></svg>
<svg class="abs" style="left:1769px;top:244.6px" width="12" height="12" viewBox="0 0 12 12" ><rect x="0.7" y="0.7" width="10.6" height="10.6" rx="2" fill="none" stroke="#252423" stroke-width="1.2"/><path d="M0.7 4.3h10.6M0.7 7.8h10.6M4.3 0.7v10.6M7.8 0.7v10.6" stroke="#252423" stroke-width="1"/></svg>
<span class="tx" style="left:1787.3px;top:242.6px;font-size:12.6px;line-height:16px;letter-spacing:-0.56px;">Crew Type Colors</span>
<svg class="abs" style="left:1755px;top:268.6px" width="8" height="12" viewBox="0 0 8 12" ><path d="M1.5 1l5 5-5 5" fill="none" stroke="#3b3a39" stroke-width="1.1"/></svg>
<svg class="abs" style="left:1769px;top:268.6px" width="12" height="12" viewBox="0 0 12 12" ><rect x="0.7" y="0.7" width="10.6" height="10.6" rx="2" fill="none" stroke="#252423" stroke-width="1.2"/><path d="M0.7 4.3h10.6M0.7 7.8h10.6M4.3 0.7v10.6M7.8 0.7v10.6" stroke="#252423" stroke-width="1"/></svg>
<span class="tx" style="left:1787.3px;top:266.6px;font-size:12.6px;line-height:16px;letter-spacing:-0.2px;">Duration</span>
<svg class="abs" style="left:1755px;top:292.5px" width="8" height="12" viewBox="0 0 8 12" ><path d="M1.5 1l5 5-5 5" fill="none" stroke="#3b3a39" stroke-width="1.1"/></svg>
<svg class="abs" style="left:1769px;top:292.5px" width="12" height="12" viewBox="0 0 12 12" ><rect x="0.7" y="0.7" width="10.6" height="10.6" rx="2" fill="none" stroke="#252423" stroke-width="1.2"/><path d="M0.7 4.3h10.6M0.7 7.8h10.6M4.3 0.7v10.6M7.8 0.7v10.6" stroke="#252423" stroke-width="1"/></svg>
<span class="tx" style="left:1787.3px;top:290.5px;font-size:12.6px;line-height:16px;letter-spacing:-0.3px;">Duration Colors</span>
<svg class="abs" style="left:1755px;top:316.5px" width="8" height="12" viewBox="0 0 8 12" ><path d="M1.5 1l5 5-5 5" fill="none" stroke="#3b3a39" stroke-width="1.1"/></svg>
<svg class="abs" style="left:1769px;top:316.5px" width="12" height="12" viewBox="0 0 12 12" ><rect x="0.7" y="0.7" width="10.6" height="10.6" rx="2" fill="none" stroke="#252423" stroke-width="1.2"/><path d="M0.7 4.3h10.6M0.7 7.8h10.6M4.3 0.7v10.6M7.8 0.7v10.6" stroke="#252423" stroke-width="1"/></svg>
<span class="tx" style="left:1787.3px;top:314.5px;font-size:12.6px;line-height:16px;letter-spacing:-0.33px;">Duration Join</span>
<svg class="abs" style="left:1755px;top:340.4px" width="8" height="12" viewBox="0 0 8 12" ><path d="M1.5 1l5 5-5 5" fill="none" stroke="#3b3a39" stroke-width="1.1"/></svg>
<svg class="abs" style="left:1769px;top:340.4px" width="12" height="12" viewBox="0 0 12 12" ><rect x="0.7" y="0.7" width="10.6" height="10.6" rx="2" fill="none" stroke="#252423" stroke-width="1.2"/><path d="M0.7 4.3h10.6M0.7 7.8h10.6M4.3 0.7v10.6M7.8 0.7v10.6" stroke="#252423" stroke-width="1"/></svg>
<span class="tx" style="left:1787.3px;top:338.4px;font-size:12.6px;line-height:16px;letter-spacing:-0.53px;">Fire Stations and Trave...</span>
<svg class="abs" style="left:1755px;top:364.4px" width="8" height="12" viewBox="0 0 8 12" ><path d="M1.5 1l5 5-5 5" fill="none" stroke="#3b3a39" stroke-width="1.1"/></svg>
<svg class="abs" style="left:1769px;top:364.4px" width="14" height="14" viewBox="0 0 14 14" ><path d="M7 11.3h-4.3a2 2 0 0 1-2-2v-6.6a2 2 0 0 1 2-2h6.6a2 2 0 0 1 2 2v2.3M0.7 4.3h10.6M0.7 7.8h5M4.3 0.7v10.6M7.8 0.7v4" fill="none" stroke="#252423" stroke-width="1.1"/><rect x="7.5" y="6" width="6" height="7.5" rx="1" fill="#f3f2f1" stroke="#252423" stroke-width="1.1"/><path d="M9 8h3M9 10h.8M11.2 10h.8M9 11.8h.8M11.2 11.8h.8" stroke="#252423" stroke-width="0.9"/></svg>
<span class="tx" style="left:1787.3px;top:362.4px;font-size:12.6px;line-height:16px;letter-spacing:-0.63px;">TimeRange</span>
<div id="pagetabs"></div>
<svg class="abs" style="left:52px;top:1027px" width="21" height="17" viewBox="0 0 21 17" ><rect x="1" y="1" width="19" height="11.5" fill="none" stroke="#3b3a39" stroke-width="1.3"/><path d="M10.5 12.5v3M6.5 16h8" stroke="#3b3a39" stroke-width="1.3"/></svg>
<div class="abs" style="left:51px;top:1048px;width:24px;height:3px;background:#117865;border-radius:1.5px"></div>
<svg class="abs" style="left:100px;top:1024px" width="14" height="22" viewBox="0 0 14 22" ><rect x="1" y="1" width="12" height="19" rx="1.5" fill="none" stroke="#3b3a39" stroke-width="1.3"/><path d="M6 17h2" stroke="#3b3a39" stroke-width="1.3"/></svg>
<svg class="abs" style="left:134px;top:1033px" width="6" height="9" viewBox="0 0 6 9" ><path d="M5.5 0.5v8l-5-4z" fill="#c8c6c4"/></svg>
<svg class="abs" style="left:155px;top:1033px" width="6" height="9" viewBox="0 0 6 9" ><path d="M0.5 0.5v8l5-4z" fill="#c8c6c4"/></svg>
<div class="abs" style="left:168px;top:1020px;width:77px;height:35px;background:#fff;border-left:1px solid #8a8886;border-bottom:3px solid #117865"></div>
<span class="tx" style="left:189.5px;top:1030.5px;font-size:12.5px;line-height:16px;letter-spacing:-1.1px;-webkit-text-stroke:0.45px #252423;">Page 1</span>
<div class="abs" style="left:245px;top:1020px;width:39px;height:35px;background:#117865"></div>
<svg class="abs" style="left:258px;top:1031px" width="12" height="12" viewBox="0 0 12 12" ><path d="M6 0.5v11M0.5 6h11" stroke="#fff" stroke-width="2.2"/></svg>
<div id="status"></div>
<span class="tx" style="left:4px;top:1060.5px;font-size:12px;line-height:16px;letter-spacing:-0.22px;color:#3b3a39;">Page 1 of 1</span>
<span class="tx" style="left:1515px;top:1059.5px;font-size:13px;line-height:17px;color:#3b3a39;">-</span>
<div class="abs" style="left:1526px;top:1068px;width:100px;height:1px;background:#605e5c"></div>
<div class="abs" style="left:1576px;top:1062px;width:3px;height:12px;background:#3b3a39"></div>
<span class="tx" style="left:1631px;top:1059.5px;font-size:13px;line-height:17px;color:#3b3a39;">+</span>
<span class="tx" style="left:1652px;top:1060.5px;font-size:12px;line-height:16px;letter-spacing:-0.45px;color:#3b3a39;">116%</span>
<svg class="abs" style="left:1694px;top:1062px" width="17" height="13" viewBox="0 0 17 13" ><rect x="0.7" y="0.7" width="15.6" height="11.6" rx="1.5" fill="none" stroke="#3b3a39" stroke-width="1.2"/><path d="M3.5 6v-2.5h3M13.5 7v2.5h-3" fill="none" stroke="#3b3a39" stroke-width="1.1"/></svg>
<span class="tx" style="left:1724px;top:1060.5px;font-size:12px;line-height:16px;letter-spacing:-0.03px;color:#3b3a39;">Update available (click to download)</span>
<div class="abs" style="left:0;top:160px;width:1920px;height:4px;background:linear-gradient(rgba(0,0,0,.13),rgba(0,0,0,0))"></div>
</body>
</html>
